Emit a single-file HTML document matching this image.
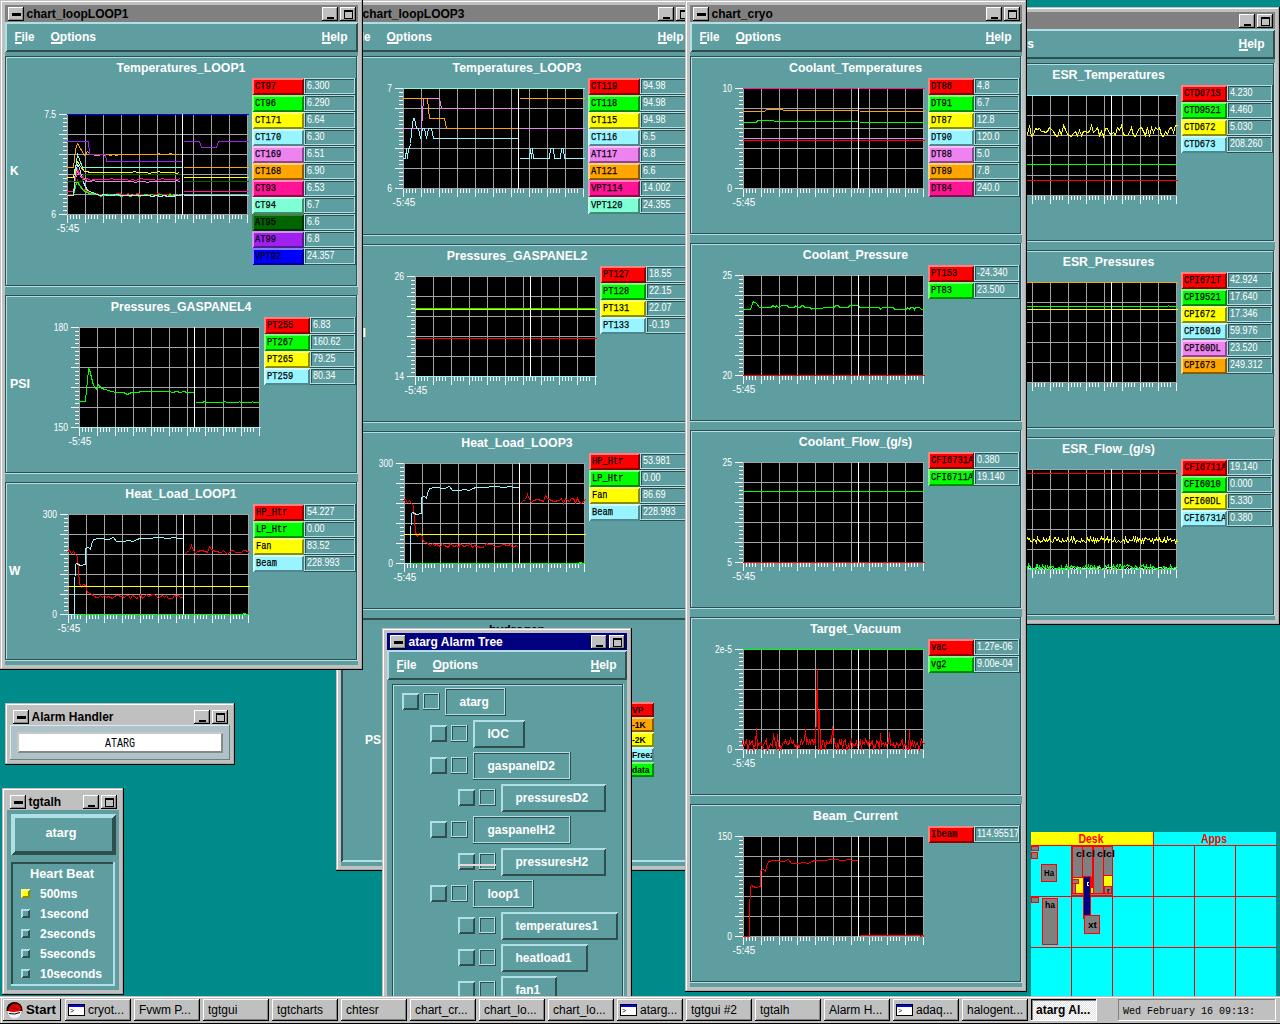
<!DOCTYPE html>
<html><head><meta charset="utf-8"><style>
html,body{margin:0;padding:0;background:#008b8b;overflow:hidden}
svg{display:block}
</style></head><body>
<svg width="1280" height="1024" viewBox="0 0 1280 1024" shape-rendering="crispEdges" font-family="Liberation Sans">
<defs><pattern id="dith" width="2" height="2" patternUnits="userSpaceOnUse"><rect width="1" height="1" fill="#fff"/><rect x="1" y="1" width="1" height="1" fill="#fff"/></pattern></defs>
<rect x="0" y="0" width="1280" height="1024" fill="#008b8b"/>
<rect x="336" y="0" width="363" height="871" fill="#c0c0c0"/>
<rect x="337" y="1" width="361" height="1" fill="#fff"/>
<rect x="337" y="1" width="1" height="869" fill="#fff"/>
<rect x="698" y="0" width="1" height="871" fill="#000"/>
<rect x="336" y="870" width="363" height="1" fill="#000"/>
<rect x="697" y="1" width="1" height="869" fill="#a8a8a8"/>
<rect x="337" y="869" width="361" height="1" fill="#a8a8a8"/>
<rect x="341" y="5" width="353" height="17" fill="#808080"/>
<rect x="344" y="7" width="16" height="14" fill="#c0c0c0"/>
<rect x="344" y="7" width="16" height="1" fill="#fff"/>
<rect x="344" y="7" width="1" height="14" fill="#fff"/>
<rect x="359" y="7" width="1" height="14" fill="#000"/>
<rect x="344" y="20" width="16" height="1" fill="#000"/>
<rect x="358" y="8" width="1" height="12" fill="#888"/>
<rect x="345" y="19" width="14" height="1" fill="#888"/>
<rect x="348" y="13" width="9" height="3" fill="#000"/>
<rect x="658" y="7" width="16" height="14" fill="#c0c0c0"/>
<rect x="658" y="7" width="16" height="1" fill="#fff"/>
<rect x="658" y="7" width="1" height="14" fill="#fff"/>
<rect x="673" y="7" width="1" height="14" fill="#000"/>
<rect x="658" y="20" width="16" height="1" fill="#000"/>
<rect x="672" y="8" width="1" height="12" fill="#888"/>
<rect x="659" y="19" width="14" height="1" fill="#888"/>
<rect x="663" y="17" width="7" height="2" fill="#000"/>
<rect x="676" y="7" width="16" height="14" fill="#c0c0c0"/>
<rect x="676" y="7" width="16" height="1" fill="#fff"/>
<rect x="676" y="7" width="1" height="14" fill="#fff"/>
<rect x="691" y="7" width="1" height="14" fill="#000"/>
<rect x="676" y="20" width="16" height="1" fill="#000"/>
<rect x="690" y="8" width="1" height="12" fill="#888"/>
<rect x="677" y="19" width="14" height="1" fill="#888"/>
<rect x="680" y="10" width="9" height="2" fill="#000"/>
<rect x="680" y="10" width="1" height="9" fill="#000"/>
<rect x="688" y="10" width="1" height="9" fill="#000"/>
<rect x="680" y="18" width="9" height="1" fill="#000"/>
<text x="362.5" y="18" font-size="12" font-weight="bold" fill="#000">chart_loopLOOP3</text>
<rect x="341" y="22" width="353" height="844" fill="#5f9ea0"/>
<rect x="341" y="22" width="353" height="30" fill="#5f9ea0"/>
<polygon points="341,22 694,22 692,24 343,24 343,50 341,52" fill="#b0e0e6"/>
<polygon points="694,22 694,52 341,52 343,50 692,50 692,24" fill="#2f4f4f"/>
<text x="350.5" y="41" font-size="12" font-weight="bold" fill="#fff" textLength="20" lengthAdjust="spacingAndGlyphs">File</text>
<rect x="351" y="42" width="7" height="2" fill="#fff"/>
<text x="386.5" y="41" font-size="12" font-weight="bold" fill="#fff" textLength="45.5" lengthAdjust="spacingAndGlyphs">Options</text>
<rect x="387" y="42" width="11" height="2" fill="#fff"/>
<text x="657.5" y="41" font-size="12" font-weight="bold" fill="#fff" textLength="26" lengthAdjust="spacingAndGlyphs">Help</text>
<rect x="658" y="42" width="9" height="2" fill="#fff"/>
<rect x="341" y="56" width="353" height="180" fill="#5f9ea0"/>
<rect x="341" y="56" width="353" height="1" fill="#2f4f4f"/>
<rect x="341" y="56" width="1" height="180" fill="#2f4f4f"/>
<rect x="342" y="57" width="351" height="1" fill="#b0e0e6"/>
<rect x="342" y="57" width="1" height="178" fill="#b0e0e6"/>
<rect x="342" y="234" width="351" height="1" fill="#2f4f4f"/>
<rect x="692" y="57" width="1" height="178" fill="#2f4f4f"/>
<rect x="341" y="235" width="353" height="1" fill="#b0e0e6"/>
<rect x="693" y="56" width="1" height="180" fill="#b0e0e6"/>
<text x="517.0" y="72" font-size="12" font-weight="bold" fill="#fff" text-anchor="middle" textLength="128.9" lengthAdjust="spacingAndGlyphs">Temperatures_LOOP3</text>
<rect x="403" y="88" width="181" height="101" fill="#000"/>
<rect x="403" y="88" width="1" height="101" fill="#a3a3a3"/>
<rect x="421" y="88" width="1" height="101" fill="#a3a3a3"/>
<rect x="439" y="88" width="1" height="101" fill="#a3a3a3"/>
<rect x="457" y="88" width="1" height="101" fill="#a3a3a3"/>
<rect x="475" y="88" width="1" height="101" fill="#a3a3a3"/>
<rect x="493" y="88" width="1" height="101" fill="#a3a3a3"/>
<rect x="511" y="88" width="1" height="101" fill="#a3a3a3"/>
<rect x="529" y="88" width="1" height="101" fill="#a3a3a3"/>
<rect x="547" y="88" width="1" height="101" fill="#a3a3a3"/>
<rect x="565" y="88" width="1" height="101" fill="#a3a3a3"/>
<rect x="583" y="88" width="1" height="101" fill="#a3a3a3"/>
<rect x="403" y="88" width="181" height="1" fill="#a3a3a3"/>
<rect x="403" y="108" width="181" height="1" fill="#a3a3a3"/>
<rect x="403" y="128" width="181" height="1" fill="#a3a3a3"/>
<rect x="403" y="148" width="181" height="1" fill="#a3a3a3"/>
<rect x="403" y="168" width="181" height="1" fill="#a3a3a3"/>
<rect x="403" y="188" width="181" height="1" fill="#a3a3a3"/>
<rect x="395" y="88" width="8" height="1" fill="#fff"/>
<rect x="399" y="92" width="4" height="1" fill="#fff"/>
<rect x="399" y="96" width="4" height="1" fill="#fff"/>
<rect x="399" y="100" width="4" height="1" fill="#fff"/>
<rect x="399" y="104" width="4" height="1" fill="#fff"/>
<rect x="395" y="108" width="8" height="1" fill="#fff"/>
<rect x="399" y="112" width="4" height="1" fill="#fff"/>
<rect x="399" y="116" width="4" height="1" fill="#fff"/>
<rect x="399" y="120" width="4" height="1" fill="#fff"/>
<rect x="399" y="124" width="4" height="1" fill="#fff"/>
<rect x="395" y="128" width="8" height="1" fill="#fff"/>
<rect x="399" y="132" width="4" height="1" fill="#fff"/>
<rect x="399" y="136" width="4" height="1" fill="#fff"/>
<rect x="399" y="140" width="4" height="1" fill="#fff"/>
<rect x="399" y="144" width="4" height="1" fill="#fff"/>
<rect x="395" y="148" width="8" height="1" fill="#fff"/>
<rect x="399" y="152" width="4" height="1" fill="#fff"/>
<rect x="399" y="156" width="4" height="1" fill="#fff"/>
<rect x="399" y="160" width="4" height="1" fill="#fff"/>
<rect x="399" y="164" width="4" height="1" fill="#fff"/>
<rect x="395" y="168" width="8" height="1" fill="#fff"/>
<rect x="399" y="172" width="4" height="1" fill="#fff"/>
<rect x="399" y="176" width="4" height="1" fill="#fff"/>
<rect x="399" y="180" width="4" height="1" fill="#fff"/>
<rect x="399" y="184" width="4" height="1" fill="#fff"/>
<rect x="395" y="188" width="8" height="1" fill="#fff"/>
<rect x="403" y="189" width="1" height="8" fill="#fff"/>
<rect x="406" y="189" width="1" height="4" fill="#fff"/>
<rect x="409" y="189" width="1" height="4" fill="#fff"/>
<rect x="412" y="189" width="1" height="4" fill="#fff"/>
<rect x="415" y="189" width="1" height="4" fill="#fff"/>
<rect x="421" y="189" width="1" height="8" fill="#fff"/>
<rect x="424" y="189" width="1" height="4" fill="#fff"/>
<rect x="427" y="189" width="1" height="4" fill="#fff"/>
<rect x="430" y="189" width="1" height="4" fill="#fff"/>
<rect x="433" y="189" width="1" height="4" fill="#fff"/>
<rect x="439" y="189" width="1" height="8" fill="#fff"/>
<rect x="442" y="189" width="1" height="4" fill="#fff"/>
<rect x="445" y="189" width="1" height="4" fill="#fff"/>
<rect x="448" y="189" width="1" height="4" fill="#fff"/>
<rect x="451" y="189" width="1" height="4" fill="#fff"/>
<rect x="457" y="189" width="1" height="8" fill="#fff"/>
<rect x="460" y="189" width="1" height="4" fill="#fff"/>
<rect x="463" y="189" width="1" height="4" fill="#fff"/>
<rect x="466" y="189" width="1" height="4" fill="#fff"/>
<rect x="469" y="189" width="1" height="4" fill="#fff"/>
<rect x="475" y="189" width="1" height="8" fill="#fff"/>
<rect x="478" y="189" width="1" height="4" fill="#fff"/>
<rect x="481" y="189" width="1" height="4" fill="#fff"/>
<rect x="484" y="189" width="1" height="4" fill="#fff"/>
<rect x="487" y="189" width="1" height="4" fill="#fff"/>
<rect x="493" y="189" width="1" height="8" fill="#fff"/>
<rect x="496" y="189" width="1" height="4" fill="#fff"/>
<rect x="499" y="189" width="1" height="4" fill="#fff"/>
<rect x="502" y="189" width="1" height="4" fill="#fff"/>
<rect x="505" y="189" width="1" height="4" fill="#fff"/>
<rect x="511" y="189" width="1" height="8" fill="#fff"/>
<rect x="514" y="189" width="1" height="4" fill="#fff"/>
<rect x="517" y="189" width="1" height="4" fill="#fff"/>
<rect x="520" y="189" width="1" height="4" fill="#fff"/>
<rect x="523" y="189" width="1" height="4" fill="#fff"/>
<rect x="529" y="189" width="1" height="8" fill="#fff"/>
<rect x="532" y="189" width="1" height="4" fill="#fff"/>
<rect x="535" y="189" width="1" height="4" fill="#fff"/>
<rect x="538" y="189" width="1" height="4" fill="#fff"/>
<rect x="541" y="189" width="1" height="4" fill="#fff"/>
<rect x="547" y="189" width="1" height="8" fill="#fff"/>
<rect x="550" y="189" width="1" height="4" fill="#fff"/>
<rect x="553" y="189" width="1" height="4" fill="#fff"/>
<rect x="556" y="189" width="1" height="4" fill="#fff"/>
<rect x="559" y="189" width="1" height="4" fill="#fff"/>
<rect x="565" y="189" width="1" height="8" fill="#fff"/>
<rect x="568" y="189" width="1" height="4" fill="#fff"/>
<rect x="571" y="189" width="1" height="4" fill="#fff"/>
<rect x="574" y="189" width="1" height="4" fill="#fff"/>
<rect x="577" y="189" width="1" height="4" fill="#fff"/>
<rect x="583" y="189" width="1" height="8" fill="#fff"/>
<polyline points="402.5,88.5 584.5,88.5" fill="none" stroke="#7fffd4" stroke-width="1"/>
<polyline points="402.5,128.5 421.5,128.5 422.5,114.5 423.5,98.5 439.5,98.5 440.5,103.5 441.5,108.5 517.5,108.5" fill="none" stroke="#ee82ee" stroke-width="1"/>
<polyline points="519.5,128.5 584.5,128.5" fill="none" stroke="#ee82ee" stroke-width="1"/>
<polyline points="402.5,98.5 427.5,98.5 428.5,108.5 429.5,118.5 444.5,118.5 445.5,123.5 446.5,128.5 517.5,128.5" fill="none" stroke="#ffa500" stroke-width="1"/>
<polyline points="519.5,98.5 584.5,98.5" fill="none" stroke="#ffa500" stroke-width="1"/>
<polyline points="402.5,158.5 405.5,158.5 406.5,148.5 407.5,158.5 408.5,148.5 409.5,148.5 410.5,143.5 411.5,133.5 412.5,123.5 413.5,118.5 414.5,118.5 415.5,123.5 416.5,128.5 418.5,128.5 419.5,133.5 420.5,138.5 421.5,133.5 422.5,128.5 424.5,128.5 425.5,133.5 426.5,138.5 427.5,133.5 428.5,128.5 431.5,128.5 432.5,133.5 433.5,138.5 517.5,138.5" fill="none" stroke="#98f5ff" stroke-width="1"/>
<polyline points="519.5,158.5 529.5,158.5 530.5,148.5 531.5,158.5 532.5,148.5 533.5,158.5 549.5,158.5 550.5,148.5 553.5,148.5 554.5,158.5 560.5,158.5 561.5,148.5 563.5,148.5 564.5,158.5 584.5,158.5" fill="none" stroke="#98f5ff" stroke-width="1"/>
<rect x="518" y="88" width="1" height="101" fill="#fff"/>
<text x="392" y="92" font-size="10" fill="#fff" text-anchor="end" textLength="4.7" lengthAdjust="spacingAndGlyphs">7</text>
<text x="392" y="192" font-size="10" fill="#fff" text-anchor="end" textLength="4.7" lengthAdjust="spacingAndGlyphs">6</text>
<text x="404" y="206" font-size="10" fill="#fff" text-anchor="middle">-5:45</text>
<rect x="588" y="78" width="52" height="17" fill="#ff0000"/>
<polygon points="588,78 640,78 638,80 590,80 590,93 588,95" fill="#ff8080"/>
<polygon points="640,78 640,95 588,95 590,93 638,93 638,80" fill="#8b0000"/>
<svg x="590" y="80" width="48" height="13" overflow="hidden">
<text x="1" y="9" font-size="11" fill="#000" textLength="26.2" lengthAdjust="spacingAndGlyphs" font-family="Liberation Mono" stroke="#000" stroke-width="0.25">CT119</text>
</svg>
<rect x="640" y="78" width="52" height="17" fill="#5f9ea0"/>
<rect x="640" y="78" width="52" height="1" fill="#b0e0e6"/>
<rect x="640" y="78" width="1" height="17" fill="#b0e0e6"/>
<rect x="641" y="79" width="50" height="1" fill="#2f4f4f"/>
<rect x="641" y="79" width="1" height="15" fill="#2f4f4f"/>
<rect x="641" y="93" width="50" height="1" fill="#b0e0e6"/>
<rect x="690" y="79" width="1" height="15" fill="#b0e0e6"/>
<rect x="640" y="94" width="52" height="1" fill="#2f4f4f"/>
<rect x="691" y="78" width="1" height="17" fill="#2f4f4f"/>
<svg x="642" y="80" width="48" height="13" overflow="hidden">
<text x="1" y="9" font-size="10" fill="#fff" textLength="22.5" lengthAdjust="spacingAndGlyphs">94.98</text>
</svg>
<rect x="588" y="95" width="52" height="17" fill="#00ff00"/>
<polygon points="588,95 640,95 638,97 590,97 590,110 588,112" fill="#80ff80"/>
<polygon points="640,95 640,112 588,112 590,110 638,110 638,97" fill="#008b00"/>
<svg x="590" y="97" width="48" height="13" overflow="hidden">
<text x="1" y="9" font-size="11" fill="#000" textLength="26.2" lengthAdjust="spacingAndGlyphs" font-family="Liberation Mono" stroke="#000" stroke-width="0.25">CT118</text>
</svg>
<rect x="640" y="95" width="52" height="17" fill="#5f9ea0"/>
<rect x="640" y="95" width="52" height="1" fill="#b0e0e6"/>
<rect x="640" y="95" width="1" height="17" fill="#b0e0e6"/>
<rect x="641" y="96" width="50" height="1" fill="#2f4f4f"/>
<rect x="641" y="96" width="1" height="15" fill="#2f4f4f"/>
<rect x="641" y="110" width="50" height="1" fill="#b0e0e6"/>
<rect x="690" y="96" width="1" height="15" fill="#b0e0e6"/>
<rect x="640" y="111" width="52" height="1" fill="#2f4f4f"/>
<rect x="691" y="95" width="1" height="17" fill="#2f4f4f"/>
<svg x="642" y="97" width="48" height="13" overflow="hidden">
<text x="1" y="9" font-size="10" fill="#fff" textLength="22.5" lengthAdjust="spacingAndGlyphs">94.98</text>
</svg>
<rect x="588" y="112" width="52" height="17" fill="#ffff00"/>
<polygon points="588,112 640,112 638,114 590,114 590,127 588,129" fill="#ffff80"/>
<polygon points="640,112 640,129 588,129 590,127 638,127 638,114" fill="#8b8b00"/>
<svg x="590" y="114" width="48" height="13" overflow="hidden">
<text x="1" y="9" font-size="11" fill="#000" textLength="26.2" lengthAdjust="spacingAndGlyphs" font-family="Liberation Mono" stroke="#000" stroke-width="0.25">CT115</text>
</svg>
<rect x="640" y="112" width="52" height="17" fill="#5f9ea0"/>
<rect x="640" y="112" width="52" height="1" fill="#b0e0e6"/>
<rect x="640" y="112" width="1" height="17" fill="#b0e0e6"/>
<rect x="641" y="113" width="50" height="1" fill="#2f4f4f"/>
<rect x="641" y="113" width="1" height="15" fill="#2f4f4f"/>
<rect x="641" y="127" width="50" height="1" fill="#b0e0e6"/>
<rect x="690" y="113" width="1" height="15" fill="#b0e0e6"/>
<rect x="640" y="128" width="52" height="1" fill="#2f4f4f"/>
<rect x="691" y="112" width="1" height="17" fill="#2f4f4f"/>
<svg x="642" y="114" width="48" height="13" overflow="hidden">
<text x="1" y="9" font-size="10" fill="#fff" textLength="22.5" lengthAdjust="spacingAndGlyphs">94.98</text>
</svg>
<rect x="588" y="129" width="52" height="17" fill="#98f5ff"/>
<polygon points="588,129 640,129 638,131 590,131 590,144 588,146" fill="#d0faff"/>
<polygon points="640,129 640,146 588,146 590,144 638,144 638,131" fill="#53868b"/>
<svg x="590" y="131" width="48" height="13" overflow="hidden">
<text x="1" y="9" font-size="11" fill="#000" textLength="26.2" lengthAdjust="spacingAndGlyphs" font-family="Liberation Mono" stroke="#000" stroke-width="0.25">CT116</text>
</svg>
<rect x="640" y="129" width="52" height="17" fill="#5f9ea0"/>
<rect x="640" y="129" width="52" height="1" fill="#b0e0e6"/>
<rect x="640" y="129" width="1" height="17" fill="#b0e0e6"/>
<rect x="641" y="130" width="50" height="1" fill="#2f4f4f"/>
<rect x="641" y="130" width="1" height="15" fill="#2f4f4f"/>
<rect x="641" y="144" width="50" height="1" fill="#b0e0e6"/>
<rect x="690" y="130" width="1" height="15" fill="#b0e0e6"/>
<rect x="640" y="145" width="52" height="1" fill="#2f4f4f"/>
<rect x="691" y="129" width="1" height="17" fill="#2f4f4f"/>
<svg x="642" y="131" width="48" height="13" overflow="hidden">
<text x="1" y="9" font-size="10" fill="#fff" textLength="12.5" lengthAdjust="spacingAndGlyphs">6.5</text>
</svg>
<rect x="588" y="146" width="52" height="17" fill="#ee82ee"/>
<polygon points="588,146 640,146 638,148 590,148 590,161 588,163" fill="#f8c0f8"/>
<polygon points="640,146 640,163 588,163 590,161 638,161 638,148" fill="#8b478b"/>
<svg x="590" y="148" width="48" height="13" overflow="hidden">
<text x="1" y="9" font-size="11" fill="#000" textLength="26.2" lengthAdjust="spacingAndGlyphs" font-family="Liberation Mono" stroke="#000" stroke-width="0.25">AT117</text>
</svg>
<rect x="640" y="146" width="52" height="17" fill="#5f9ea0"/>
<rect x="640" y="146" width="52" height="1" fill="#b0e0e6"/>
<rect x="640" y="146" width="1" height="17" fill="#b0e0e6"/>
<rect x="641" y="147" width="50" height="1" fill="#2f4f4f"/>
<rect x="641" y="147" width="1" height="15" fill="#2f4f4f"/>
<rect x="641" y="161" width="50" height="1" fill="#b0e0e6"/>
<rect x="690" y="147" width="1" height="15" fill="#b0e0e6"/>
<rect x="640" y="162" width="52" height="1" fill="#2f4f4f"/>
<rect x="691" y="146" width="1" height="17" fill="#2f4f4f"/>
<svg x="642" y="148" width="48" height="13" overflow="hidden">
<text x="1" y="9" font-size="10" fill="#fff" textLength="12.5" lengthAdjust="spacingAndGlyphs">6.8</text>
</svg>
<rect x="588" y="163" width="52" height="17" fill="#ffa500"/>
<polygon points="588,163 640,163 638,165 590,165 590,178 588,180" fill="#ffd280"/>
<polygon points="640,163 640,180 588,180 590,178 638,178 638,165" fill="#8b5a00"/>
<svg x="590" y="165" width="48" height="13" overflow="hidden">
<text x="1" y="9" font-size="11" fill="#000" textLength="26.2" lengthAdjust="spacingAndGlyphs" font-family="Liberation Mono" stroke="#000" stroke-width="0.25">AT121</text>
</svg>
<rect x="640" y="163" width="52" height="17" fill="#5f9ea0"/>
<rect x="640" y="163" width="52" height="1" fill="#b0e0e6"/>
<rect x="640" y="163" width="1" height="17" fill="#b0e0e6"/>
<rect x="641" y="164" width="50" height="1" fill="#2f4f4f"/>
<rect x="641" y="164" width="1" height="15" fill="#2f4f4f"/>
<rect x="641" y="178" width="50" height="1" fill="#b0e0e6"/>
<rect x="690" y="164" width="1" height="15" fill="#b0e0e6"/>
<rect x="640" y="179" width="52" height="1" fill="#2f4f4f"/>
<rect x="691" y="163" width="1" height="17" fill="#2f4f4f"/>
<svg x="642" y="165" width="48" height="13" overflow="hidden">
<text x="1" y="9" font-size="10" fill="#fff" textLength="12.5" lengthAdjust="spacingAndGlyphs">6.6</text>
</svg>
<rect x="588" y="180" width="52" height="17" fill="#ff1493"/>
<polygon points="588,180 640,180 638,182 590,182 590,195 588,197" fill="#ff8ac8"/>
<polygon points="640,180 640,197 588,197 590,195 638,195 638,182" fill="#8b0a50"/>
<svg x="590" y="182" width="48" height="13" overflow="hidden">
<text x="1" y="9" font-size="11" fill="#000" textLength="31.6" lengthAdjust="spacingAndGlyphs" font-family="Liberation Mono" stroke="#000" stroke-width="0.25">VPT114</text>
</svg>
<rect x="640" y="180" width="52" height="17" fill="#5f9ea0"/>
<rect x="640" y="180" width="52" height="1" fill="#b0e0e6"/>
<rect x="640" y="180" width="1" height="17" fill="#b0e0e6"/>
<rect x="641" y="181" width="50" height="1" fill="#2f4f4f"/>
<rect x="641" y="181" width="1" height="15" fill="#2f4f4f"/>
<rect x="641" y="195" width="50" height="1" fill="#b0e0e6"/>
<rect x="690" y="181" width="1" height="15" fill="#b0e0e6"/>
<rect x="640" y="196" width="52" height="1" fill="#2f4f4f"/>
<rect x="691" y="180" width="1" height="17" fill="#2f4f4f"/>
<svg x="642" y="182" width="48" height="13" overflow="hidden">
<text x="1" y="9" font-size="10" fill="#fff" textLength="27.5" lengthAdjust="spacingAndGlyphs">14.002</text>
</svg>
<rect x="588" y="197" width="52" height="17" fill="#7fffd4"/>
<polygon points="588,197 640,197 638,199 590,199 590,212 588,214" fill="#c0ffea"/>
<polygon points="640,197 640,214 588,214 590,212 638,212 638,199" fill="#458b74"/>
<svg x="590" y="199" width="48" height="13" overflow="hidden">
<text x="1" y="9" font-size="11" fill="#000" textLength="31.6" lengthAdjust="spacingAndGlyphs" font-family="Liberation Mono" stroke="#000" stroke-width="0.25">VPT120</text>
</svg>
<rect x="640" y="197" width="52" height="17" fill="#5f9ea0"/>
<rect x="640" y="197" width="52" height="1" fill="#b0e0e6"/>
<rect x="640" y="197" width="1" height="17" fill="#b0e0e6"/>
<rect x="641" y="198" width="50" height="1" fill="#2f4f4f"/>
<rect x="641" y="198" width="1" height="15" fill="#2f4f4f"/>
<rect x="641" y="212" width="50" height="1" fill="#b0e0e6"/>
<rect x="690" y="198" width="1" height="15" fill="#b0e0e6"/>
<rect x="640" y="213" width="52" height="1" fill="#2f4f4f"/>
<rect x="691" y="197" width="1" height="17" fill="#2f4f4f"/>
<svg x="642" y="199" width="48" height="13" overflow="hidden">
<text x="1" y="9" font-size="10" fill="#fff" textLength="27.5" lengthAdjust="spacingAndGlyphs">24.355</text>
</svg>
<rect x="341" y="244" width="353" height="179" fill="#5f9ea0"/>
<rect x="341" y="244" width="353" height="1" fill="#2f4f4f"/>
<rect x="341" y="244" width="1" height="179" fill="#2f4f4f"/>
<rect x="342" y="245" width="351" height="1" fill="#b0e0e6"/>
<rect x="342" y="245" width="1" height="177" fill="#b0e0e6"/>
<rect x="342" y="421" width="351" height="1" fill="#2f4f4f"/>
<rect x="692" y="245" width="1" height="177" fill="#2f4f4f"/>
<rect x="341" y="422" width="353" height="1" fill="#b0e0e6"/>
<rect x="693" y="244" width="1" height="179" fill="#b0e0e6"/>
<text x="517.0" y="260" font-size="12" font-weight="bold" fill="#fff" text-anchor="middle" textLength="140.6" lengthAdjust="spacingAndGlyphs">Pressures_GASPANEL2</text>
<text x="346" y="337" font-size="12" font-weight="bold" fill="#fff" textLength="20" lengthAdjust="spacingAndGlyphs">PSI</text>
<rect x="415" y="276" width="181" height="101" fill="#000"/>
<rect x="415" y="276" width="1" height="101" fill="#a3a3a3"/>
<rect x="433" y="276" width="1" height="101" fill="#a3a3a3"/>
<rect x="451" y="276" width="1" height="101" fill="#a3a3a3"/>
<rect x="469" y="276" width="1" height="101" fill="#a3a3a3"/>
<rect x="487" y="276" width="1" height="101" fill="#a3a3a3"/>
<rect x="505" y="276" width="1" height="101" fill="#a3a3a3"/>
<rect x="523" y="276" width="1" height="101" fill="#a3a3a3"/>
<rect x="541" y="276" width="1" height="101" fill="#a3a3a3"/>
<rect x="559" y="276" width="1" height="101" fill="#a3a3a3"/>
<rect x="577" y="276" width="1" height="101" fill="#a3a3a3"/>
<rect x="595" y="276" width="1" height="101" fill="#a3a3a3"/>
<rect x="415" y="276" width="181" height="1" fill="#a3a3a3"/>
<rect x="415" y="296" width="181" height="1" fill="#a3a3a3"/>
<rect x="415" y="316" width="181" height="1" fill="#a3a3a3"/>
<rect x="415" y="336" width="181" height="1" fill="#a3a3a3"/>
<rect x="415" y="356" width="181" height="1" fill="#a3a3a3"/>
<rect x="415" y="376" width="181" height="1" fill="#a3a3a3"/>
<rect x="407" y="276" width="8" height="1" fill="#fff"/>
<rect x="411" y="280" width="4" height="1" fill="#fff"/>
<rect x="411" y="284" width="4" height="1" fill="#fff"/>
<rect x="411" y="288" width="4" height="1" fill="#fff"/>
<rect x="411" y="292" width="4" height="1" fill="#fff"/>
<rect x="407" y="296" width="8" height="1" fill="#fff"/>
<rect x="411" y="300" width="4" height="1" fill="#fff"/>
<rect x="411" y="304" width="4" height="1" fill="#fff"/>
<rect x="411" y="308" width="4" height="1" fill="#fff"/>
<rect x="411" y="312" width="4" height="1" fill="#fff"/>
<rect x="407" y="316" width="8" height="1" fill="#fff"/>
<rect x="411" y="320" width="4" height="1" fill="#fff"/>
<rect x="411" y="324" width="4" height="1" fill="#fff"/>
<rect x="411" y="328" width="4" height="1" fill="#fff"/>
<rect x="411" y="332" width="4" height="1" fill="#fff"/>
<rect x="407" y="336" width="8" height="1" fill="#fff"/>
<rect x="411" y="340" width="4" height="1" fill="#fff"/>
<rect x="411" y="344" width="4" height="1" fill="#fff"/>
<rect x="411" y="348" width="4" height="1" fill="#fff"/>
<rect x="411" y="352" width="4" height="1" fill="#fff"/>
<rect x="407" y="356" width="8" height="1" fill="#fff"/>
<rect x="411" y="360" width="4" height="1" fill="#fff"/>
<rect x="411" y="364" width="4" height="1" fill="#fff"/>
<rect x="411" y="368" width="4" height="1" fill="#fff"/>
<rect x="411" y="372" width="4" height="1" fill="#fff"/>
<rect x="407" y="376" width="8" height="1" fill="#fff"/>
<rect x="415" y="377" width="1" height="8" fill="#fff"/>
<rect x="418" y="377" width="1" height="4" fill="#fff"/>
<rect x="421" y="377" width="1" height="4" fill="#fff"/>
<rect x="424" y="377" width="1" height="4" fill="#fff"/>
<rect x="427" y="377" width="1" height="4" fill="#fff"/>
<rect x="433" y="377" width="1" height="8" fill="#fff"/>
<rect x="436" y="377" width="1" height="4" fill="#fff"/>
<rect x="439" y="377" width="1" height="4" fill="#fff"/>
<rect x="442" y="377" width="1" height="4" fill="#fff"/>
<rect x="445" y="377" width="1" height="4" fill="#fff"/>
<rect x="451" y="377" width="1" height="8" fill="#fff"/>
<rect x="454" y="377" width="1" height="4" fill="#fff"/>
<rect x="457" y="377" width="1" height="4" fill="#fff"/>
<rect x="460" y="377" width="1" height="4" fill="#fff"/>
<rect x="463" y="377" width="1" height="4" fill="#fff"/>
<rect x="469" y="377" width="1" height="8" fill="#fff"/>
<rect x="472" y="377" width="1" height="4" fill="#fff"/>
<rect x="475" y="377" width="1" height="4" fill="#fff"/>
<rect x="478" y="377" width="1" height="4" fill="#fff"/>
<rect x="481" y="377" width="1" height="4" fill="#fff"/>
<rect x="487" y="377" width="1" height="8" fill="#fff"/>
<rect x="490" y="377" width="1" height="4" fill="#fff"/>
<rect x="493" y="377" width="1" height="4" fill="#fff"/>
<rect x="496" y="377" width="1" height="4" fill="#fff"/>
<rect x="499" y="377" width="1" height="4" fill="#fff"/>
<rect x="505" y="377" width="1" height="8" fill="#fff"/>
<rect x="508" y="377" width="1" height="4" fill="#fff"/>
<rect x="511" y="377" width="1" height="4" fill="#fff"/>
<rect x="514" y="377" width="1" height="4" fill="#fff"/>
<rect x="517" y="377" width="1" height="4" fill="#fff"/>
<rect x="523" y="377" width="1" height="8" fill="#fff"/>
<rect x="526" y="377" width="1" height="4" fill="#fff"/>
<rect x="529" y="377" width="1" height="4" fill="#fff"/>
<rect x="532" y="377" width="1" height="4" fill="#fff"/>
<rect x="535" y="377" width="1" height="4" fill="#fff"/>
<rect x="541" y="377" width="1" height="8" fill="#fff"/>
<rect x="544" y="377" width="1" height="4" fill="#fff"/>
<rect x="547" y="377" width="1" height="4" fill="#fff"/>
<rect x="550" y="377" width="1" height="4" fill="#fff"/>
<rect x="553" y="377" width="1" height="4" fill="#fff"/>
<rect x="559" y="377" width="1" height="8" fill="#fff"/>
<rect x="562" y="377" width="1" height="4" fill="#fff"/>
<rect x="565" y="377" width="1" height="4" fill="#fff"/>
<rect x="568" y="377" width="1" height="4" fill="#fff"/>
<rect x="571" y="377" width="1" height="4" fill="#fff"/>
<rect x="577" y="377" width="1" height="8" fill="#fff"/>
<rect x="580" y="377" width="1" height="4" fill="#fff"/>
<rect x="583" y="377" width="1" height="4" fill="#fff"/>
<rect x="586" y="377" width="1" height="4" fill="#fff"/>
<rect x="589" y="377" width="1" height="4" fill="#fff"/>
<rect x="595" y="377" width="1" height="8" fill="#fff"/>
<polyline points="414.5,376.5 596.5,376.5" fill="none" stroke="#98f5ff" stroke-width="1"/>
<polyline points="414.5,309.5 596.5,309.5" fill="none" stroke="#ffff00" stroke-width="1"/>
<polyline points="414.5,308.5 596.5,308.5" fill="none" stroke="#00ff00" stroke-width="1"/>
<polyline points="414.5,338.5 596.5,338.5" fill="none" stroke="#ff0000" stroke-width="1"/>
<rect x="530" y="276" width="1" height="101" fill="#fff"/>
<text x="404" y="280" font-size="10" fill="#fff" text-anchor="end" textLength="9.5" lengthAdjust="spacingAndGlyphs">26</text>
<text x="404" y="380" font-size="10" fill="#fff" text-anchor="end" textLength="9.5" lengthAdjust="spacingAndGlyphs">14</text>
<text x="416" y="394" font-size="10" fill="#fff" text-anchor="middle">-5:45</text>
<rect x="600" y="266" width="46" height="17" fill="#ff0000"/>
<polygon points="600,266 646,266 644,268 602,268 602,281 600,283" fill="#ff8080"/>
<polygon points="646,266 646,283 600,283 602,281 644,281 644,268" fill="#8b0000"/>
<svg x="602" y="268" width="42" height="13" overflow="hidden">
<text x="1" y="9" font-size="11" fill="#000" textLength="26.2" lengthAdjust="spacingAndGlyphs" font-family="Liberation Mono" stroke="#000" stroke-width="0.25">PT127</text>
</svg>
<rect x="646" y="266" width="46" height="17" fill="#5f9ea0"/>
<rect x="646" y="266" width="46" height="1" fill="#b0e0e6"/>
<rect x="646" y="266" width="1" height="17" fill="#b0e0e6"/>
<rect x="647" y="267" width="44" height="1" fill="#2f4f4f"/>
<rect x="647" y="267" width="1" height="15" fill="#2f4f4f"/>
<rect x="647" y="281" width="44" height="1" fill="#b0e0e6"/>
<rect x="690" y="267" width="1" height="15" fill="#b0e0e6"/>
<rect x="646" y="282" width="46" height="1" fill="#2f4f4f"/>
<rect x="691" y="266" width="1" height="17" fill="#2f4f4f"/>
<svg x="648" y="268" width="42" height="13" overflow="hidden">
<text x="1" y="9" font-size="10" fill="#fff" textLength="22.5" lengthAdjust="spacingAndGlyphs">18.55</text>
</svg>
<rect x="600" y="283" width="46" height="17" fill="#00ff00"/>
<polygon points="600,283 646,283 644,285 602,285 602,298 600,300" fill="#80ff80"/>
<polygon points="646,283 646,300 600,300 602,298 644,298 644,285" fill="#008b00"/>
<svg x="602" y="285" width="42" height="13" overflow="hidden">
<text x="1" y="9" font-size="11" fill="#000" textLength="26.2" lengthAdjust="spacingAndGlyphs" font-family="Liberation Mono" stroke="#000" stroke-width="0.25">PT128</text>
</svg>
<rect x="646" y="283" width="46" height="17" fill="#5f9ea0"/>
<rect x="646" y="283" width="46" height="1" fill="#b0e0e6"/>
<rect x="646" y="283" width="1" height="17" fill="#b0e0e6"/>
<rect x="647" y="284" width="44" height="1" fill="#2f4f4f"/>
<rect x="647" y="284" width="1" height="15" fill="#2f4f4f"/>
<rect x="647" y="298" width="44" height="1" fill="#b0e0e6"/>
<rect x="690" y="284" width="1" height="15" fill="#b0e0e6"/>
<rect x="646" y="299" width="46" height="1" fill="#2f4f4f"/>
<rect x="691" y="283" width="1" height="17" fill="#2f4f4f"/>
<svg x="648" y="285" width="42" height="13" overflow="hidden">
<text x="1" y="9" font-size="10" fill="#fff" textLength="22.5" lengthAdjust="spacingAndGlyphs">22.15</text>
</svg>
<rect x="600" y="300" width="46" height="17" fill="#ffff00"/>
<polygon points="600,300 646,300 644,302 602,302 602,315 600,317" fill="#ffff80"/>
<polygon points="646,300 646,317 600,317 602,315 644,315 644,302" fill="#8b8b00"/>
<svg x="602" y="302" width="42" height="13" overflow="hidden">
<text x="1" y="9" font-size="11" fill="#000" textLength="26.2" lengthAdjust="spacingAndGlyphs" font-family="Liberation Mono" stroke="#000" stroke-width="0.25">PT131</text>
</svg>
<rect x="646" y="300" width="46" height="17" fill="#5f9ea0"/>
<rect x="646" y="300" width="46" height="1" fill="#b0e0e6"/>
<rect x="646" y="300" width="1" height="17" fill="#b0e0e6"/>
<rect x="647" y="301" width="44" height="1" fill="#2f4f4f"/>
<rect x="647" y="301" width="1" height="15" fill="#2f4f4f"/>
<rect x="647" y="315" width="44" height="1" fill="#b0e0e6"/>
<rect x="690" y="301" width="1" height="15" fill="#b0e0e6"/>
<rect x="646" y="316" width="46" height="1" fill="#2f4f4f"/>
<rect x="691" y="300" width="1" height="17" fill="#2f4f4f"/>
<svg x="648" y="302" width="42" height="13" overflow="hidden">
<text x="1" y="9" font-size="10" fill="#fff" textLength="22.5" lengthAdjust="spacingAndGlyphs">22.07</text>
</svg>
<rect x="600" y="317" width="46" height="17" fill="#98f5ff"/>
<polygon points="600,317 646,317 644,319 602,319 602,332 600,334" fill="#d0faff"/>
<polygon points="646,317 646,334 600,334 602,332 644,332 644,319" fill="#53868b"/>
<svg x="602" y="319" width="42" height="13" overflow="hidden">
<text x="1" y="9" font-size="11" fill="#000" textLength="26.2" lengthAdjust="spacingAndGlyphs" font-family="Liberation Mono" stroke="#000" stroke-width="0.25">PT133</text>
</svg>
<rect x="646" y="317" width="46" height="17" fill="#5f9ea0"/>
<rect x="646" y="317" width="46" height="1" fill="#b0e0e6"/>
<rect x="646" y="317" width="1" height="17" fill="#b0e0e6"/>
<rect x="647" y="318" width="44" height="1" fill="#2f4f4f"/>
<rect x="647" y="318" width="1" height="15" fill="#2f4f4f"/>
<rect x="647" y="332" width="44" height="1" fill="#b0e0e6"/>
<rect x="690" y="318" width="1" height="15" fill="#b0e0e6"/>
<rect x="646" y="333" width="46" height="1" fill="#2f4f4f"/>
<rect x="691" y="317" width="1" height="17" fill="#2f4f4f"/>
<svg x="648" y="319" width="42" height="13" overflow="hidden">
<text x="1" y="9" font-size="10" fill="#fff" textLength="20.5" lengthAdjust="spacingAndGlyphs">-0.19</text>
</svg>
<rect x="341" y="431" width="353" height="179" fill="#5f9ea0"/>
<rect x="341" y="431" width="353" height="1" fill="#2f4f4f"/>
<rect x="341" y="431" width="1" height="179" fill="#2f4f4f"/>
<rect x="342" y="432" width="351" height="1" fill="#b0e0e6"/>
<rect x="342" y="432" width="1" height="177" fill="#b0e0e6"/>
<rect x="342" y="608" width="351" height="1" fill="#2f4f4f"/>
<rect x="692" y="432" width="1" height="177" fill="#2f4f4f"/>
<rect x="341" y="609" width="353" height="1" fill="#b0e0e6"/>
<rect x="693" y="431" width="1" height="179" fill="#b0e0e6"/>
<text x="517.0" y="447" font-size="12" font-weight="bold" fill="#fff" text-anchor="middle" textLength="111.4" lengthAdjust="spacingAndGlyphs">Heat_Load_LOOP3</text>
<rect x="404" y="463" width="181" height="101" fill="#000"/>
<rect x="404" y="463" width="1" height="101" fill="#a3a3a3"/>
<rect x="422" y="463" width="1" height="101" fill="#a3a3a3"/>
<rect x="440" y="463" width="1" height="101" fill="#a3a3a3"/>
<rect x="458" y="463" width="1" height="101" fill="#a3a3a3"/>
<rect x="476" y="463" width="1" height="101" fill="#a3a3a3"/>
<rect x="494" y="463" width="1" height="101" fill="#a3a3a3"/>
<rect x="512" y="463" width="1" height="101" fill="#a3a3a3"/>
<rect x="530" y="463" width="1" height="101" fill="#a3a3a3"/>
<rect x="548" y="463" width="1" height="101" fill="#a3a3a3"/>
<rect x="566" y="463" width="1" height="101" fill="#a3a3a3"/>
<rect x="584" y="463" width="1" height="101" fill="#a3a3a3"/>
<rect x="404" y="463" width="181" height="1" fill="#a3a3a3"/>
<rect x="404" y="483" width="181" height="1" fill="#a3a3a3"/>
<rect x="404" y="503" width="181" height="1" fill="#a3a3a3"/>
<rect x="404" y="523" width="181" height="1" fill="#a3a3a3"/>
<rect x="404" y="543" width="181" height="1" fill="#a3a3a3"/>
<rect x="404" y="563" width="181" height="1" fill="#a3a3a3"/>
<rect x="396" y="463" width="8" height="1" fill="#fff"/>
<rect x="400" y="467" width="4" height="1" fill="#fff"/>
<rect x="400" y="471" width="4" height="1" fill="#fff"/>
<rect x="400" y="475" width="4" height="1" fill="#fff"/>
<rect x="400" y="479" width="4" height="1" fill="#fff"/>
<rect x="396" y="483" width="8" height="1" fill="#fff"/>
<rect x="400" y="487" width="4" height="1" fill="#fff"/>
<rect x="400" y="491" width="4" height="1" fill="#fff"/>
<rect x="400" y="495" width="4" height="1" fill="#fff"/>
<rect x="400" y="499" width="4" height="1" fill="#fff"/>
<rect x="396" y="503" width="8" height="1" fill="#fff"/>
<rect x="400" y="507" width="4" height="1" fill="#fff"/>
<rect x="400" y="511" width="4" height="1" fill="#fff"/>
<rect x="400" y="515" width="4" height="1" fill="#fff"/>
<rect x="400" y="519" width="4" height="1" fill="#fff"/>
<rect x="396" y="523" width="8" height="1" fill="#fff"/>
<rect x="400" y="527" width="4" height="1" fill="#fff"/>
<rect x="400" y="531" width="4" height="1" fill="#fff"/>
<rect x="400" y="535" width="4" height="1" fill="#fff"/>
<rect x="400" y="539" width="4" height="1" fill="#fff"/>
<rect x="396" y="543" width="8" height="1" fill="#fff"/>
<rect x="400" y="547" width="4" height="1" fill="#fff"/>
<rect x="400" y="551" width="4" height="1" fill="#fff"/>
<rect x="400" y="555" width="4" height="1" fill="#fff"/>
<rect x="400" y="559" width="4" height="1" fill="#fff"/>
<rect x="396" y="563" width="8" height="1" fill="#fff"/>
<rect x="404" y="564" width="1" height="8" fill="#fff"/>
<rect x="407" y="564" width="1" height="4" fill="#fff"/>
<rect x="410" y="564" width="1" height="4" fill="#fff"/>
<rect x="413" y="564" width="1" height="4" fill="#fff"/>
<rect x="416" y="564" width="1" height="4" fill="#fff"/>
<rect x="422" y="564" width="1" height="8" fill="#fff"/>
<rect x="425" y="564" width="1" height="4" fill="#fff"/>
<rect x="428" y="564" width="1" height="4" fill="#fff"/>
<rect x="431" y="564" width="1" height="4" fill="#fff"/>
<rect x="434" y="564" width="1" height="4" fill="#fff"/>
<rect x="440" y="564" width="1" height="8" fill="#fff"/>
<rect x="443" y="564" width="1" height="4" fill="#fff"/>
<rect x="446" y="564" width="1" height="4" fill="#fff"/>
<rect x="449" y="564" width="1" height="4" fill="#fff"/>
<rect x="452" y="564" width="1" height="4" fill="#fff"/>
<rect x="458" y="564" width="1" height="8" fill="#fff"/>
<rect x="461" y="564" width="1" height="4" fill="#fff"/>
<rect x="464" y="564" width="1" height="4" fill="#fff"/>
<rect x="467" y="564" width="1" height="4" fill="#fff"/>
<rect x="470" y="564" width="1" height="4" fill="#fff"/>
<rect x="476" y="564" width="1" height="8" fill="#fff"/>
<rect x="479" y="564" width="1" height="4" fill="#fff"/>
<rect x="482" y="564" width="1" height="4" fill="#fff"/>
<rect x="485" y="564" width="1" height="4" fill="#fff"/>
<rect x="488" y="564" width="1" height="4" fill="#fff"/>
<rect x="494" y="564" width="1" height="8" fill="#fff"/>
<rect x="497" y="564" width="1" height="4" fill="#fff"/>
<rect x="500" y="564" width="1" height="4" fill="#fff"/>
<rect x="503" y="564" width="1" height="4" fill="#fff"/>
<rect x="506" y="564" width="1" height="4" fill="#fff"/>
<rect x="512" y="564" width="1" height="8" fill="#fff"/>
<rect x="515" y="564" width="1" height="4" fill="#fff"/>
<rect x="518" y="564" width="1" height="4" fill="#fff"/>
<rect x="521" y="564" width="1" height="4" fill="#fff"/>
<rect x="524" y="564" width="1" height="4" fill="#fff"/>
<rect x="530" y="564" width="1" height="8" fill="#fff"/>
<rect x="533" y="564" width="1" height="4" fill="#fff"/>
<rect x="536" y="564" width="1" height="4" fill="#fff"/>
<rect x="539" y="564" width="1" height="4" fill="#fff"/>
<rect x="542" y="564" width="1" height="4" fill="#fff"/>
<rect x="548" y="564" width="1" height="8" fill="#fff"/>
<rect x="551" y="564" width="1" height="4" fill="#fff"/>
<rect x="554" y="564" width="1" height="4" fill="#fff"/>
<rect x="557" y="564" width="1" height="4" fill="#fff"/>
<rect x="560" y="564" width="1" height="4" fill="#fff"/>
<rect x="566" y="564" width="1" height="8" fill="#fff"/>
<rect x="569" y="564" width="1" height="4" fill="#fff"/>
<rect x="572" y="564" width="1" height="4" fill="#fff"/>
<rect x="575" y="564" width="1" height="4" fill="#fff"/>
<rect x="578" y="564" width="1" height="4" fill="#fff"/>
<rect x="584" y="564" width="1" height="8" fill="#fff"/>
<polyline points="403.5,500.5 405.5,499.5 407.5,502.5 409.5,500.5 411.5,503.5 413.5,505.5 414.5,518.5 415.5,532.5 417.5,536.5 419.5,533.5 421.5,534.5 423.5,541.5 426.5,542.5 430.5,545.5 432.5,543.5 434.5,545.5 436.5,544.5 438.5,545.5 440.5,546.5 442.5,543.5 444.5,545.5 446.5,546.5 448.5,547.5 450.5,543.5 452.5,545.5 454.5,546.5 456.5,545.5 458.5,547.5 460.5,543.5 462.5,545.5 464.5,546.5 466.5,545.5 468.5,545.5 470.5,543.5 472.5,547.5 474.5,545.5 476.5,546.5 478.5,546.5 480.5,547.5 482.5,547.5 484.5,546.5 486.5,543.5 488.5,544.5 490.5,544.5 492.5,544.5 494.5,546.5 496.5,546.5 498.5,546.5 500.5,546.5 502.5,544.5 504.5,544.5 506.5,545.5 508.5,545.5 510.5,544.5 512.5,547.5 514.5,546.5 516.5,545.5 518.5,547.5" fill="none" stroke="#ff0000" stroke-width="1"/>
<polyline points="520.5,503.5 522.5,501.5 525.5,499.5 527.5,494.5 529.5,499.5 531.5,502.5 533.5,500.5 537.5,499.5 541.5,500.5 543.5,501.5 545.5,495.5 547.5,498.5 551.5,500.5 553.5,501.5 555.5,501.5 557.5,500.5 559.5,500.5 561.5,498.5 563.5,503.5 565.5,498.5 567.5,500.5 569.5,501.5 571.5,498.5 573.5,498.5 575.5,502.5 577.5,498.5 579.5,502.5 581.5,503.5 583.5,501.5 585.5,499.5" fill="none" stroke="#ff0000" stroke-width="1"/>
<polyline points="403.5,563.5 410.5,563.5 410.5,538.5 411.5,513.5 412.5,512.5 416.5,514.5 421.5,513.5 421.5,497.5 424.5,496.5 426.5,498.5 427.5,493.5 429.5,488.5 434.5,487.5 444.5,488.5 449.5,486.5 452.5,490.5 459.5,490.5 464.5,489.5 469.5,490.5 472.5,488.5 476.5,487.5 484.5,487.5 494.5,486.5 504.5,487.5 509.5,486.5 514.5,487.5 518.5,487.5" fill="none" stroke="#98f5ff" stroke-width="1"/>
<polyline points="520.5,563.5 585.5,563.5" fill="none" stroke="#98f5ff" stroke-width="1"/>
<polyline points="410.5,563.5 518.5,563.5" fill="none" stroke="#00ff00" stroke-width="1"/>
<polyline points="520.5,563.5 578.5,563.5 580.5,562.5 582.5,563.5 585.5,563.5" fill="none" stroke="#00ff00" stroke-width="1"/>
<polyline points="403.5,534.5 585.5,534.5" fill="none" stroke="#ffff00" stroke-width="1"/>
<rect x="519" y="463" width="1" height="101" fill="#fff"/>
<text x="393" y="467" font-size="10" fill="#fff" text-anchor="end" textLength="14.2" lengthAdjust="spacingAndGlyphs">300</text>
<text x="393" y="567" font-size="10" fill="#fff" text-anchor="end" textLength="4.7" lengthAdjust="spacingAndGlyphs">0</text>
<text x="405" y="581" font-size="10" fill="#fff" text-anchor="middle">-5:45</text>
<rect x="589" y="453" width="51" height="17" fill="#ff0000"/>
<polygon points="589,453 640,453 638,455 591,455 591,468 589,470" fill="#ff8080"/>
<polygon points="640,453 640,470 589,470 591,468 638,468 638,455" fill="#8b0000"/>
<svg x="591" y="455" width="47" height="13" overflow="hidden">
<text x="1" y="9" font-size="11" fill="#000" textLength="31.6" lengthAdjust="spacingAndGlyphs" font-family="Liberation Mono" stroke="#000" stroke-width="0.25">HP_Htr</text>
</svg>
<rect x="640" y="453" width="52" height="17" fill="#5f9ea0"/>
<rect x="640" y="453" width="52" height="1" fill="#b0e0e6"/>
<rect x="640" y="453" width="1" height="17" fill="#b0e0e6"/>
<rect x="641" y="454" width="50" height="1" fill="#2f4f4f"/>
<rect x="641" y="454" width="1" height="15" fill="#2f4f4f"/>
<rect x="641" y="468" width="50" height="1" fill="#b0e0e6"/>
<rect x="690" y="454" width="1" height="15" fill="#b0e0e6"/>
<rect x="640" y="469" width="52" height="1" fill="#2f4f4f"/>
<rect x="691" y="453" width="1" height="17" fill="#2f4f4f"/>
<svg x="642" y="455" width="48" height="13" overflow="hidden">
<text x="1" y="9" font-size="10" fill="#fff" textLength="27.5" lengthAdjust="spacingAndGlyphs">53.981</text>
</svg>
<rect x="589" y="470" width="51" height="17" fill="#00ff00"/>
<polygon points="589,470 640,470 638,472 591,472 591,485 589,487" fill="#80ff80"/>
<polygon points="640,470 640,487 589,487 591,485 638,485 638,472" fill="#008b00"/>
<svg x="591" y="472" width="47" height="13" overflow="hidden">
<text x="1" y="9" font-size="11" fill="#000" textLength="31.6" lengthAdjust="spacingAndGlyphs" font-family="Liberation Mono" stroke="#000" stroke-width="0.25">LP_Htr</text>
</svg>
<rect x="640" y="470" width="52" height="17" fill="#5f9ea0"/>
<rect x="640" y="470" width="52" height="1" fill="#b0e0e6"/>
<rect x="640" y="470" width="1" height="17" fill="#b0e0e6"/>
<rect x="641" y="471" width="50" height="1" fill="#2f4f4f"/>
<rect x="641" y="471" width="1" height="15" fill="#2f4f4f"/>
<rect x="641" y="485" width="50" height="1" fill="#b0e0e6"/>
<rect x="690" y="471" width="1" height="15" fill="#b0e0e6"/>
<rect x="640" y="486" width="52" height="1" fill="#2f4f4f"/>
<rect x="691" y="470" width="1" height="17" fill="#2f4f4f"/>
<svg x="642" y="472" width="48" height="13" overflow="hidden">
<text x="1" y="9" font-size="10" fill="#fff" textLength="17.5" lengthAdjust="spacingAndGlyphs">0.00</text>
</svg>
<rect x="589" y="487" width="51" height="17" fill="#ffff00"/>
<polygon points="589,487 640,487 638,489 591,489 591,502 589,504" fill="#ffff80"/>
<polygon points="640,487 640,504 589,504 591,502 638,502 638,489" fill="#8b8b00"/>
<svg x="591" y="489" width="47" height="13" overflow="hidden">
<text x="1" y="9" font-size="11" fill="#000" textLength="15.5" lengthAdjust="spacingAndGlyphs" font-family="Liberation Mono" stroke="#000" stroke-width="0.25">Fan</text>
</svg>
<rect x="640" y="487" width="52" height="17" fill="#5f9ea0"/>
<rect x="640" y="487" width="52" height="1" fill="#b0e0e6"/>
<rect x="640" y="487" width="1" height="17" fill="#b0e0e6"/>
<rect x="641" y="488" width="50" height="1" fill="#2f4f4f"/>
<rect x="641" y="488" width="1" height="15" fill="#2f4f4f"/>
<rect x="641" y="502" width="50" height="1" fill="#b0e0e6"/>
<rect x="690" y="488" width="1" height="15" fill="#b0e0e6"/>
<rect x="640" y="503" width="52" height="1" fill="#2f4f4f"/>
<rect x="691" y="487" width="1" height="17" fill="#2f4f4f"/>
<svg x="642" y="489" width="48" height="13" overflow="hidden">
<text x="1" y="9" font-size="10" fill="#fff" textLength="22.5" lengthAdjust="spacingAndGlyphs">86.69</text>
</svg>
<rect x="589" y="504" width="51" height="17" fill="#98f5ff"/>
<polygon points="589,504 640,504 638,506 591,506 591,519 589,521" fill="#d0faff"/>
<polygon points="640,504 640,521 589,521 591,519 638,519 638,506" fill="#53868b"/>
<svg x="591" y="506" width="47" height="13" overflow="hidden">
<text x="1" y="9" font-size="11" fill="#000" textLength="20.9" lengthAdjust="spacingAndGlyphs" font-family="Liberation Mono" stroke="#000" stroke-width="0.25">Beam</text>
</svg>
<rect x="640" y="504" width="52" height="17" fill="#5f9ea0"/>
<rect x="640" y="504" width="52" height="1" fill="#b0e0e6"/>
<rect x="640" y="504" width="1" height="17" fill="#b0e0e6"/>
<rect x="641" y="505" width="50" height="1" fill="#2f4f4f"/>
<rect x="641" y="505" width="1" height="15" fill="#2f4f4f"/>
<rect x="641" y="519" width="50" height="1" fill="#b0e0e6"/>
<rect x="690" y="505" width="1" height="15" fill="#b0e0e6"/>
<rect x="640" y="520" width="52" height="1" fill="#2f4f4f"/>
<rect x="691" y="504" width="1" height="17" fill="#2f4f4f"/>
<svg x="642" y="506" width="48" height="13" overflow="hidden">
<text x="1" y="9" font-size="10" fill="#fff" textLength="32.5" lengthAdjust="spacingAndGlyphs">228.993</text>
</svg>
<rect x="341" y="618" width="353" height="244" fill="#5f9ea0"/>
<polygon points="341,618 694,618 692,620 343,620 343,860 341,862" fill="#2f4f4f"/>
<polygon points="694,618 694,862 341,862 343,860 692,860 692,620" fill="#b0e0e6"/>
<text x="517.0" y="634" font-size="12" font-weight="bold" fill="#000" text-anchor="middle" textLength="56.0" lengthAdjust="spacingAndGlyphs">hydrogen</text>
<text x="365" y="744" font-size="12" font-weight="bold" fill="#fff">PS</text>
<rect x="612" y="702" width="42" height="15" fill="#ff0000"/>
<polygon points="612,702 654,702 652,704 614,704 614,715 612,717" fill="#ff8080"/>
<polygon points="654,702 654,717 612,717 614,715 652,715 652,704" fill="#8b0000"/>
<svg x="614" y="704" width="38" height="11" overflow="hidden">
<text x="18" y="9" font-size="9" font-weight="bold" fill="#000" textLength="11.4" lengthAdjust="spacingAndGlyphs">VP</text>
</svg>
<rect x="612" y="717" width="42" height="15" fill="#ffa500"/>
<polygon points="612,717 654,717 652,719 614,719 614,730 612,732" fill="#ffd280"/>
<polygon points="654,717 654,732 612,732 614,730 652,730 652,719" fill="#8b5a00"/>
<svg x="614" y="719" width="38" height="11" overflow="hidden">
<text x="18" y="9" font-size="9" font-weight="bold" fill="#000" textLength="13.8" lengthAdjust="spacingAndGlyphs">-1K</text>
</svg>
<rect x="612" y="732" width="42" height="15" fill="#ffff00"/>
<polygon points="612,732 654,732 652,734 614,734 614,745 612,747" fill="#ffff80"/>
<polygon points="654,732 654,747 612,747 614,745 652,745 652,734" fill="#8b8b00"/>
<svg x="614" y="734" width="38" height="11" overflow="hidden">
<text x="18" y="9" font-size="9" font-weight="bold" fill="#000" textLength="13.8" lengthAdjust="spacingAndGlyphs">-2K</text>
</svg>
<rect x="612" y="747" width="42" height="15" fill="#98f5ff"/>
<polygon points="612,747 654,747 652,749 614,749 614,760 612,762" fill="#d0faff"/>
<polygon points="654,747 654,762 612,762 614,760 652,760 652,749" fill="#53868b"/>
<svg x="614" y="749" width="38" height="11" overflow="hidden">
<text x="18" y="9" font-size="9" font-weight="bold" fill="#000" textLength="27.1" lengthAdjust="spacingAndGlyphs">Freeze</text>
</svg>
<rect x="612" y="762" width="42" height="15" fill="#00ff00"/>
<polygon points="612,762 654,762 652,764 614,764 614,775 612,777" fill="#80ff80"/>
<polygon points="654,762 654,777 612,777 614,775 652,775 652,764" fill="#008b00"/>
<svg x="614" y="764" width="38" height="11" overflow="hidden">
<text x="18" y="9" font-size="9" font-weight="bold" fill="#000" textLength="17.6" lengthAdjust="spacingAndGlyphs">data</text>
</svg>
<rect x="0" y="0" width="363" height="670" fill="#c0c0c0"/>
<rect x="1" y="1" width="361" height="1" fill="#fff"/>
<rect x="1" y="1" width="1" height="668" fill="#fff"/>
<rect x="362" y="0" width="1" height="670" fill="#000"/>
<rect x="0" y="669" width="363" height="1" fill="#000"/>
<rect x="361" y="1" width="1" height="668" fill="#a8a8a8"/>
<rect x="1" y="668" width="361" height="1" fill="#a8a8a8"/>
<rect x="5" y="5" width="353" height="17" fill="#808080"/>
<rect x="8" y="7" width="16" height="14" fill="#c0c0c0"/>
<rect x="8" y="7" width="16" height="1" fill="#fff"/>
<rect x="8" y="7" width="1" height="14" fill="#fff"/>
<rect x="23" y="7" width="1" height="14" fill="#000"/>
<rect x="8" y="20" width="16" height="1" fill="#000"/>
<rect x="22" y="8" width="1" height="12" fill="#888"/>
<rect x="9" y="19" width="14" height="1" fill="#888"/>
<rect x="12" y="13" width="9" height="3" fill="#000"/>
<rect x="322" y="7" width="16" height="14" fill="#c0c0c0"/>
<rect x="322" y="7" width="16" height="1" fill="#fff"/>
<rect x="322" y="7" width="1" height="14" fill="#fff"/>
<rect x="337" y="7" width="1" height="14" fill="#000"/>
<rect x="322" y="20" width="16" height="1" fill="#000"/>
<rect x="336" y="8" width="1" height="12" fill="#888"/>
<rect x="323" y="19" width="14" height="1" fill="#888"/>
<rect x="327" y="17" width="7" height="2" fill="#000"/>
<rect x="340" y="7" width="16" height="14" fill="#c0c0c0"/>
<rect x="340" y="7" width="16" height="1" fill="#fff"/>
<rect x="340" y="7" width="1" height="14" fill="#fff"/>
<rect x="355" y="7" width="1" height="14" fill="#000"/>
<rect x="340" y="20" width="16" height="1" fill="#000"/>
<rect x="354" y="8" width="1" height="12" fill="#888"/>
<rect x="341" y="19" width="14" height="1" fill="#888"/>
<rect x="344" y="10" width="9" height="2" fill="#000"/>
<rect x="344" y="10" width="1" height="9" fill="#000"/>
<rect x="352" y="10" width="1" height="9" fill="#000"/>
<rect x="344" y="18" width="9" height="1" fill="#000"/>
<text x="26.5" y="18" font-size="12" font-weight="bold" fill="#000">chart_loopLOOP1</text>
<rect x="5" y="22" width="353" height="643" fill="#5f9ea0"/>
<rect x="5" y="22" width="353" height="30" fill="#5f9ea0"/>
<polygon points="5,22 358,22 356,24 7,24 7,50 5,52" fill="#b0e0e6"/>
<polygon points="358,22 358,52 5,52 7,50 356,50 356,24" fill="#2f4f4f"/>
<text x="14.5" y="41" font-size="12" font-weight="bold" fill="#fff" textLength="20" lengthAdjust="spacingAndGlyphs">File</text>
<rect x="15" y="42" width="7" height="2" fill="#fff"/>
<text x="50.5" y="41" font-size="12" font-weight="bold" fill="#fff" textLength="45.5" lengthAdjust="spacingAndGlyphs">Options</text>
<rect x="51" y="42" width="11" height="2" fill="#fff"/>
<text x="321.5" y="41" font-size="12" font-weight="bold" fill="#fff" textLength="26" lengthAdjust="spacingAndGlyphs">Help</text>
<rect x="322" y="42" width="9" height="2" fill="#fff"/>
<rect x="5" y="56" width="353" height="231" fill="#5f9ea0"/>
<rect x="5" y="56" width="353" height="1" fill="#2f4f4f"/>
<rect x="5" y="56" width="1" height="231" fill="#2f4f4f"/>
<rect x="6" y="57" width="351" height="1" fill="#b0e0e6"/>
<rect x="6" y="57" width="1" height="229" fill="#b0e0e6"/>
<rect x="6" y="285" width="351" height="1" fill="#2f4f4f"/>
<rect x="356" y="57" width="1" height="229" fill="#2f4f4f"/>
<rect x="5" y="286" width="353" height="1" fill="#b0e0e6"/>
<rect x="357" y="56" width="1" height="231" fill="#b0e0e6"/>
<text x="181.0" y="72" font-size="12" font-weight="bold" fill="#fff" text-anchor="middle" textLength="128.9" lengthAdjust="spacingAndGlyphs">Temperatures_LOOP1</text>
<text x="10" y="175" font-size="12" font-weight="bold" fill="#fff">K</text>
<rect x="67" y="114" width="181" height="101" fill="#000"/>
<rect x="67" y="114" width="1" height="101" fill="#a3a3a3"/>
<rect x="85" y="114" width="1" height="101" fill="#a3a3a3"/>
<rect x="103" y="114" width="1" height="101" fill="#a3a3a3"/>
<rect x="121" y="114" width="1" height="101" fill="#a3a3a3"/>
<rect x="139" y="114" width="1" height="101" fill="#a3a3a3"/>
<rect x="157" y="114" width="1" height="101" fill="#a3a3a3"/>
<rect x="175" y="114" width="1" height="101" fill="#a3a3a3"/>
<rect x="193" y="114" width="1" height="101" fill="#a3a3a3"/>
<rect x="211" y="114" width="1" height="101" fill="#a3a3a3"/>
<rect x="229" y="114" width="1" height="101" fill="#a3a3a3"/>
<rect x="247" y="114" width="1" height="101" fill="#a3a3a3"/>
<rect x="67" y="114" width="181" height="1" fill="#a3a3a3"/>
<rect x="67" y="134" width="181" height="1" fill="#a3a3a3"/>
<rect x="67" y="154" width="181" height="1" fill="#a3a3a3"/>
<rect x="67" y="174" width="181" height="1" fill="#a3a3a3"/>
<rect x="67" y="194" width="181" height="1" fill="#a3a3a3"/>
<rect x="67" y="214" width="181" height="1" fill="#a3a3a3"/>
<rect x="59" y="114" width="8" height="1" fill="#fff"/>
<rect x="63" y="118" width="4" height="1" fill="#fff"/>
<rect x="63" y="122" width="4" height="1" fill="#fff"/>
<rect x="63" y="126" width="4" height="1" fill="#fff"/>
<rect x="63" y="130" width="4" height="1" fill="#fff"/>
<rect x="59" y="134" width="8" height="1" fill="#fff"/>
<rect x="63" y="138" width="4" height="1" fill="#fff"/>
<rect x="63" y="142" width="4" height="1" fill="#fff"/>
<rect x="63" y="146" width="4" height="1" fill="#fff"/>
<rect x="63" y="150" width="4" height="1" fill="#fff"/>
<rect x="59" y="154" width="8" height="1" fill="#fff"/>
<rect x="63" y="158" width="4" height="1" fill="#fff"/>
<rect x="63" y="162" width="4" height="1" fill="#fff"/>
<rect x="63" y="166" width="4" height="1" fill="#fff"/>
<rect x="63" y="170" width="4" height="1" fill="#fff"/>
<rect x="59" y="174" width="8" height="1" fill="#fff"/>
<rect x="63" y="178" width="4" height="1" fill="#fff"/>
<rect x="63" y="182" width="4" height="1" fill="#fff"/>
<rect x="63" y="186" width="4" height="1" fill="#fff"/>
<rect x="63" y="190" width="4" height="1" fill="#fff"/>
<rect x="59" y="194" width="8" height="1" fill="#fff"/>
<rect x="63" y="198" width="4" height="1" fill="#fff"/>
<rect x="63" y="202" width="4" height="1" fill="#fff"/>
<rect x="63" y="206" width="4" height="1" fill="#fff"/>
<rect x="63" y="210" width="4" height="1" fill="#fff"/>
<rect x="59" y="214" width="8" height="1" fill="#fff"/>
<rect x="67" y="215" width="1" height="8" fill="#fff"/>
<rect x="70" y="215" width="1" height="4" fill="#fff"/>
<rect x="73" y="215" width="1" height="4" fill="#fff"/>
<rect x="76" y="215" width="1" height="4" fill="#fff"/>
<rect x="79" y="215" width="1" height="4" fill="#fff"/>
<rect x="85" y="215" width="1" height="8" fill="#fff"/>
<rect x="88" y="215" width="1" height="4" fill="#fff"/>
<rect x="91" y="215" width="1" height="4" fill="#fff"/>
<rect x="94" y="215" width="1" height="4" fill="#fff"/>
<rect x="97" y="215" width="1" height="4" fill="#fff"/>
<rect x="103" y="215" width="1" height="8" fill="#fff"/>
<rect x="106" y="215" width="1" height="4" fill="#fff"/>
<rect x="109" y="215" width="1" height="4" fill="#fff"/>
<rect x="112" y="215" width="1" height="4" fill="#fff"/>
<rect x="115" y="215" width="1" height="4" fill="#fff"/>
<rect x="121" y="215" width="1" height="8" fill="#fff"/>
<rect x="124" y="215" width="1" height="4" fill="#fff"/>
<rect x="127" y="215" width="1" height="4" fill="#fff"/>
<rect x="130" y="215" width="1" height="4" fill="#fff"/>
<rect x="133" y="215" width="1" height="4" fill="#fff"/>
<rect x="139" y="215" width="1" height="8" fill="#fff"/>
<rect x="142" y="215" width="1" height="4" fill="#fff"/>
<rect x="145" y="215" width="1" height="4" fill="#fff"/>
<rect x="148" y="215" width="1" height="4" fill="#fff"/>
<rect x="151" y="215" width="1" height="4" fill="#fff"/>
<rect x="157" y="215" width="1" height="8" fill="#fff"/>
<rect x="160" y="215" width="1" height="4" fill="#fff"/>
<rect x="163" y="215" width="1" height="4" fill="#fff"/>
<rect x="166" y="215" width="1" height="4" fill="#fff"/>
<rect x="169" y="215" width="1" height="4" fill="#fff"/>
<rect x="175" y="215" width="1" height="8" fill="#fff"/>
<rect x="178" y="215" width="1" height="4" fill="#fff"/>
<rect x="181" y="215" width="1" height="4" fill="#fff"/>
<rect x="184" y="215" width="1" height="4" fill="#fff"/>
<rect x="187" y="215" width="1" height="4" fill="#fff"/>
<rect x="193" y="215" width="1" height="8" fill="#fff"/>
<rect x="196" y="215" width="1" height="4" fill="#fff"/>
<rect x="199" y="215" width="1" height="4" fill="#fff"/>
<rect x="202" y="215" width="1" height="4" fill="#fff"/>
<rect x="205" y="215" width="1" height="4" fill="#fff"/>
<rect x="211" y="215" width="1" height="8" fill="#fff"/>
<rect x="214" y="215" width="1" height="4" fill="#fff"/>
<rect x="217" y="215" width="1" height="4" fill="#fff"/>
<rect x="220" y="215" width="1" height="4" fill="#fff"/>
<rect x="223" y="215" width="1" height="4" fill="#fff"/>
<rect x="229" y="215" width="1" height="8" fill="#fff"/>
<rect x="232" y="215" width="1" height="4" fill="#fff"/>
<rect x="235" y="215" width="1" height="4" fill="#fff"/>
<rect x="238" y="215" width="1" height="4" fill="#fff"/>
<rect x="241" y="215" width="1" height="4" fill="#fff"/>
<rect x="247" y="215" width="1" height="8" fill="#fff"/>
<polyline points="66.5,194.5 73.5,194.5 76.5,182.5 77.5,180.5 79.5,184.5 82.5,188.5 87.5,191.5 92.5,193.5 102.5,194.5 104.5,195.5 107.5,193.5 110.5,195.5 113.5,195.5 116.5,193.5 119.5,193.5 122.5,194.5 125.5,194.5 128.5,193.5 131.5,195.5 134.5,194.5 137.5,193.5 140.5,194.5 143.5,194.5 146.5,195.5 149.5,194.5 152.5,194.5 155.5,194.5 158.5,193.5 161.5,194.5 164.5,194.5 167.5,194.5 170.5,193.5 173.5,195.5 176.5,195.5 179.5,194.5" fill="none" stroke="#ff0000" stroke-width="1"/>
<polyline points="183.5,195.5 248.5,195.5" fill="none" stroke="#ff0000" stroke-width="1"/>
<polyline points="66.5,195.5 73.5,195.5 76.5,182.5 77.5,181.5 79.5,185.5 83.5,190.5 89.5,193.5 97.5,194.5 100.5,196.5 103.5,195.5 106.5,195.5 109.5,194.5 112.5,195.5 115.5,195.5 118.5,195.5 121.5,196.5 124.5,195.5 127.5,195.5 130.5,196.5 133.5,195.5 136.5,195.5 139.5,196.5 142.5,195.5 145.5,194.5 148.5,195.5 151.5,194.5 154.5,195.5 157.5,195.5 160.5,194.5 163.5,195.5 166.5,196.5 169.5,195.5 172.5,195.5 175.5,195.5 178.5,195.5 181.5,195.5" fill="none" stroke="#00ff00" stroke-width="1"/>
<polyline points="183.5,195.5 248.5,195.5" fill="none" stroke="#00ff00" stroke-width="1"/>
<polyline points="66.5,177.5 73.5,177.5 75.5,166.5 77.5,161.5 80.5,166.5 84.5,171.5 87.5,171.5 89.5,172.5 92.5,172.5 95.5,172.5 98.5,172.5 101.5,172.5 104.5,172.5 107.5,172.5 110.5,172.5 113.5,172.5 116.5,172.5 119.5,172.5 122.5,172.5 125.5,172.5 128.5,172.5 131.5,172.5 134.5,171.5 137.5,172.5 140.5,172.5 143.5,172.5 146.5,172.5 149.5,173.5 152.5,172.5 155.5,172.5 158.5,171.5 161.5,172.5 164.5,172.5 167.5,172.5 170.5,172.5 173.5,172.5 176.5,173.5 179.5,172.5" fill="none" stroke="#ffff00" stroke-width="1"/>
<polyline points="183.5,177.5 248.5,177.5" fill="none" stroke="#ffff00" stroke-width="1"/>
<polyline points="66.5,195.5 73.5,195.5 75.5,176.5 77.5,164.5 79.5,167.5 82.5,180.5 87.5,190.5 97.5,194.5 100.5,195.5 104.5,194.5 108.5,195.5 112.5,195.5 116.5,194.5 120.5,195.5 124.5,195.5 128.5,195.5 132.5,195.5 136.5,195.5 140.5,195.5 144.5,195.5 148.5,195.5 152.5,196.5 156.5,195.5 160.5,196.5 164.5,195.5 168.5,196.5 172.5,196.5 176.5,195.5 180.5,195.5" fill="none" stroke="#98f5ff" stroke-width="1"/>
<polyline points="183.5,195.5 248.5,195.5" fill="none" stroke="#98f5ff" stroke-width="1"/>
<polyline points="66.5,191.5 73.5,191.5 76.5,174.5 77.5,171.5 81.5,177.5 85.5,180.5 87.5,181.5 90.5,181.5 93.5,180.5 96.5,181.5 99.5,181.5 102.5,181.5 105.5,181.5 108.5,181.5 111.5,181.5 114.5,181.5 117.5,181.5 120.5,181.5 123.5,181.5 126.5,181.5 129.5,181.5 132.5,181.5 135.5,182.5 138.5,181.5 141.5,181.5 144.5,181.5 147.5,182.5 150.5,181.5 153.5,181.5 156.5,181.5 159.5,181.5 162.5,181.5 165.5,181.5 168.5,181.5 171.5,181.5 174.5,181.5 177.5,180.5 180.5,182.5" fill="none" stroke="#ee82ee" stroke-width="1"/>
<polyline points="66.5,167.5 73.5,167.5 75.5,149.5 77.5,143.5 80.5,148.5 84.5,155.5 87.5,151.5 90.5,154.5 92.5,154.5 95.5,155.5 98.5,155.5 101.5,154.5 104.5,155.5 107.5,154.5 110.5,155.5 113.5,154.5 116.5,155.5 119.5,154.5 122.5,154.5 125.5,154.5 128.5,154.5 131.5,154.5 134.5,154.5 137.5,154.5 140.5,154.5 143.5,154.5 146.5,154.5 149.5,154.5 152.5,154.5 155.5,154.5 158.5,153.5 161.5,154.5 164.5,154.5 167.5,154.5 170.5,153.5 173.5,154.5 176.5,154.5 179.5,154.5" fill="none" stroke="#ffa500" stroke-width="1"/>
<polyline points="183.5,167.5 248.5,167.5" fill="none" stroke="#ffa500" stroke-width="1"/>
<polyline points="66.5,191.5 73.5,191.5 76.5,172.5 77.5,169.5 80.5,175.5 85.5,179.5 87.5,178.5 90.5,180.5 93.5,179.5 96.5,179.5 99.5,179.5 102.5,179.5 105.5,179.5 108.5,179.5 111.5,178.5 114.5,179.5 117.5,179.5 120.5,179.5 123.5,179.5 126.5,179.5 129.5,180.5 132.5,179.5 135.5,180.5 138.5,179.5 141.5,178.5 144.5,179.5 147.5,179.5 150.5,179.5 153.5,179.5 156.5,180.5 159.5,179.5 162.5,178.5 165.5,179.5 168.5,179.5 171.5,179.5 174.5,179.5 177.5,179.5 180.5,178.5" fill="none" stroke="#ff1493" stroke-width="1"/>
<polyline points="183.5,191.5 248.5,191.5" fill="none" stroke="#ff1493" stroke-width="1"/>
<polyline points="66.5,195.5 73.5,195.5 75.5,169.5 77.5,154.5 79.5,159.5 82.5,167.5 181.5,167.5" fill="none" stroke="#7fffd4" stroke-width="1"/>
<polyline points="66.5,181.5 82.5,181.5 83.5,174.5 181.5,174.5" fill="none" stroke="#006400" stroke-width="1"/>
<polyline points="183.5,181.5 248.5,181.5" fill="none" stroke="#006400" stroke-width="1"/>
<polyline points="66.5,141.5 88.5,141.5 89.5,154.5 105.5,154.5 106.5,161.5 181.5,161.5" fill="none" stroke="#a020f0" stroke-width="1"/>
<polyline points="183.5,141.5 199.5,141.5 201.5,147.5 216.5,147.5 218.5,141.5 248.5,141.5" fill="none" stroke="#a020f0" stroke-width="1"/>
<polyline points="66.5,114.5 248.5,114.5" fill="none" stroke="#0000ff" stroke-width="1"/>
<rect x="182" y="114" width="1" height="101" fill="#fff"/>
<text x="56" y="118" font-size="10" fill="#fff" text-anchor="end" textLength="11.8" lengthAdjust="spacingAndGlyphs">7.5</text>
<text x="56" y="218" font-size="10" fill="#fff" text-anchor="end" textLength="4.7" lengthAdjust="spacingAndGlyphs">6</text>
<text x="68" y="232" font-size="10" fill="#fff" text-anchor="middle">-5:45</text>
<rect x="252" y="78" width="52" height="17" fill="#ff0000"/>
<polygon points="252,78 304,78 302,80 254,80 254,93 252,95" fill="#ff8080"/>
<polygon points="304,78 304,95 252,95 254,93 302,93 302,80" fill="#8b0000"/>
<svg x="254" y="80" width="48" height="13" overflow="hidden">
<text x="1" y="9" font-size="11" fill="#000" textLength="20.9" lengthAdjust="spacingAndGlyphs" font-family="Liberation Mono" stroke="#000" stroke-width="0.25">CT97</text>
</svg>
<rect x="304" y="78" width="52" height="17" fill="#5f9ea0"/>
<rect x="304" y="78" width="52" height="1" fill="#b0e0e6"/>
<rect x="304" y="78" width="1" height="17" fill="#b0e0e6"/>
<rect x="305" y="79" width="50" height="1" fill="#2f4f4f"/>
<rect x="305" y="79" width="1" height="15" fill="#2f4f4f"/>
<rect x="305" y="93" width="50" height="1" fill="#b0e0e6"/>
<rect x="354" y="79" width="1" height="15" fill="#b0e0e6"/>
<rect x="304" y="94" width="52" height="1" fill="#2f4f4f"/>
<rect x="355" y="78" width="1" height="17" fill="#2f4f4f"/>
<svg x="306" y="80" width="48" height="13" overflow="hidden">
<text x="1" y="9" font-size="10" fill="#fff" textLength="22.5" lengthAdjust="spacingAndGlyphs">6.300</text>
</svg>
<rect x="252" y="95" width="52" height="17" fill="#00ff00"/>
<polygon points="252,95 304,95 302,97 254,97 254,110 252,112" fill="#80ff80"/>
<polygon points="304,95 304,112 252,112 254,110 302,110 302,97" fill="#008b00"/>
<svg x="254" y="97" width="48" height="13" overflow="hidden">
<text x="1" y="9" font-size="11" fill="#000" textLength="20.9" lengthAdjust="spacingAndGlyphs" font-family="Liberation Mono" stroke="#000" stroke-width="0.25">CT96</text>
</svg>
<rect x="304" y="95" width="52" height="17" fill="#5f9ea0"/>
<rect x="304" y="95" width="52" height="1" fill="#b0e0e6"/>
<rect x="304" y="95" width="1" height="17" fill="#b0e0e6"/>
<rect x="305" y="96" width="50" height="1" fill="#2f4f4f"/>
<rect x="305" y="96" width="1" height="15" fill="#2f4f4f"/>
<rect x="305" y="110" width="50" height="1" fill="#b0e0e6"/>
<rect x="354" y="96" width="1" height="15" fill="#b0e0e6"/>
<rect x="304" y="111" width="52" height="1" fill="#2f4f4f"/>
<rect x="355" y="95" width="1" height="17" fill="#2f4f4f"/>
<svg x="306" y="97" width="48" height="13" overflow="hidden">
<text x="1" y="9" font-size="10" fill="#fff" textLength="22.5" lengthAdjust="spacingAndGlyphs">6.290</text>
</svg>
<rect x="252" y="112" width="52" height="17" fill="#ffff00"/>
<polygon points="252,112 304,112 302,114 254,114 254,127 252,129" fill="#ffff80"/>
<polygon points="304,112 304,129 252,129 254,127 302,127 302,114" fill="#8b8b00"/>
<svg x="254" y="114" width="48" height="13" overflow="hidden">
<text x="1" y="9" font-size="11" fill="#000" textLength="26.2" lengthAdjust="spacingAndGlyphs" font-family="Liberation Mono" stroke="#000" stroke-width="0.25">CT171</text>
</svg>
<rect x="304" y="112" width="52" height="17" fill="#5f9ea0"/>
<rect x="304" y="112" width="52" height="1" fill="#b0e0e6"/>
<rect x="304" y="112" width="1" height="17" fill="#b0e0e6"/>
<rect x="305" y="113" width="50" height="1" fill="#2f4f4f"/>
<rect x="305" y="113" width="1" height="15" fill="#2f4f4f"/>
<rect x="305" y="127" width="50" height="1" fill="#b0e0e6"/>
<rect x="354" y="113" width="1" height="15" fill="#b0e0e6"/>
<rect x="304" y="128" width="52" height="1" fill="#2f4f4f"/>
<rect x="355" y="112" width="1" height="17" fill="#2f4f4f"/>
<svg x="306" y="114" width="48" height="13" overflow="hidden">
<text x="1" y="9" font-size="10" fill="#fff" textLength="17.5" lengthAdjust="spacingAndGlyphs">6.64</text>
</svg>
<rect x="252" y="129" width="52" height="17" fill="#98f5ff"/>
<polygon points="252,129 304,129 302,131 254,131 254,144 252,146" fill="#d0faff"/>
<polygon points="304,129 304,146 252,146 254,144 302,144 302,131" fill="#53868b"/>
<svg x="254" y="131" width="48" height="13" overflow="hidden">
<text x="1" y="9" font-size="11" fill="#000" textLength="26.2" lengthAdjust="spacingAndGlyphs" font-family="Liberation Mono" stroke="#000" stroke-width="0.25">CT170</text>
</svg>
<rect x="304" y="129" width="52" height="17" fill="#5f9ea0"/>
<rect x="304" y="129" width="52" height="1" fill="#b0e0e6"/>
<rect x="304" y="129" width="1" height="17" fill="#b0e0e6"/>
<rect x="305" y="130" width="50" height="1" fill="#2f4f4f"/>
<rect x="305" y="130" width="1" height="15" fill="#2f4f4f"/>
<rect x="305" y="144" width="50" height="1" fill="#b0e0e6"/>
<rect x="354" y="130" width="1" height="15" fill="#b0e0e6"/>
<rect x="304" y="145" width="52" height="1" fill="#2f4f4f"/>
<rect x="355" y="129" width="1" height="17" fill="#2f4f4f"/>
<svg x="306" y="131" width="48" height="13" overflow="hidden">
<text x="1" y="9" font-size="10" fill="#fff" textLength="17.5" lengthAdjust="spacingAndGlyphs">6.30</text>
</svg>
<rect x="252" y="146" width="52" height="17" fill="#ee82ee"/>
<polygon points="252,146 304,146 302,148 254,148 254,161 252,163" fill="#f8c0f8"/>
<polygon points="304,146 304,163 252,163 254,161 302,161 302,148" fill="#8b478b"/>
<svg x="254" y="148" width="48" height="13" overflow="hidden">
<text x="1" y="9" font-size="11" fill="#000" textLength="26.2" lengthAdjust="spacingAndGlyphs" font-family="Liberation Mono" stroke="#000" stroke-width="0.25">CT169</text>
</svg>
<rect x="304" y="146" width="52" height="17" fill="#5f9ea0"/>
<rect x="304" y="146" width="52" height="1" fill="#b0e0e6"/>
<rect x="304" y="146" width="1" height="17" fill="#b0e0e6"/>
<rect x="305" y="147" width="50" height="1" fill="#2f4f4f"/>
<rect x="305" y="147" width="1" height="15" fill="#2f4f4f"/>
<rect x="305" y="161" width="50" height="1" fill="#b0e0e6"/>
<rect x="354" y="147" width="1" height="15" fill="#b0e0e6"/>
<rect x="304" y="162" width="52" height="1" fill="#2f4f4f"/>
<rect x="355" y="146" width="1" height="17" fill="#2f4f4f"/>
<svg x="306" y="148" width="48" height="13" overflow="hidden">
<text x="1" y="9" font-size="10" fill="#fff" textLength="17.5" lengthAdjust="spacingAndGlyphs">6.51</text>
</svg>
<rect x="252" y="163" width="52" height="17" fill="#ffa500"/>
<polygon points="252,163 304,163 302,165 254,165 254,178 252,180" fill="#ffd280"/>
<polygon points="304,163 304,180 252,180 254,178 302,178 302,165" fill="#8b5a00"/>
<svg x="254" y="165" width="48" height="13" overflow="hidden">
<text x="1" y="9" font-size="11" fill="#000" textLength="26.2" lengthAdjust="spacingAndGlyphs" font-family="Liberation Mono" stroke="#000" stroke-width="0.25">CT168</text>
</svg>
<rect x="304" y="163" width="52" height="17" fill="#5f9ea0"/>
<rect x="304" y="163" width="52" height="1" fill="#b0e0e6"/>
<rect x="304" y="163" width="1" height="17" fill="#b0e0e6"/>
<rect x="305" y="164" width="50" height="1" fill="#2f4f4f"/>
<rect x="305" y="164" width="1" height="15" fill="#2f4f4f"/>
<rect x="305" y="178" width="50" height="1" fill="#b0e0e6"/>
<rect x="354" y="164" width="1" height="15" fill="#b0e0e6"/>
<rect x="304" y="179" width="52" height="1" fill="#2f4f4f"/>
<rect x="355" y="163" width="1" height="17" fill="#2f4f4f"/>
<svg x="306" y="165" width="48" height="13" overflow="hidden">
<text x="1" y="9" font-size="10" fill="#fff" textLength="17.5" lengthAdjust="spacingAndGlyphs">6.90</text>
</svg>
<rect x="252" y="180" width="52" height="17" fill="#ff1493"/>
<polygon points="252,180 304,180 302,182 254,182 254,195 252,197" fill="#ff8ac8"/>
<polygon points="304,180 304,197 252,197 254,195 302,195 302,182" fill="#8b0a50"/>
<svg x="254" y="182" width="48" height="13" overflow="hidden">
<text x="1" y="9" font-size="11" fill="#000" textLength="20.9" lengthAdjust="spacingAndGlyphs" font-family="Liberation Mono" stroke="#000" stroke-width="0.25">CT93</text>
</svg>
<rect x="304" y="180" width="52" height="17" fill="#5f9ea0"/>
<rect x="304" y="180" width="52" height="1" fill="#b0e0e6"/>
<rect x="304" y="180" width="1" height="17" fill="#b0e0e6"/>
<rect x="305" y="181" width="50" height="1" fill="#2f4f4f"/>
<rect x="305" y="181" width="1" height="15" fill="#2f4f4f"/>
<rect x="305" y="195" width="50" height="1" fill="#b0e0e6"/>
<rect x="354" y="181" width="1" height="15" fill="#b0e0e6"/>
<rect x="304" y="196" width="52" height="1" fill="#2f4f4f"/>
<rect x="355" y="180" width="1" height="17" fill="#2f4f4f"/>
<svg x="306" y="182" width="48" height="13" overflow="hidden">
<text x="1" y="9" font-size="10" fill="#fff" textLength="17.5" lengthAdjust="spacingAndGlyphs">6.53</text>
</svg>
<rect x="252" y="197" width="52" height="17" fill="#7fffd4"/>
<polygon points="252,197 304,197 302,199 254,199 254,212 252,214" fill="#c0ffea"/>
<polygon points="304,197 304,214 252,214 254,212 302,212 302,199" fill="#458b74"/>
<svg x="254" y="199" width="48" height="13" overflow="hidden">
<text x="1" y="9" font-size="11" fill="#000" textLength="20.9" lengthAdjust="spacingAndGlyphs" font-family="Liberation Mono" stroke="#000" stroke-width="0.25">CT94</text>
</svg>
<rect x="304" y="197" width="52" height="17" fill="#5f9ea0"/>
<rect x="304" y="197" width="52" height="1" fill="#b0e0e6"/>
<rect x="304" y="197" width="1" height="17" fill="#b0e0e6"/>
<rect x="305" y="198" width="50" height="1" fill="#2f4f4f"/>
<rect x="305" y="198" width="1" height="15" fill="#2f4f4f"/>
<rect x="305" y="212" width="50" height="1" fill="#b0e0e6"/>
<rect x="354" y="198" width="1" height="15" fill="#b0e0e6"/>
<rect x="304" y="213" width="52" height="1" fill="#2f4f4f"/>
<rect x="355" y="197" width="1" height="17" fill="#2f4f4f"/>
<svg x="306" y="199" width="48" height="13" overflow="hidden">
<text x="1" y="9" font-size="10" fill="#fff" textLength="12.5" lengthAdjust="spacingAndGlyphs">6.7</text>
</svg>
<rect x="252" y="214" width="52" height="17" fill="#006400"/>
<polygon points="252,214 304,214 302,216 254,216 254,229 252,231" fill="#408040"/>
<polygon points="304,214 304,231 252,231 254,229 302,229 302,216" fill="#003200"/>
<svg x="254" y="216" width="48" height="13" overflow="hidden">
<text x="1" y="9" font-size="11" fill="#000" textLength="20.9" lengthAdjust="spacingAndGlyphs" font-family="Liberation Mono" stroke="#000" stroke-width="0.25">AT95</text>
</svg>
<rect x="304" y="214" width="52" height="17" fill="#5f9ea0"/>
<rect x="304" y="214" width="52" height="1" fill="#b0e0e6"/>
<rect x="304" y="214" width="1" height="17" fill="#b0e0e6"/>
<rect x="305" y="215" width="50" height="1" fill="#2f4f4f"/>
<rect x="305" y="215" width="1" height="15" fill="#2f4f4f"/>
<rect x="305" y="229" width="50" height="1" fill="#b0e0e6"/>
<rect x="354" y="215" width="1" height="15" fill="#b0e0e6"/>
<rect x="304" y="230" width="52" height="1" fill="#2f4f4f"/>
<rect x="355" y="214" width="1" height="17" fill="#2f4f4f"/>
<svg x="306" y="216" width="48" height="13" overflow="hidden">
<text x="1" y="9" font-size="10" fill="#fff" textLength="12.5" lengthAdjust="spacingAndGlyphs">6.6</text>
</svg>
<rect x="252" y="231" width="52" height="17" fill="#a020f0"/>
<polygon points="252,231 304,231 302,233 254,233 254,246 252,248" fill="#d090f8"/>
<polygon points="304,231 304,248 252,248 254,246 302,246 302,233" fill="#551a8b"/>
<svg x="254" y="233" width="48" height="13" overflow="hidden">
<text x="1" y="9" font-size="11" fill="#000" textLength="20.9" lengthAdjust="spacingAndGlyphs" font-family="Liberation Mono" stroke="#000" stroke-width="0.25">AT99</text>
</svg>
<rect x="304" y="231" width="52" height="17" fill="#5f9ea0"/>
<rect x="304" y="231" width="52" height="1" fill="#b0e0e6"/>
<rect x="304" y="231" width="1" height="17" fill="#b0e0e6"/>
<rect x="305" y="232" width="50" height="1" fill="#2f4f4f"/>
<rect x="305" y="232" width="1" height="15" fill="#2f4f4f"/>
<rect x="305" y="246" width="50" height="1" fill="#b0e0e6"/>
<rect x="354" y="232" width="1" height="15" fill="#b0e0e6"/>
<rect x="304" y="247" width="52" height="1" fill="#2f4f4f"/>
<rect x="355" y="231" width="1" height="17" fill="#2f4f4f"/>
<svg x="306" y="233" width="48" height="13" overflow="hidden">
<text x="1" y="9" font-size="10" fill="#fff" textLength="12.5" lengthAdjust="spacingAndGlyphs">6.8</text>
</svg>
<rect x="252" y="248" width="52" height="17" fill="#0000ff"/>
<polygon points="252,248 304,248 302,250 254,250 254,263 252,265" fill="#8080ff"/>
<polygon points="304,248 304,265 252,265 254,263 302,263 302,250" fill="#00008b"/>
<svg x="254" y="250" width="48" height="13" overflow="hidden">
<text x="1" y="9" font-size="11" fill="#000" textLength="26.2" lengthAdjust="spacingAndGlyphs" font-family="Liberation Mono" stroke="#000" stroke-width="0.25">VPT92</text>
</svg>
<rect x="304" y="248" width="52" height="17" fill="#5f9ea0"/>
<rect x="304" y="248" width="52" height="1" fill="#b0e0e6"/>
<rect x="304" y="248" width="1" height="17" fill="#b0e0e6"/>
<rect x="305" y="249" width="50" height="1" fill="#2f4f4f"/>
<rect x="305" y="249" width="1" height="15" fill="#2f4f4f"/>
<rect x="305" y="263" width="50" height="1" fill="#b0e0e6"/>
<rect x="354" y="249" width="1" height="15" fill="#b0e0e6"/>
<rect x="304" y="264" width="52" height="1" fill="#2f4f4f"/>
<rect x="355" y="248" width="1" height="17" fill="#2f4f4f"/>
<svg x="306" y="250" width="48" height="13" overflow="hidden">
<text x="1" y="9" font-size="10" fill="#fff" textLength="27.5" lengthAdjust="spacingAndGlyphs">24.357</text>
</svg>
<rect x="5" y="295" width="353" height="179" fill="#5f9ea0"/>
<rect x="5" y="295" width="353" height="1" fill="#2f4f4f"/>
<rect x="5" y="295" width="1" height="179" fill="#2f4f4f"/>
<rect x="6" y="296" width="351" height="1" fill="#b0e0e6"/>
<rect x="6" y="296" width="1" height="177" fill="#b0e0e6"/>
<rect x="6" y="472" width="351" height="1" fill="#2f4f4f"/>
<rect x="356" y="296" width="1" height="177" fill="#2f4f4f"/>
<rect x="5" y="473" width="353" height="1" fill="#b0e0e6"/>
<rect x="357" y="295" width="1" height="179" fill="#b0e0e6"/>
<text x="181.0" y="311" font-size="12" font-weight="bold" fill="#fff" text-anchor="middle" textLength="140.6" lengthAdjust="spacingAndGlyphs">Pressures_GASPANEL4</text>
<text x="10" y="388" font-size="12" font-weight="bold" fill="#fff" textLength="20" lengthAdjust="spacingAndGlyphs">PSI</text>
<rect x="79" y="327" width="181" height="101" fill="#000"/>
<rect x="79" y="327" width="1" height="101" fill="#a3a3a3"/>
<rect x="97" y="327" width="1" height="101" fill="#a3a3a3"/>
<rect x="115" y="327" width="1" height="101" fill="#a3a3a3"/>
<rect x="133" y="327" width="1" height="101" fill="#a3a3a3"/>
<rect x="151" y="327" width="1" height="101" fill="#a3a3a3"/>
<rect x="169" y="327" width="1" height="101" fill="#a3a3a3"/>
<rect x="187" y="327" width="1" height="101" fill="#a3a3a3"/>
<rect x="205" y="327" width="1" height="101" fill="#a3a3a3"/>
<rect x="223" y="327" width="1" height="101" fill="#a3a3a3"/>
<rect x="241" y="327" width="1" height="101" fill="#a3a3a3"/>
<rect x="259" y="327" width="1" height="101" fill="#a3a3a3"/>
<rect x="79" y="327" width="181" height="1" fill="#a3a3a3"/>
<rect x="79" y="347" width="181" height="1" fill="#a3a3a3"/>
<rect x="79" y="367" width="181" height="1" fill="#a3a3a3"/>
<rect x="79" y="387" width="181" height="1" fill="#a3a3a3"/>
<rect x="79" y="407" width="181" height="1" fill="#a3a3a3"/>
<rect x="79" y="427" width="181" height="1" fill="#a3a3a3"/>
<rect x="71" y="327" width="8" height="1" fill="#fff"/>
<rect x="75" y="331" width="4" height="1" fill="#fff"/>
<rect x="75" y="335" width="4" height="1" fill="#fff"/>
<rect x="75" y="339" width="4" height="1" fill="#fff"/>
<rect x="75" y="343" width="4" height="1" fill="#fff"/>
<rect x="71" y="347" width="8" height="1" fill="#fff"/>
<rect x="75" y="351" width="4" height="1" fill="#fff"/>
<rect x="75" y="355" width="4" height="1" fill="#fff"/>
<rect x="75" y="359" width="4" height="1" fill="#fff"/>
<rect x="75" y="363" width="4" height="1" fill="#fff"/>
<rect x="71" y="367" width="8" height="1" fill="#fff"/>
<rect x="75" y="371" width="4" height="1" fill="#fff"/>
<rect x="75" y="375" width="4" height="1" fill="#fff"/>
<rect x="75" y="379" width="4" height="1" fill="#fff"/>
<rect x="75" y="383" width="4" height="1" fill="#fff"/>
<rect x="71" y="387" width="8" height="1" fill="#fff"/>
<rect x="75" y="391" width="4" height="1" fill="#fff"/>
<rect x="75" y="395" width="4" height="1" fill="#fff"/>
<rect x="75" y="399" width="4" height="1" fill="#fff"/>
<rect x="75" y="403" width="4" height="1" fill="#fff"/>
<rect x="71" y="407" width="8" height="1" fill="#fff"/>
<rect x="75" y="411" width="4" height="1" fill="#fff"/>
<rect x="75" y="415" width="4" height="1" fill="#fff"/>
<rect x="75" y="419" width="4" height="1" fill="#fff"/>
<rect x="75" y="423" width="4" height="1" fill="#fff"/>
<rect x="71" y="427" width="8" height="1" fill="#fff"/>
<rect x="79" y="428" width="1" height="8" fill="#fff"/>
<rect x="82" y="428" width="1" height="4" fill="#fff"/>
<rect x="85" y="428" width="1" height="4" fill="#fff"/>
<rect x="88" y="428" width="1" height="4" fill="#fff"/>
<rect x="91" y="428" width="1" height="4" fill="#fff"/>
<rect x="97" y="428" width="1" height="8" fill="#fff"/>
<rect x="100" y="428" width="1" height="4" fill="#fff"/>
<rect x="103" y="428" width="1" height="4" fill="#fff"/>
<rect x="106" y="428" width="1" height="4" fill="#fff"/>
<rect x="109" y="428" width="1" height="4" fill="#fff"/>
<rect x="115" y="428" width="1" height="8" fill="#fff"/>
<rect x="118" y="428" width="1" height="4" fill="#fff"/>
<rect x="121" y="428" width="1" height="4" fill="#fff"/>
<rect x="124" y="428" width="1" height="4" fill="#fff"/>
<rect x="127" y="428" width="1" height="4" fill="#fff"/>
<rect x="133" y="428" width="1" height="8" fill="#fff"/>
<rect x="136" y="428" width="1" height="4" fill="#fff"/>
<rect x="139" y="428" width="1" height="4" fill="#fff"/>
<rect x="142" y="428" width="1" height="4" fill="#fff"/>
<rect x="145" y="428" width="1" height="4" fill="#fff"/>
<rect x="151" y="428" width="1" height="8" fill="#fff"/>
<rect x="154" y="428" width="1" height="4" fill="#fff"/>
<rect x="157" y="428" width="1" height="4" fill="#fff"/>
<rect x="160" y="428" width="1" height="4" fill="#fff"/>
<rect x="163" y="428" width="1" height="4" fill="#fff"/>
<rect x="169" y="428" width="1" height="8" fill="#fff"/>
<rect x="172" y="428" width="1" height="4" fill="#fff"/>
<rect x="175" y="428" width="1" height="4" fill="#fff"/>
<rect x="178" y="428" width="1" height="4" fill="#fff"/>
<rect x="181" y="428" width="1" height="4" fill="#fff"/>
<rect x="187" y="428" width="1" height="8" fill="#fff"/>
<rect x="190" y="428" width="1" height="4" fill="#fff"/>
<rect x="193" y="428" width="1" height="4" fill="#fff"/>
<rect x="196" y="428" width="1" height="4" fill="#fff"/>
<rect x="199" y="428" width="1" height="4" fill="#fff"/>
<rect x="205" y="428" width="1" height="8" fill="#fff"/>
<rect x="208" y="428" width="1" height="4" fill="#fff"/>
<rect x="211" y="428" width="1" height="4" fill="#fff"/>
<rect x="214" y="428" width="1" height="4" fill="#fff"/>
<rect x="217" y="428" width="1" height="4" fill="#fff"/>
<rect x="223" y="428" width="1" height="8" fill="#fff"/>
<rect x="226" y="428" width="1" height="4" fill="#fff"/>
<rect x="229" y="428" width="1" height="4" fill="#fff"/>
<rect x="232" y="428" width="1" height="4" fill="#fff"/>
<rect x="235" y="428" width="1" height="4" fill="#fff"/>
<rect x="241" y="428" width="1" height="8" fill="#fff"/>
<rect x="244" y="428" width="1" height="4" fill="#fff"/>
<rect x="247" y="428" width="1" height="4" fill="#fff"/>
<rect x="250" y="428" width="1" height="4" fill="#fff"/>
<rect x="253" y="428" width="1" height="4" fill="#fff"/>
<rect x="259" y="428" width="1" height="8" fill="#fff"/>
<polyline points="78.5,401.5 85.5,401.5 86.5,389.5 87.5,381.5 88.5,368.5 89.5,369.5 91.5,377.5 93.5,385.5 96.5,389.5 98.5,384.5 101.5,388.5 105.5,389.5 108.5,390.5 115.5,392.5 123.5,392.5 127.5,394.5 131.5,392.5 137.5,392.5 141.5,391.5 169.5,391.5 172.5,392.5 176.5,391.5 180.5,392.5 183.5,391.5 187.5,392.5 193.5,392.5" fill="none" stroke="#00ff00" stroke-width="1"/>
<polyline points="195.5,402.5 202.5,402.5 204.5,401.5 206.5,402.5 222.5,402.5 224.5,401.5 227.5,402.5 238.5,402.5 239.5,401.5 240.5,402.5 251.5,402.5 252.5,401.5 253.5,402.5 260.5,402.5" fill="none" stroke="#00ff00" stroke-width="1"/>
<polyline points="78.5,427.5 260.5,427.5" fill="none" stroke="#98f5ff" stroke-width="1"/>
<rect x="194" y="327" width="1" height="101" fill="#fff"/>
<text x="68" y="331" font-size="10" fill="#fff" text-anchor="end" textLength="14.2" lengthAdjust="spacingAndGlyphs">180</text>
<text x="68" y="431" font-size="10" fill="#fff" text-anchor="end" textLength="14.2" lengthAdjust="spacingAndGlyphs">150</text>
<text x="80" y="445" font-size="10" fill="#fff" text-anchor="middle">-5:45</text>
<rect x="264" y="317" width="46" height="17" fill="#ff0000"/>
<polygon points="264,317 310,317 308,319 266,319 266,332 264,334" fill="#ff8080"/>
<polygon points="310,317 310,334 264,334 266,332 308,332 308,319" fill="#8b0000"/>
<svg x="266" y="319" width="42" height="13" overflow="hidden">
<text x="1" y="9" font-size="11" fill="#000" textLength="26.2" lengthAdjust="spacingAndGlyphs" font-family="Liberation Mono" stroke="#000" stroke-width="0.25">PT255</text>
</svg>
<rect x="310" y="317" width="46" height="17" fill="#5f9ea0"/>
<rect x="310" y="317" width="46" height="1" fill="#b0e0e6"/>
<rect x="310" y="317" width="1" height="17" fill="#b0e0e6"/>
<rect x="311" y="318" width="44" height="1" fill="#2f4f4f"/>
<rect x="311" y="318" width="1" height="15" fill="#2f4f4f"/>
<rect x="311" y="332" width="44" height="1" fill="#b0e0e6"/>
<rect x="354" y="318" width="1" height="15" fill="#b0e0e6"/>
<rect x="310" y="333" width="46" height="1" fill="#2f4f4f"/>
<rect x="355" y="317" width="1" height="17" fill="#2f4f4f"/>
<svg x="312" y="319" width="42" height="13" overflow="hidden">
<text x="1" y="9" font-size="10" fill="#fff" textLength="17.5" lengthAdjust="spacingAndGlyphs">6.83</text>
</svg>
<rect x="264" y="334" width="46" height="17" fill="#00ff00"/>
<polygon points="264,334 310,334 308,336 266,336 266,349 264,351" fill="#80ff80"/>
<polygon points="310,334 310,351 264,351 266,349 308,349 308,336" fill="#008b00"/>
<svg x="266" y="336" width="42" height="13" overflow="hidden">
<text x="1" y="9" font-size="11" fill="#000" textLength="26.2" lengthAdjust="spacingAndGlyphs" font-family="Liberation Mono" stroke="#000" stroke-width="0.25">PT267</text>
</svg>
<rect x="310" y="334" width="46" height="17" fill="#5f9ea0"/>
<rect x="310" y="334" width="46" height="1" fill="#b0e0e6"/>
<rect x="310" y="334" width="1" height="17" fill="#b0e0e6"/>
<rect x="311" y="335" width="44" height="1" fill="#2f4f4f"/>
<rect x="311" y="335" width="1" height="15" fill="#2f4f4f"/>
<rect x="311" y="349" width="44" height="1" fill="#b0e0e6"/>
<rect x="354" y="335" width="1" height="15" fill="#b0e0e6"/>
<rect x="310" y="350" width="46" height="1" fill="#2f4f4f"/>
<rect x="355" y="334" width="1" height="17" fill="#2f4f4f"/>
<svg x="312" y="336" width="42" height="13" overflow="hidden">
<text x="1" y="9" font-size="10" fill="#fff" textLength="27.5" lengthAdjust="spacingAndGlyphs">160.62</text>
</svg>
<rect x="264" y="351" width="46" height="17" fill="#ffff00"/>
<polygon points="264,351 310,351 308,353 266,353 266,366 264,368" fill="#ffff80"/>
<polygon points="310,351 310,368 264,368 266,366 308,366 308,353" fill="#8b8b00"/>
<svg x="266" y="353" width="42" height="13" overflow="hidden">
<text x="1" y="9" font-size="11" fill="#000" textLength="26.2" lengthAdjust="spacingAndGlyphs" font-family="Liberation Mono" stroke="#000" stroke-width="0.25">PT265</text>
</svg>
<rect x="310" y="351" width="46" height="17" fill="#5f9ea0"/>
<rect x="310" y="351" width="46" height="1" fill="#b0e0e6"/>
<rect x="310" y="351" width="1" height="17" fill="#b0e0e6"/>
<rect x="311" y="352" width="44" height="1" fill="#2f4f4f"/>
<rect x="311" y="352" width="1" height="15" fill="#2f4f4f"/>
<rect x="311" y="366" width="44" height="1" fill="#b0e0e6"/>
<rect x="354" y="352" width="1" height="15" fill="#b0e0e6"/>
<rect x="310" y="367" width="46" height="1" fill="#2f4f4f"/>
<rect x="355" y="351" width="1" height="17" fill="#2f4f4f"/>
<svg x="312" y="353" width="42" height="13" overflow="hidden">
<text x="1" y="9" font-size="10" fill="#fff" textLength="22.5" lengthAdjust="spacingAndGlyphs">79.25</text>
</svg>
<rect x="264" y="368" width="46" height="17" fill="#98f5ff"/>
<polygon points="264,368 310,368 308,370 266,370 266,383 264,385" fill="#d0faff"/>
<polygon points="310,368 310,385 264,385 266,383 308,383 308,370" fill="#53868b"/>
<svg x="266" y="370" width="42" height="13" overflow="hidden">
<text x="1" y="9" font-size="11" fill="#000" textLength="26.2" lengthAdjust="spacingAndGlyphs" font-family="Liberation Mono" stroke="#000" stroke-width="0.25">PT259</text>
</svg>
<rect x="310" y="368" width="46" height="17" fill="#5f9ea0"/>
<rect x="310" y="368" width="46" height="1" fill="#b0e0e6"/>
<rect x="310" y="368" width="1" height="17" fill="#b0e0e6"/>
<rect x="311" y="369" width="44" height="1" fill="#2f4f4f"/>
<rect x="311" y="369" width="1" height="15" fill="#2f4f4f"/>
<rect x="311" y="383" width="44" height="1" fill="#b0e0e6"/>
<rect x="354" y="369" width="1" height="15" fill="#b0e0e6"/>
<rect x="310" y="384" width="46" height="1" fill="#2f4f4f"/>
<rect x="355" y="368" width="1" height="17" fill="#2f4f4f"/>
<svg x="312" y="370" width="42" height="13" overflow="hidden">
<text x="1" y="9" font-size="10" fill="#fff" textLength="22.5" lengthAdjust="spacingAndGlyphs">80.34</text>
</svg>
<rect x="5" y="482" width="353" height="179" fill="#5f9ea0"/>
<rect x="5" y="482" width="353" height="1" fill="#2f4f4f"/>
<rect x="5" y="482" width="1" height="179" fill="#2f4f4f"/>
<rect x="6" y="483" width="351" height="1" fill="#b0e0e6"/>
<rect x="6" y="483" width="1" height="177" fill="#b0e0e6"/>
<rect x="6" y="659" width="351" height="1" fill="#2f4f4f"/>
<rect x="356" y="483" width="1" height="177" fill="#2f4f4f"/>
<rect x="5" y="660" width="353" height="1" fill="#b0e0e6"/>
<rect x="357" y="482" width="1" height="179" fill="#b0e0e6"/>
<text x="181.0" y="498" font-size="12" font-weight="bold" fill="#fff" text-anchor="middle" textLength="111.4" lengthAdjust="spacingAndGlyphs">Heat_Load_LOOP1</text>
<text x="9" y="575" font-size="12" font-weight="bold" fill="#fff">W</text>
<rect x="68" y="514" width="181" height="101" fill="#000"/>
<rect x="68" y="514" width="1" height="101" fill="#a3a3a3"/>
<rect x="86" y="514" width="1" height="101" fill="#a3a3a3"/>
<rect x="104" y="514" width="1" height="101" fill="#a3a3a3"/>
<rect x="122" y="514" width="1" height="101" fill="#a3a3a3"/>
<rect x="140" y="514" width="1" height="101" fill="#a3a3a3"/>
<rect x="158" y="514" width="1" height="101" fill="#a3a3a3"/>
<rect x="176" y="514" width="1" height="101" fill="#a3a3a3"/>
<rect x="194" y="514" width="1" height="101" fill="#a3a3a3"/>
<rect x="212" y="514" width="1" height="101" fill="#a3a3a3"/>
<rect x="230" y="514" width="1" height="101" fill="#a3a3a3"/>
<rect x="248" y="514" width="1" height="101" fill="#a3a3a3"/>
<rect x="68" y="514" width="181" height="1" fill="#a3a3a3"/>
<rect x="68" y="534" width="181" height="1" fill="#a3a3a3"/>
<rect x="68" y="554" width="181" height="1" fill="#a3a3a3"/>
<rect x="68" y="574" width="181" height="1" fill="#a3a3a3"/>
<rect x="68" y="594" width="181" height="1" fill="#a3a3a3"/>
<rect x="68" y="614" width="181" height="1" fill="#a3a3a3"/>
<rect x="60" y="514" width="8" height="1" fill="#fff"/>
<rect x="64" y="518" width="4" height="1" fill="#fff"/>
<rect x="64" y="522" width="4" height="1" fill="#fff"/>
<rect x="64" y="526" width="4" height="1" fill="#fff"/>
<rect x="64" y="530" width="4" height="1" fill="#fff"/>
<rect x="60" y="534" width="8" height="1" fill="#fff"/>
<rect x="64" y="538" width="4" height="1" fill="#fff"/>
<rect x="64" y="542" width="4" height="1" fill="#fff"/>
<rect x="64" y="546" width="4" height="1" fill="#fff"/>
<rect x="64" y="550" width="4" height="1" fill="#fff"/>
<rect x="60" y="554" width="8" height="1" fill="#fff"/>
<rect x="64" y="558" width="4" height="1" fill="#fff"/>
<rect x="64" y="562" width="4" height="1" fill="#fff"/>
<rect x="64" y="566" width="4" height="1" fill="#fff"/>
<rect x="64" y="570" width="4" height="1" fill="#fff"/>
<rect x="60" y="574" width="8" height="1" fill="#fff"/>
<rect x="64" y="578" width="4" height="1" fill="#fff"/>
<rect x="64" y="582" width="4" height="1" fill="#fff"/>
<rect x="64" y="586" width="4" height="1" fill="#fff"/>
<rect x="64" y="590" width="4" height="1" fill="#fff"/>
<rect x="60" y="594" width="8" height="1" fill="#fff"/>
<rect x="64" y="598" width="4" height="1" fill="#fff"/>
<rect x="64" y="602" width="4" height="1" fill="#fff"/>
<rect x="64" y="606" width="4" height="1" fill="#fff"/>
<rect x="64" y="610" width="4" height="1" fill="#fff"/>
<rect x="60" y="614" width="8" height="1" fill="#fff"/>
<rect x="68" y="615" width="1" height="8" fill="#fff"/>
<rect x="71" y="615" width="1" height="4" fill="#fff"/>
<rect x="74" y="615" width="1" height="4" fill="#fff"/>
<rect x="77" y="615" width="1" height="4" fill="#fff"/>
<rect x="80" y="615" width="1" height="4" fill="#fff"/>
<rect x="86" y="615" width="1" height="8" fill="#fff"/>
<rect x="89" y="615" width="1" height="4" fill="#fff"/>
<rect x="92" y="615" width="1" height="4" fill="#fff"/>
<rect x="95" y="615" width="1" height="4" fill="#fff"/>
<rect x="98" y="615" width="1" height="4" fill="#fff"/>
<rect x="104" y="615" width="1" height="8" fill="#fff"/>
<rect x="107" y="615" width="1" height="4" fill="#fff"/>
<rect x="110" y="615" width="1" height="4" fill="#fff"/>
<rect x="113" y="615" width="1" height="4" fill="#fff"/>
<rect x="116" y="615" width="1" height="4" fill="#fff"/>
<rect x="122" y="615" width="1" height="8" fill="#fff"/>
<rect x="125" y="615" width="1" height="4" fill="#fff"/>
<rect x="128" y="615" width="1" height="4" fill="#fff"/>
<rect x="131" y="615" width="1" height="4" fill="#fff"/>
<rect x="134" y="615" width="1" height="4" fill="#fff"/>
<rect x="140" y="615" width="1" height="8" fill="#fff"/>
<rect x="143" y="615" width="1" height="4" fill="#fff"/>
<rect x="146" y="615" width="1" height="4" fill="#fff"/>
<rect x="149" y="615" width="1" height="4" fill="#fff"/>
<rect x="152" y="615" width="1" height="4" fill="#fff"/>
<rect x="158" y="615" width="1" height="8" fill="#fff"/>
<rect x="161" y="615" width="1" height="4" fill="#fff"/>
<rect x="164" y="615" width="1" height="4" fill="#fff"/>
<rect x="167" y="615" width="1" height="4" fill="#fff"/>
<rect x="170" y="615" width="1" height="4" fill="#fff"/>
<rect x="176" y="615" width="1" height="8" fill="#fff"/>
<rect x="179" y="615" width="1" height="4" fill="#fff"/>
<rect x="182" y="615" width="1" height="4" fill="#fff"/>
<rect x="185" y="615" width="1" height="4" fill="#fff"/>
<rect x="188" y="615" width="1" height="4" fill="#fff"/>
<rect x="194" y="615" width="1" height="8" fill="#fff"/>
<rect x="197" y="615" width="1" height="4" fill="#fff"/>
<rect x="200" y="615" width="1" height="4" fill="#fff"/>
<rect x="203" y="615" width="1" height="4" fill="#fff"/>
<rect x="206" y="615" width="1" height="4" fill="#fff"/>
<rect x="212" y="615" width="1" height="8" fill="#fff"/>
<rect x="215" y="615" width="1" height="4" fill="#fff"/>
<rect x="218" y="615" width="1" height="4" fill="#fff"/>
<rect x="221" y="615" width="1" height="4" fill="#fff"/>
<rect x="224" y="615" width="1" height="4" fill="#fff"/>
<rect x="230" y="615" width="1" height="8" fill="#fff"/>
<rect x="233" y="615" width="1" height="4" fill="#fff"/>
<rect x="236" y="615" width="1" height="4" fill="#fff"/>
<rect x="239" y="615" width="1" height="4" fill="#fff"/>
<rect x="242" y="615" width="1" height="4" fill="#fff"/>
<rect x="248" y="615" width="1" height="8" fill="#fff"/>
<polyline points="67.5,551.5 69.5,550.5 71.5,553.5 73.5,551.5 75.5,554.5 77.5,556.5 78.5,569.5 79.5,583.5 81.5,587.5 83.5,584.5 85.5,585.5 87.5,592.5 90.5,593.5 94.5,596.5 96.5,597.5 98.5,597.5 100.5,595.5 102.5,597.5 104.5,595.5 106.5,597.5 108.5,596.5 110.5,597.5 112.5,598.5 114.5,596.5 116.5,595.5 118.5,595.5 120.5,596.5 122.5,596.5 124.5,597.5 126.5,595.5 128.5,595.5 130.5,598.5 132.5,595.5 134.5,596.5 136.5,598.5 138.5,597.5 140.5,594.5 142.5,598.5 144.5,596.5 146.5,594.5 148.5,596.5 150.5,595.5 152.5,594.5 154.5,594.5 156.5,596.5 158.5,598.5 160.5,596.5 162.5,595.5 164.5,597.5 166.5,595.5 168.5,598.5 170.5,598.5 172.5,598.5 174.5,595.5 176.5,596.5 178.5,595.5 180.5,597.5 182.5,597.5" fill="none" stroke="#ff0000" stroke-width="1"/>
<polyline points="184.5,554.5 186.5,552.5 189.5,550.5 191.5,545.5 193.5,550.5 195.5,553.5 197.5,551.5 201.5,550.5 205.5,551.5 207.5,552.5 209.5,546.5 211.5,549.5 215.5,551.5 217.5,551.5 219.5,552.5 221.5,552.5 223.5,550.5 225.5,552.5 227.5,554.5 229.5,552.5 231.5,550.5 233.5,550.5 235.5,552.5 237.5,552.5 239.5,552.5 241.5,552.5 243.5,550.5 245.5,550.5 247.5,551.5 249.5,552.5" fill="none" stroke="#ff0000" stroke-width="1"/>
<polyline points="67.5,614.5 74.5,614.5 74.5,589.5 75.5,564.5 76.5,563.5 80.5,565.5 85.5,564.5 85.5,548.5 88.5,547.5 90.5,549.5 91.5,544.5 93.5,539.5 98.5,538.5 108.5,539.5 113.5,537.5 116.5,541.5 123.5,541.5 128.5,540.5 133.5,541.5 136.5,539.5 140.5,538.5 148.5,538.5 158.5,537.5 168.5,538.5 173.5,537.5 178.5,538.5 182.5,538.5" fill="none" stroke="#98f5ff" stroke-width="1"/>
<polyline points="184.5,614.5 249.5,614.5" fill="none" stroke="#98f5ff" stroke-width="1"/>
<polyline points="74.5,614.5 182.5,614.5" fill="none" stroke="#00ff00" stroke-width="1"/>
<polyline points="184.5,614.5 242.5,614.5 244.5,613.5 246.5,614.5 249.5,614.5" fill="none" stroke="#00ff00" stroke-width="1"/>
<polyline points="67.5,586.5 249.5,586.5" fill="none" stroke="#ffff00" stroke-width="1"/>
<rect x="183" y="514" width="1" height="101" fill="#fff"/>
<text x="57" y="518" font-size="10" fill="#fff" text-anchor="end" textLength="14.2" lengthAdjust="spacingAndGlyphs">300</text>
<text x="57" y="618" font-size="10" fill="#fff" text-anchor="end" textLength="4.7" lengthAdjust="spacingAndGlyphs">0</text>
<text x="69" y="632" font-size="10" fill="#fff" text-anchor="middle">-5:45</text>
<rect x="253" y="504" width="51" height="17" fill="#ff0000"/>
<polygon points="253,504 304,504 302,506 255,506 255,519 253,521" fill="#ff8080"/>
<polygon points="304,504 304,521 253,521 255,519 302,519 302,506" fill="#8b0000"/>
<svg x="255" y="506" width="47" height="13" overflow="hidden">
<text x="1" y="9" font-size="11" fill="#000" textLength="31.6" lengthAdjust="spacingAndGlyphs" font-family="Liberation Mono" stroke="#000" stroke-width="0.25">HP_Htr</text>
</svg>
<rect x="304" y="504" width="52" height="17" fill="#5f9ea0"/>
<rect x="304" y="504" width="52" height="1" fill="#b0e0e6"/>
<rect x="304" y="504" width="1" height="17" fill="#b0e0e6"/>
<rect x="305" y="505" width="50" height="1" fill="#2f4f4f"/>
<rect x="305" y="505" width="1" height="15" fill="#2f4f4f"/>
<rect x="305" y="519" width="50" height="1" fill="#b0e0e6"/>
<rect x="354" y="505" width="1" height="15" fill="#b0e0e6"/>
<rect x="304" y="520" width="52" height="1" fill="#2f4f4f"/>
<rect x="355" y="504" width="1" height="17" fill="#2f4f4f"/>
<svg x="306" y="506" width="48" height="13" overflow="hidden">
<text x="1" y="9" font-size="10" fill="#fff" textLength="27.5" lengthAdjust="spacingAndGlyphs">54.227</text>
</svg>
<rect x="253" y="521" width="51" height="17" fill="#00ff00"/>
<polygon points="253,521 304,521 302,523 255,523 255,536 253,538" fill="#80ff80"/>
<polygon points="304,521 304,538 253,538 255,536 302,536 302,523" fill="#008b00"/>
<svg x="255" y="523" width="47" height="13" overflow="hidden">
<text x="1" y="9" font-size="11" fill="#000" textLength="31.6" lengthAdjust="spacingAndGlyphs" font-family="Liberation Mono" stroke="#000" stroke-width="0.25">LP_Htr</text>
</svg>
<rect x="304" y="521" width="52" height="17" fill="#5f9ea0"/>
<rect x="304" y="521" width="52" height="1" fill="#b0e0e6"/>
<rect x="304" y="521" width="1" height="17" fill="#b0e0e6"/>
<rect x="305" y="522" width="50" height="1" fill="#2f4f4f"/>
<rect x="305" y="522" width="1" height="15" fill="#2f4f4f"/>
<rect x="305" y="536" width="50" height="1" fill="#b0e0e6"/>
<rect x="354" y="522" width="1" height="15" fill="#b0e0e6"/>
<rect x="304" y="537" width="52" height="1" fill="#2f4f4f"/>
<rect x="355" y="521" width="1" height="17" fill="#2f4f4f"/>
<svg x="306" y="523" width="48" height="13" overflow="hidden">
<text x="1" y="9" font-size="10" fill="#fff" textLength="17.5" lengthAdjust="spacingAndGlyphs">0.00</text>
</svg>
<rect x="253" y="538" width="51" height="17" fill="#ffff00"/>
<polygon points="253,538 304,538 302,540 255,540 255,553 253,555" fill="#ffff80"/>
<polygon points="304,538 304,555 253,555 255,553 302,553 302,540" fill="#8b8b00"/>
<svg x="255" y="540" width="47" height="13" overflow="hidden">
<text x="1" y="9" font-size="11" fill="#000" textLength="15.5" lengthAdjust="spacingAndGlyphs" font-family="Liberation Mono" stroke="#000" stroke-width="0.25">Fan</text>
</svg>
<rect x="304" y="538" width="52" height="17" fill="#5f9ea0"/>
<rect x="304" y="538" width="52" height="1" fill="#b0e0e6"/>
<rect x="304" y="538" width="1" height="17" fill="#b0e0e6"/>
<rect x="305" y="539" width="50" height="1" fill="#2f4f4f"/>
<rect x="305" y="539" width="1" height="15" fill="#2f4f4f"/>
<rect x="305" y="553" width="50" height="1" fill="#b0e0e6"/>
<rect x="354" y="539" width="1" height="15" fill="#b0e0e6"/>
<rect x="304" y="554" width="52" height="1" fill="#2f4f4f"/>
<rect x="355" y="538" width="1" height="17" fill="#2f4f4f"/>
<svg x="306" y="540" width="48" height="13" overflow="hidden">
<text x="1" y="9" font-size="10" fill="#fff" textLength="22.5" lengthAdjust="spacingAndGlyphs">83.52</text>
</svg>
<rect x="253" y="555" width="51" height="17" fill="#98f5ff"/>
<polygon points="253,555 304,555 302,557 255,557 255,570 253,572" fill="#d0faff"/>
<polygon points="304,555 304,572 253,572 255,570 302,570 302,557" fill="#53868b"/>
<svg x="255" y="557" width="47" height="13" overflow="hidden">
<text x="1" y="9" font-size="11" fill="#000" textLength="20.9" lengthAdjust="spacingAndGlyphs" font-family="Liberation Mono" stroke="#000" stroke-width="0.25">Beam</text>
</svg>
<rect x="304" y="555" width="52" height="17" fill="#5f9ea0"/>
<rect x="304" y="555" width="52" height="1" fill="#b0e0e6"/>
<rect x="304" y="555" width="1" height="17" fill="#b0e0e6"/>
<rect x="305" y="556" width="50" height="1" fill="#2f4f4f"/>
<rect x="305" y="556" width="1" height="15" fill="#2f4f4f"/>
<rect x="305" y="570" width="50" height="1" fill="#b0e0e6"/>
<rect x="354" y="556" width="1" height="15" fill="#b0e0e6"/>
<rect x="304" y="571" width="52" height="1" fill="#2f4f4f"/>
<rect x="355" y="555" width="1" height="17" fill="#2f4f4f"/>
<svg x="306" y="557" width="48" height="13" overflow="hidden">
<text x="1" y="9" font-size="10" fill="#fff" textLength="32.5" lengthAdjust="spacingAndGlyphs">228.993</text>
</svg>
<rect x="938" y="7" width="342" height="618" fill="#c0c0c0"/>
<rect x="939" y="8" width="340" height="1" fill="#fff"/>
<rect x="939" y="8" width="1" height="616" fill="#fff"/>
<rect x="1279" y="7" width="1" height="618" fill="#000"/>
<rect x="938" y="624" width="342" height="1" fill="#000"/>
<rect x="1278" y="8" width="1" height="616" fill="#a8a8a8"/>
<rect x="939" y="623" width="340" height="1" fill="#a8a8a8"/>
<rect x="943" y="12" width="332" height="17" fill="#808080"/>
<rect x="946" y="14" width="16" height="14" fill="#c0c0c0"/>
<rect x="946" y="14" width="16" height="1" fill="#fff"/>
<rect x="946" y="14" width="1" height="14" fill="#fff"/>
<rect x="961" y="14" width="1" height="14" fill="#000"/>
<rect x="946" y="27" width="16" height="1" fill="#000"/>
<rect x="960" y="15" width="1" height="12" fill="#888"/>
<rect x="947" y="26" width="14" height="1" fill="#888"/>
<rect x="950" y="20" width="9" height="3" fill="#000"/>
<rect x="1239" y="14" width="16" height="14" fill="#c0c0c0"/>
<rect x="1239" y="14" width="16" height="1" fill="#fff"/>
<rect x="1239" y="14" width="1" height="14" fill="#fff"/>
<rect x="1254" y="14" width="1" height="14" fill="#000"/>
<rect x="1239" y="27" width="16" height="1" fill="#000"/>
<rect x="1253" y="15" width="1" height="12" fill="#888"/>
<rect x="1240" y="26" width="14" height="1" fill="#888"/>
<rect x="1244" y="24" width="7" height="2" fill="#000"/>
<rect x="1257" y="14" width="16" height="14" fill="#c0c0c0"/>
<rect x="1257" y="14" width="16" height="1" fill="#fff"/>
<rect x="1257" y="14" width="1" height="14" fill="#fff"/>
<rect x="1272" y="14" width="1" height="14" fill="#000"/>
<rect x="1257" y="27" width="16" height="1" fill="#000"/>
<rect x="1271" y="15" width="1" height="12" fill="#888"/>
<rect x="1258" y="26" width="14" height="1" fill="#888"/>
<rect x="1261" y="17" width="9" height="2" fill="#000"/>
<rect x="1261" y="17" width="1" height="9" fill="#000"/>
<rect x="1269" y="17" width="1" height="9" fill="#000"/>
<rect x="1261" y="25" width="9" height="1" fill="#000"/>
<text x="964.5" y="25" font-size="12" font-weight="bold" fill="#000">chart_esr</text>
<rect x="943" y="29" width="332" height="591" fill="#5f9ea0"/>
<rect x="943" y="29" width="332" height="30" fill="#5f9ea0"/>
<polygon points="943,29 1275,29 1273,31 945,31 945,57 943,59" fill="#b0e0e6"/>
<polygon points="1275,29 1275,59 943,59 945,57 1273,57 1273,31" fill="#2f4f4f"/>
<text x="952.5" y="48" font-size="12" font-weight="bold" fill="#fff" textLength="20" lengthAdjust="spacingAndGlyphs">File</text>
<rect x="953" y="49" width="7" height="2" fill="#fff"/>
<text x="988.5" y="48" font-size="12" font-weight="bold" fill="#fff" textLength="45.5" lengthAdjust="spacingAndGlyphs">Options</text>
<rect x="989" y="49" width="11" height="2" fill="#fff"/>
<text x="1238.5" y="48" font-size="12" font-weight="bold" fill="#fff" textLength="26" lengthAdjust="spacingAndGlyphs">Help</text>
<rect x="1239" y="49" width="9" height="2" fill="#fff"/>
<rect x="943" y="63" width="332" height="179" fill="#5f9ea0"/>
<rect x="943" y="63" width="332" height="1" fill="#2f4f4f"/>
<rect x="943" y="63" width="1" height="179" fill="#2f4f4f"/>
<rect x="944" y="64" width="330" height="1" fill="#b0e0e6"/>
<rect x="944" y="64" width="1" height="177" fill="#b0e0e6"/>
<rect x="944" y="240" width="330" height="1" fill="#2f4f4f"/>
<rect x="1273" y="64" width="1" height="177" fill="#2f4f4f"/>
<rect x="943" y="241" width="332" height="1" fill="#b0e0e6"/>
<rect x="1274" y="63" width="1" height="179" fill="#b0e0e6"/>
<text x="1108.5" y="79" font-size="12" font-weight="bold" fill="#fff" text-anchor="middle" textLength="112.6" lengthAdjust="spacingAndGlyphs">ESR_Temperatures</text>
<rect x="996" y="95" width="181" height="101" fill="#000"/>
<rect x="996" y="95" width="1" height="101" fill="#a3a3a3"/>
<rect x="1014" y="95" width="1" height="101" fill="#a3a3a3"/>
<rect x="1032" y="95" width="1" height="101" fill="#a3a3a3"/>
<rect x="1050" y="95" width="1" height="101" fill="#a3a3a3"/>
<rect x="1068" y="95" width="1" height="101" fill="#a3a3a3"/>
<rect x="1086" y="95" width="1" height="101" fill="#a3a3a3"/>
<rect x="1104" y="95" width="1" height="101" fill="#a3a3a3"/>
<rect x="1122" y="95" width="1" height="101" fill="#a3a3a3"/>
<rect x="1140" y="95" width="1" height="101" fill="#a3a3a3"/>
<rect x="1158" y="95" width="1" height="101" fill="#a3a3a3"/>
<rect x="1176" y="95" width="1" height="101" fill="#a3a3a3"/>
<rect x="996" y="95" width="181" height="1" fill="#a3a3a3"/>
<rect x="996" y="115" width="181" height="1" fill="#a3a3a3"/>
<rect x="996" y="135" width="181" height="1" fill="#a3a3a3"/>
<rect x="996" y="155" width="181" height="1" fill="#a3a3a3"/>
<rect x="996" y="175" width="181" height="1" fill="#a3a3a3"/>
<rect x="996" y="195" width="181" height="1" fill="#a3a3a3"/>
<rect x="988" y="95" width="8" height="1" fill="#fff"/>
<rect x="992" y="99" width="4" height="1" fill="#fff"/>
<rect x="992" y="103" width="4" height="1" fill="#fff"/>
<rect x="992" y="107" width="4" height="1" fill="#fff"/>
<rect x="992" y="111" width="4" height="1" fill="#fff"/>
<rect x="988" y="115" width="8" height="1" fill="#fff"/>
<rect x="992" y="119" width="4" height="1" fill="#fff"/>
<rect x="992" y="123" width="4" height="1" fill="#fff"/>
<rect x="992" y="127" width="4" height="1" fill="#fff"/>
<rect x="992" y="131" width="4" height="1" fill="#fff"/>
<rect x="988" y="135" width="8" height="1" fill="#fff"/>
<rect x="992" y="139" width="4" height="1" fill="#fff"/>
<rect x="992" y="143" width="4" height="1" fill="#fff"/>
<rect x="992" y="147" width="4" height="1" fill="#fff"/>
<rect x="992" y="151" width="4" height="1" fill="#fff"/>
<rect x="988" y="155" width="8" height="1" fill="#fff"/>
<rect x="992" y="159" width="4" height="1" fill="#fff"/>
<rect x="992" y="163" width="4" height="1" fill="#fff"/>
<rect x="992" y="167" width="4" height="1" fill="#fff"/>
<rect x="992" y="171" width="4" height="1" fill="#fff"/>
<rect x="988" y="175" width="8" height="1" fill="#fff"/>
<rect x="992" y="179" width="4" height="1" fill="#fff"/>
<rect x="992" y="183" width="4" height="1" fill="#fff"/>
<rect x="992" y="187" width="4" height="1" fill="#fff"/>
<rect x="992" y="191" width="4" height="1" fill="#fff"/>
<rect x="988" y="195" width="8" height="1" fill="#fff"/>
<rect x="996" y="196" width="1" height="8" fill="#fff"/>
<rect x="999" y="196" width="1" height="4" fill="#fff"/>
<rect x="1002" y="196" width="1" height="4" fill="#fff"/>
<rect x="1005" y="196" width="1" height="4" fill="#fff"/>
<rect x="1008" y="196" width="1" height="4" fill="#fff"/>
<rect x="1014" y="196" width="1" height="8" fill="#fff"/>
<rect x="1017" y="196" width="1" height="4" fill="#fff"/>
<rect x="1020" y="196" width="1" height="4" fill="#fff"/>
<rect x="1023" y="196" width="1" height="4" fill="#fff"/>
<rect x="1026" y="196" width="1" height="4" fill="#fff"/>
<rect x="1032" y="196" width="1" height="8" fill="#fff"/>
<rect x="1035" y="196" width="1" height="4" fill="#fff"/>
<rect x="1038" y="196" width="1" height="4" fill="#fff"/>
<rect x="1041" y="196" width="1" height="4" fill="#fff"/>
<rect x="1044" y="196" width="1" height="4" fill="#fff"/>
<rect x="1050" y="196" width="1" height="8" fill="#fff"/>
<rect x="1053" y="196" width="1" height="4" fill="#fff"/>
<rect x="1056" y="196" width="1" height="4" fill="#fff"/>
<rect x="1059" y="196" width="1" height="4" fill="#fff"/>
<rect x="1062" y="196" width="1" height="4" fill="#fff"/>
<rect x="1068" y="196" width="1" height="8" fill="#fff"/>
<rect x="1071" y="196" width="1" height="4" fill="#fff"/>
<rect x="1074" y="196" width="1" height="4" fill="#fff"/>
<rect x="1077" y="196" width="1" height="4" fill="#fff"/>
<rect x="1080" y="196" width="1" height="4" fill="#fff"/>
<rect x="1086" y="196" width="1" height="8" fill="#fff"/>
<rect x="1089" y="196" width="1" height="4" fill="#fff"/>
<rect x="1092" y="196" width="1" height="4" fill="#fff"/>
<rect x="1095" y="196" width="1" height="4" fill="#fff"/>
<rect x="1098" y="196" width="1" height="4" fill="#fff"/>
<rect x="1104" y="196" width="1" height="8" fill="#fff"/>
<rect x="1107" y="196" width="1" height="4" fill="#fff"/>
<rect x="1110" y="196" width="1" height="4" fill="#fff"/>
<rect x="1113" y="196" width="1" height="4" fill="#fff"/>
<rect x="1116" y="196" width="1" height="4" fill="#fff"/>
<rect x="1122" y="196" width="1" height="8" fill="#fff"/>
<rect x="1125" y="196" width="1" height="4" fill="#fff"/>
<rect x="1128" y="196" width="1" height="4" fill="#fff"/>
<rect x="1131" y="196" width="1" height="4" fill="#fff"/>
<rect x="1134" y="196" width="1" height="4" fill="#fff"/>
<rect x="1140" y="196" width="1" height="8" fill="#fff"/>
<rect x="1143" y="196" width="1" height="4" fill="#fff"/>
<rect x="1146" y="196" width="1" height="4" fill="#fff"/>
<rect x="1149" y="196" width="1" height="4" fill="#fff"/>
<rect x="1152" y="196" width="1" height="4" fill="#fff"/>
<rect x="1158" y="196" width="1" height="8" fill="#fff"/>
<rect x="1161" y="196" width="1" height="4" fill="#fff"/>
<rect x="1164" y="196" width="1" height="4" fill="#fff"/>
<rect x="1167" y="196" width="1" height="4" fill="#fff"/>
<rect x="1170" y="196" width="1" height="4" fill="#fff"/>
<rect x="1176" y="196" width="1" height="8" fill="#fff"/>
<polyline points="995.5,95.5 1177.5,95.5" fill="none" stroke="#98f5ff" stroke-width="1"/>
<polyline points="995.5,164.5 1177.5,164.5" fill="none" stroke="#00ff00" stroke-width="1"/>
<polyline points="995.5,180.5 1177.5,180.5" fill="none" stroke="#ff0000" stroke-width="1"/>
<polyline points="995.5,133.5 997.5,127.5 999.5,127.5 1001.5,130.5 1003.5,133.5 1005.5,133.5 1007.5,127.5 1009.5,129.5 1011.5,128.5 1013.5,127.5 1015.5,135.5 1017.5,131.5 1019.5,131.5 1021.5,127.5 1023.5,127.5 1025.5,136.5 1027.5,134.5 1029.5,125.5 1031.5,136.5 1033.5,134.5 1035.5,128.5 1037.5,129.5 1039.5,128.5 1041.5,131.5 1043.5,131.5 1045.5,132.5 1047.5,131.5 1049.5,127.5 1051.5,129.5 1053.5,131.5 1055.5,135.5 1057.5,136.5 1059.5,130.5 1061.5,134.5 1063.5,125.5 1065.5,129.5 1067.5,134.5 1069.5,135.5 1071.5,136.5 1073.5,133.5 1075.5,131.5 1077.5,135.5 1079.5,130.5 1081.5,135.5 1083.5,131.5 1085.5,131.5 1087.5,132.5 1089.5,131.5 1091.5,125.5 1093.5,132.5 1095.5,130.5 1097.5,127.5 1099.5,135.5 1101.5,131.5 1103.5,136.5 1105.5,128.5 1107.5,128.5 1109.5,133.5 1111.5,134.5 1113.5,132.5 1115.5,135.5 1117.5,127.5 1119.5,130.5 1121.5,125.5 1123.5,134.5 1125.5,135.5 1127.5,135.5 1129.5,132.5 1131.5,127.5 1133.5,135.5 1135.5,136.5 1137.5,131.5 1139.5,128.5 1141.5,127.5 1143.5,131.5 1145.5,135.5 1147.5,127.5 1149.5,136.5 1151.5,127.5 1153.5,132.5 1155.5,127.5 1157.5,129.5 1159.5,127.5 1161.5,135.5 1163.5,136.5 1165.5,131.5 1167.5,134.5 1169.5,128.5 1171.5,127.5 1173.5,132.5 1175.5,125.5 1177.5,125.5" fill="none" stroke="#ffff00" stroke-width="1"/>
<rect x="1111" y="95" width="1" height="101" fill="#fff"/>
<text x="997" y="213" font-size="10" fill="#fff" text-anchor="middle">-5:45</text>
<rect x="1181" y="85" width="46" height="17" fill="#ff0000"/>
<polygon points="1181,85 1227,85 1225,87 1183,87 1183,100 1181,102" fill="#ff8080"/>
<polygon points="1227,85 1227,102 1181,102 1183,100 1225,100 1225,87" fill="#8b0000"/>
<svg x="1183" y="87" width="42" height="13" overflow="hidden">
<text x="1" y="9" font-size="11" fill="#000" textLength="36.9" lengthAdjust="spacingAndGlyphs" font-family="Liberation Mono" stroke="#000" stroke-width="0.25">CTD671S</text>
</svg>
<rect x="1227" y="85" width="46" height="17" fill="#5f9ea0"/>
<rect x="1227" y="85" width="46" height="1" fill="#b0e0e6"/>
<rect x="1227" y="85" width="1" height="17" fill="#b0e0e6"/>
<rect x="1228" y="86" width="44" height="1" fill="#2f4f4f"/>
<rect x="1228" y="86" width="1" height="15" fill="#2f4f4f"/>
<rect x="1228" y="100" width="44" height="1" fill="#b0e0e6"/>
<rect x="1271" y="86" width="1" height="15" fill="#b0e0e6"/>
<rect x="1227" y="101" width="46" height="1" fill="#2f4f4f"/>
<rect x="1272" y="85" width="1" height="17" fill="#2f4f4f"/>
<svg x="1229" y="87" width="42" height="13" overflow="hidden">
<text x="1" y="9" font-size="10" fill="#fff" textLength="22.5" lengthAdjust="spacingAndGlyphs">4.230</text>
</svg>
<rect x="1181" y="102" width="46" height="17" fill="#00ff00"/>
<polygon points="1181,102 1227,102 1225,104 1183,104 1183,117 1181,119" fill="#80ff80"/>
<polygon points="1227,102 1227,119 1181,119 1183,117 1225,117 1225,104" fill="#008b00"/>
<svg x="1183" y="104" width="42" height="13" overflow="hidden">
<text x="1" y="9" font-size="11" fill="#000" textLength="36.9" lengthAdjust="spacingAndGlyphs" font-family="Liberation Mono" stroke="#000" stroke-width="0.25">CTD9521</text>
</svg>
<rect x="1227" y="102" width="46" height="17" fill="#5f9ea0"/>
<rect x="1227" y="102" width="46" height="1" fill="#b0e0e6"/>
<rect x="1227" y="102" width="1" height="17" fill="#b0e0e6"/>
<rect x="1228" y="103" width="44" height="1" fill="#2f4f4f"/>
<rect x="1228" y="103" width="1" height="15" fill="#2f4f4f"/>
<rect x="1228" y="117" width="44" height="1" fill="#b0e0e6"/>
<rect x="1271" y="103" width="1" height="15" fill="#b0e0e6"/>
<rect x="1227" y="118" width="46" height="1" fill="#2f4f4f"/>
<rect x="1272" y="102" width="1" height="17" fill="#2f4f4f"/>
<svg x="1229" y="104" width="42" height="13" overflow="hidden">
<text x="1" y="9" font-size="10" fill="#fff" textLength="22.5" lengthAdjust="spacingAndGlyphs">4.460</text>
</svg>
<rect x="1181" y="119" width="46" height="17" fill="#ffff00"/>
<polygon points="1181,119 1227,119 1225,121 1183,121 1183,134 1181,136" fill="#ffff80"/>
<polygon points="1227,119 1227,136 1181,136 1183,134 1225,134 1225,121" fill="#8b8b00"/>
<svg x="1183" y="121" width="42" height="13" overflow="hidden">
<text x="1" y="9" font-size="11" fill="#000" textLength="31.6" lengthAdjust="spacingAndGlyphs" font-family="Liberation Mono" stroke="#000" stroke-width="0.25">CTD672</text>
</svg>
<rect x="1227" y="119" width="46" height="17" fill="#5f9ea0"/>
<rect x="1227" y="119" width="46" height="1" fill="#b0e0e6"/>
<rect x="1227" y="119" width="1" height="17" fill="#b0e0e6"/>
<rect x="1228" y="120" width="44" height="1" fill="#2f4f4f"/>
<rect x="1228" y="120" width="1" height="15" fill="#2f4f4f"/>
<rect x="1228" y="134" width="44" height="1" fill="#b0e0e6"/>
<rect x="1271" y="120" width="1" height="15" fill="#b0e0e6"/>
<rect x="1227" y="135" width="46" height="1" fill="#2f4f4f"/>
<rect x="1272" y="119" width="1" height="17" fill="#2f4f4f"/>
<svg x="1229" y="121" width="42" height="13" overflow="hidden">
<text x="1" y="9" font-size="10" fill="#fff" textLength="22.5" lengthAdjust="spacingAndGlyphs">5.030</text>
</svg>
<rect x="1181" y="136" width="46" height="17" fill="#98f5ff"/>
<polygon points="1181,136 1227,136 1225,138 1183,138 1183,151 1181,153" fill="#d0faff"/>
<polygon points="1227,136 1227,153 1181,153 1183,151 1225,151 1225,138" fill="#53868b"/>
<svg x="1183" y="138" width="42" height="13" overflow="hidden">
<text x="1" y="9" font-size="11" fill="#000" textLength="31.6" lengthAdjust="spacingAndGlyphs" font-family="Liberation Mono" stroke="#000" stroke-width="0.25">CTD673</text>
</svg>
<rect x="1227" y="136" width="46" height="17" fill="#5f9ea0"/>
<rect x="1227" y="136" width="46" height="1" fill="#b0e0e6"/>
<rect x="1227" y="136" width="1" height="17" fill="#b0e0e6"/>
<rect x="1228" y="137" width="44" height="1" fill="#2f4f4f"/>
<rect x="1228" y="137" width="1" height="15" fill="#2f4f4f"/>
<rect x="1228" y="151" width="44" height="1" fill="#b0e0e6"/>
<rect x="1271" y="137" width="1" height="15" fill="#b0e0e6"/>
<rect x="1227" y="152" width="46" height="1" fill="#2f4f4f"/>
<rect x="1272" y="136" width="1" height="17" fill="#2f4f4f"/>
<svg x="1229" y="138" width="42" height="13" overflow="hidden">
<text x="1" y="9" font-size="10" fill="#fff" textLength="32.5" lengthAdjust="spacingAndGlyphs">208.260</text>
</svg>
<rect x="943" y="250" width="332" height="179" fill="#5f9ea0"/>
<rect x="943" y="250" width="332" height="1" fill="#2f4f4f"/>
<rect x="943" y="250" width="1" height="179" fill="#2f4f4f"/>
<rect x="944" y="251" width="330" height="1" fill="#b0e0e6"/>
<rect x="944" y="251" width="1" height="177" fill="#b0e0e6"/>
<rect x="944" y="427" width="330" height="1" fill="#2f4f4f"/>
<rect x="1273" y="251" width="1" height="177" fill="#2f4f4f"/>
<rect x="943" y="428" width="332" height="1" fill="#b0e0e6"/>
<rect x="1274" y="250" width="1" height="179" fill="#b0e0e6"/>
<text x="1108.5" y="266" font-size="12" font-weight="bold" fill="#fff" text-anchor="middle" textLength="91.6" lengthAdjust="spacingAndGlyphs">ESR_Pressures</text>
<rect x="996" y="282" width="181" height="101" fill="#000"/>
<rect x="996" y="282" width="1" height="101" fill="#a3a3a3"/>
<rect x="1014" y="282" width="1" height="101" fill="#a3a3a3"/>
<rect x="1032" y="282" width="1" height="101" fill="#a3a3a3"/>
<rect x="1050" y="282" width="1" height="101" fill="#a3a3a3"/>
<rect x="1068" y="282" width="1" height="101" fill="#a3a3a3"/>
<rect x="1086" y="282" width="1" height="101" fill="#a3a3a3"/>
<rect x="1104" y="282" width="1" height="101" fill="#a3a3a3"/>
<rect x="1122" y="282" width="1" height="101" fill="#a3a3a3"/>
<rect x="1140" y="282" width="1" height="101" fill="#a3a3a3"/>
<rect x="1158" y="282" width="1" height="101" fill="#a3a3a3"/>
<rect x="1176" y="282" width="1" height="101" fill="#a3a3a3"/>
<rect x="996" y="282" width="181" height="1" fill="#a3a3a3"/>
<rect x="996" y="302" width="181" height="1" fill="#a3a3a3"/>
<rect x="996" y="322" width="181" height="1" fill="#a3a3a3"/>
<rect x="996" y="342" width="181" height="1" fill="#a3a3a3"/>
<rect x="996" y="362" width="181" height="1" fill="#a3a3a3"/>
<rect x="996" y="382" width="181" height="1" fill="#a3a3a3"/>
<rect x="988" y="282" width="8" height="1" fill="#fff"/>
<rect x="992" y="286" width="4" height="1" fill="#fff"/>
<rect x="992" y="290" width="4" height="1" fill="#fff"/>
<rect x="992" y="294" width="4" height="1" fill="#fff"/>
<rect x="992" y="298" width="4" height="1" fill="#fff"/>
<rect x="988" y="302" width="8" height="1" fill="#fff"/>
<rect x="992" y="306" width="4" height="1" fill="#fff"/>
<rect x="992" y="310" width="4" height="1" fill="#fff"/>
<rect x="992" y="314" width="4" height="1" fill="#fff"/>
<rect x="992" y="318" width="4" height="1" fill="#fff"/>
<rect x="988" y="322" width="8" height="1" fill="#fff"/>
<rect x="992" y="326" width="4" height="1" fill="#fff"/>
<rect x="992" y="330" width="4" height="1" fill="#fff"/>
<rect x="992" y="334" width="4" height="1" fill="#fff"/>
<rect x="992" y="338" width="4" height="1" fill="#fff"/>
<rect x="988" y="342" width="8" height="1" fill="#fff"/>
<rect x="992" y="346" width="4" height="1" fill="#fff"/>
<rect x="992" y="350" width="4" height="1" fill="#fff"/>
<rect x="992" y="354" width="4" height="1" fill="#fff"/>
<rect x="992" y="358" width="4" height="1" fill="#fff"/>
<rect x="988" y="362" width="8" height="1" fill="#fff"/>
<rect x="992" y="366" width="4" height="1" fill="#fff"/>
<rect x="992" y="370" width="4" height="1" fill="#fff"/>
<rect x="992" y="374" width="4" height="1" fill="#fff"/>
<rect x="992" y="378" width="4" height="1" fill="#fff"/>
<rect x="988" y="382" width="8" height="1" fill="#fff"/>
<rect x="996" y="383" width="1" height="8" fill="#fff"/>
<rect x="999" y="383" width="1" height="4" fill="#fff"/>
<rect x="1002" y="383" width="1" height="4" fill="#fff"/>
<rect x="1005" y="383" width="1" height="4" fill="#fff"/>
<rect x="1008" y="383" width="1" height="4" fill="#fff"/>
<rect x="1014" y="383" width="1" height="8" fill="#fff"/>
<rect x="1017" y="383" width="1" height="4" fill="#fff"/>
<rect x="1020" y="383" width="1" height="4" fill="#fff"/>
<rect x="1023" y="383" width="1" height="4" fill="#fff"/>
<rect x="1026" y="383" width="1" height="4" fill="#fff"/>
<rect x="1032" y="383" width="1" height="8" fill="#fff"/>
<rect x="1035" y="383" width="1" height="4" fill="#fff"/>
<rect x="1038" y="383" width="1" height="4" fill="#fff"/>
<rect x="1041" y="383" width="1" height="4" fill="#fff"/>
<rect x="1044" y="383" width="1" height="4" fill="#fff"/>
<rect x="1050" y="383" width="1" height="8" fill="#fff"/>
<rect x="1053" y="383" width="1" height="4" fill="#fff"/>
<rect x="1056" y="383" width="1" height="4" fill="#fff"/>
<rect x="1059" y="383" width="1" height="4" fill="#fff"/>
<rect x="1062" y="383" width="1" height="4" fill="#fff"/>
<rect x="1068" y="383" width="1" height="8" fill="#fff"/>
<rect x="1071" y="383" width="1" height="4" fill="#fff"/>
<rect x="1074" y="383" width="1" height="4" fill="#fff"/>
<rect x="1077" y="383" width="1" height="4" fill="#fff"/>
<rect x="1080" y="383" width="1" height="4" fill="#fff"/>
<rect x="1086" y="383" width="1" height="8" fill="#fff"/>
<rect x="1089" y="383" width="1" height="4" fill="#fff"/>
<rect x="1092" y="383" width="1" height="4" fill="#fff"/>
<rect x="1095" y="383" width="1" height="4" fill="#fff"/>
<rect x="1098" y="383" width="1" height="4" fill="#fff"/>
<rect x="1104" y="383" width="1" height="8" fill="#fff"/>
<rect x="1107" y="383" width="1" height="4" fill="#fff"/>
<rect x="1110" y="383" width="1" height="4" fill="#fff"/>
<rect x="1113" y="383" width="1" height="4" fill="#fff"/>
<rect x="1116" y="383" width="1" height="4" fill="#fff"/>
<rect x="1122" y="383" width="1" height="8" fill="#fff"/>
<rect x="1125" y="383" width="1" height="4" fill="#fff"/>
<rect x="1128" y="383" width="1" height="4" fill="#fff"/>
<rect x="1131" y="383" width="1" height="4" fill="#fff"/>
<rect x="1134" y="383" width="1" height="4" fill="#fff"/>
<rect x="1140" y="383" width="1" height="8" fill="#fff"/>
<rect x="1143" y="383" width="1" height="4" fill="#fff"/>
<rect x="1146" y="383" width="1" height="4" fill="#fff"/>
<rect x="1149" y="383" width="1" height="4" fill="#fff"/>
<rect x="1152" y="383" width="1" height="4" fill="#fff"/>
<rect x="1158" y="383" width="1" height="8" fill="#fff"/>
<rect x="1161" y="383" width="1" height="4" fill="#fff"/>
<rect x="1164" y="383" width="1" height="4" fill="#fff"/>
<rect x="1167" y="383" width="1" height="4" fill="#fff"/>
<rect x="1170" y="383" width="1" height="4" fill="#fff"/>
<rect x="1176" y="383" width="1" height="8" fill="#fff"/>
<polyline points="995.5,282.5 1177.5,282.5" fill="none" stroke="#ffa500" stroke-width="1"/>
<polyline points="995.5,309.5 1177.5,309.5" fill="none" stroke="#ffff00" stroke-width="1"/>
<polyline points="995.5,306.5 1085.5,306.5 1086.5,305.5 1087.5,306.5 1167.5,306.5 1168.5,305.5 1169.5,306.5 1177.5,306.5" fill="none" stroke="#00ff00" stroke-width="1"/>
<rect x="1111" y="282" width="1" height="101" fill="#fff"/>
<text x="997" y="400" font-size="10" fill="#fff" text-anchor="middle">-5:45</text>
<rect x="1181" y="272" width="46" height="17" fill="#ff0000"/>
<polygon points="1181,272 1227,272 1225,274 1183,274 1183,287 1181,289" fill="#ff8080"/>
<polygon points="1227,272 1227,289 1181,289 1183,287 1225,287 1225,274" fill="#8b0000"/>
<svg x="1183" y="274" width="42" height="13" overflow="hidden">
<text x="1" y="9" font-size="11" fill="#000" textLength="36.9" lengthAdjust="spacingAndGlyphs" font-family="Liberation Mono" stroke="#000" stroke-width="0.25">CPI671T</text>
</svg>
<rect x="1227" y="272" width="46" height="17" fill="#5f9ea0"/>
<rect x="1227" y="272" width="46" height="1" fill="#b0e0e6"/>
<rect x="1227" y="272" width="1" height="17" fill="#b0e0e6"/>
<rect x="1228" y="273" width="44" height="1" fill="#2f4f4f"/>
<rect x="1228" y="273" width="1" height="15" fill="#2f4f4f"/>
<rect x="1228" y="287" width="44" height="1" fill="#b0e0e6"/>
<rect x="1271" y="273" width="1" height="15" fill="#b0e0e6"/>
<rect x="1227" y="288" width="46" height="1" fill="#2f4f4f"/>
<rect x="1272" y="272" width="1" height="17" fill="#2f4f4f"/>
<svg x="1229" y="274" width="42" height="13" overflow="hidden">
<text x="1" y="9" font-size="10" fill="#fff" textLength="27.5" lengthAdjust="spacingAndGlyphs">42.924</text>
</svg>
<rect x="1181" y="289" width="46" height="17" fill="#00ff00"/>
<polygon points="1181,289 1227,289 1225,291 1183,291 1183,304 1181,306" fill="#80ff80"/>
<polygon points="1227,289 1227,306 1181,306 1183,304 1225,304 1225,291" fill="#008b00"/>
<svg x="1183" y="291" width="42" height="13" overflow="hidden">
<text x="1" y="9" font-size="11" fill="#000" textLength="36.9" lengthAdjust="spacingAndGlyphs" font-family="Liberation Mono" stroke="#000" stroke-width="0.25">CPI9521</text>
</svg>
<rect x="1227" y="289" width="46" height="17" fill="#5f9ea0"/>
<rect x="1227" y="289" width="46" height="1" fill="#b0e0e6"/>
<rect x="1227" y="289" width="1" height="17" fill="#b0e0e6"/>
<rect x="1228" y="290" width="44" height="1" fill="#2f4f4f"/>
<rect x="1228" y="290" width="1" height="15" fill="#2f4f4f"/>
<rect x="1228" y="304" width="44" height="1" fill="#b0e0e6"/>
<rect x="1271" y="290" width="1" height="15" fill="#b0e0e6"/>
<rect x="1227" y="305" width="46" height="1" fill="#2f4f4f"/>
<rect x="1272" y="289" width="1" height="17" fill="#2f4f4f"/>
<svg x="1229" y="291" width="42" height="13" overflow="hidden">
<text x="1" y="9" font-size="10" fill="#fff" textLength="27.5" lengthAdjust="spacingAndGlyphs">17.640</text>
</svg>
<rect x="1181" y="306" width="46" height="17" fill="#ffff00"/>
<polygon points="1181,306 1227,306 1225,308 1183,308 1183,321 1181,323" fill="#ffff80"/>
<polygon points="1227,306 1227,323 1181,323 1183,321 1225,321 1225,308" fill="#8b8b00"/>
<svg x="1183" y="308" width="42" height="13" overflow="hidden">
<text x="1" y="9" font-size="11" fill="#000" textLength="31.6" lengthAdjust="spacingAndGlyphs" font-family="Liberation Mono" stroke="#000" stroke-width="0.25">CPI672</text>
</svg>
<rect x="1227" y="306" width="46" height="17" fill="#5f9ea0"/>
<rect x="1227" y="306" width="46" height="1" fill="#b0e0e6"/>
<rect x="1227" y="306" width="1" height="17" fill="#b0e0e6"/>
<rect x="1228" y="307" width="44" height="1" fill="#2f4f4f"/>
<rect x="1228" y="307" width="1" height="15" fill="#2f4f4f"/>
<rect x="1228" y="321" width="44" height="1" fill="#b0e0e6"/>
<rect x="1271" y="307" width="1" height="15" fill="#b0e0e6"/>
<rect x="1227" y="322" width="46" height="1" fill="#2f4f4f"/>
<rect x="1272" y="306" width="1" height="17" fill="#2f4f4f"/>
<svg x="1229" y="308" width="42" height="13" overflow="hidden">
<text x="1" y="9" font-size="10" fill="#fff" textLength="27.5" lengthAdjust="spacingAndGlyphs">17.346</text>
</svg>
<rect x="1181" y="323" width="46" height="17" fill="#98f5ff"/>
<polygon points="1181,323 1227,323 1225,325 1183,325 1183,338 1181,340" fill="#d0faff"/>
<polygon points="1227,323 1227,340 1181,340 1183,338 1225,338 1225,325" fill="#53868b"/>
<svg x="1183" y="325" width="42" height="13" overflow="hidden">
<text x="1" y="9" font-size="11" fill="#000" textLength="36.9" lengthAdjust="spacingAndGlyphs" font-family="Liberation Mono" stroke="#000" stroke-width="0.25">CPI6010</text>
</svg>
<rect x="1227" y="323" width="46" height="17" fill="#5f9ea0"/>
<rect x="1227" y="323" width="46" height="1" fill="#b0e0e6"/>
<rect x="1227" y="323" width="1" height="17" fill="#b0e0e6"/>
<rect x="1228" y="324" width="44" height="1" fill="#2f4f4f"/>
<rect x="1228" y="324" width="1" height="15" fill="#2f4f4f"/>
<rect x="1228" y="338" width="44" height="1" fill="#b0e0e6"/>
<rect x="1271" y="324" width="1" height="15" fill="#b0e0e6"/>
<rect x="1227" y="339" width="46" height="1" fill="#2f4f4f"/>
<rect x="1272" y="323" width="1" height="17" fill="#2f4f4f"/>
<svg x="1229" y="325" width="42" height="13" overflow="hidden">
<text x="1" y="9" font-size="10" fill="#fff" textLength="27.5" lengthAdjust="spacingAndGlyphs">59.976</text>
</svg>
<rect x="1181" y="340" width="46" height="17" fill="#ee82ee"/>
<polygon points="1181,340 1227,340 1225,342 1183,342 1183,355 1181,357" fill="#f8c0f8"/>
<polygon points="1227,340 1227,357 1181,357 1183,355 1225,355 1225,342" fill="#8b478b"/>
<svg x="1183" y="342" width="42" height="13" overflow="hidden">
<text x="1" y="9" font-size="11" fill="#000" textLength="36.9" lengthAdjust="spacingAndGlyphs" font-family="Liberation Mono" stroke="#000" stroke-width="0.25">CPI60DL</text>
</svg>
<rect x="1227" y="340" width="46" height="17" fill="#5f9ea0"/>
<rect x="1227" y="340" width="46" height="1" fill="#b0e0e6"/>
<rect x="1227" y="340" width="1" height="17" fill="#b0e0e6"/>
<rect x="1228" y="341" width="44" height="1" fill="#2f4f4f"/>
<rect x="1228" y="341" width="1" height="15" fill="#2f4f4f"/>
<rect x="1228" y="355" width="44" height="1" fill="#b0e0e6"/>
<rect x="1271" y="341" width="1" height="15" fill="#b0e0e6"/>
<rect x="1227" y="356" width="46" height="1" fill="#2f4f4f"/>
<rect x="1272" y="340" width="1" height="17" fill="#2f4f4f"/>
<svg x="1229" y="342" width="42" height="13" overflow="hidden">
<text x="1" y="9" font-size="10" fill="#fff" textLength="27.5" lengthAdjust="spacingAndGlyphs">23.520</text>
</svg>
<rect x="1181" y="357" width="46" height="17" fill="#ffa500"/>
<polygon points="1181,357 1227,357 1225,359 1183,359 1183,372 1181,374" fill="#ffd280"/>
<polygon points="1227,357 1227,374 1181,374 1183,372 1225,372 1225,359" fill="#8b5a00"/>
<svg x="1183" y="359" width="42" height="13" overflow="hidden">
<text x="1" y="9" font-size="11" fill="#000" textLength="31.6" lengthAdjust="spacingAndGlyphs" font-family="Liberation Mono" stroke="#000" stroke-width="0.25">CPI673</text>
</svg>
<rect x="1227" y="357" width="46" height="17" fill="#5f9ea0"/>
<rect x="1227" y="357" width="46" height="1" fill="#b0e0e6"/>
<rect x="1227" y="357" width="1" height="17" fill="#b0e0e6"/>
<rect x="1228" y="358" width="44" height="1" fill="#2f4f4f"/>
<rect x="1228" y="358" width="1" height="15" fill="#2f4f4f"/>
<rect x="1228" y="372" width="44" height="1" fill="#b0e0e6"/>
<rect x="1271" y="358" width="1" height="15" fill="#b0e0e6"/>
<rect x="1227" y="373" width="46" height="1" fill="#2f4f4f"/>
<rect x="1272" y="357" width="1" height="17" fill="#2f4f4f"/>
<svg x="1229" y="359" width="42" height="13" overflow="hidden">
<text x="1" y="9" font-size="10" fill="#fff" textLength="32.5" lengthAdjust="spacingAndGlyphs">249.312</text>
</svg>
<rect x="943" y="437" width="332" height="179" fill="#5f9ea0"/>
<rect x="943" y="437" width="332" height="1" fill="#2f4f4f"/>
<rect x="943" y="437" width="1" height="179" fill="#2f4f4f"/>
<rect x="944" y="438" width="330" height="1" fill="#b0e0e6"/>
<rect x="944" y="438" width="1" height="177" fill="#b0e0e6"/>
<rect x="944" y="614" width="330" height="1" fill="#2f4f4f"/>
<rect x="1273" y="438" width="1" height="177" fill="#2f4f4f"/>
<rect x="943" y="615" width="332" height="1" fill="#b0e0e6"/>
<rect x="1274" y="437" width="1" height="179" fill="#b0e0e6"/>
<text x="1108.5" y="453" font-size="12" font-weight="bold" fill="#fff" text-anchor="middle" textLength="92.9" lengthAdjust="spacingAndGlyphs">ESR_Flow_(g/s)</text>
<rect x="996" y="469" width="181" height="101" fill="#000"/>
<rect x="996" y="469" width="1" height="101" fill="#a3a3a3"/>
<rect x="1014" y="469" width="1" height="101" fill="#a3a3a3"/>
<rect x="1032" y="469" width="1" height="101" fill="#a3a3a3"/>
<rect x="1050" y="469" width="1" height="101" fill="#a3a3a3"/>
<rect x="1068" y="469" width="1" height="101" fill="#a3a3a3"/>
<rect x="1086" y="469" width="1" height="101" fill="#a3a3a3"/>
<rect x="1104" y="469" width="1" height="101" fill="#a3a3a3"/>
<rect x="1122" y="469" width="1" height="101" fill="#a3a3a3"/>
<rect x="1140" y="469" width="1" height="101" fill="#a3a3a3"/>
<rect x="1158" y="469" width="1" height="101" fill="#a3a3a3"/>
<rect x="1176" y="469" width="1" height="101" fill="#a3a3a3"/>
<rect x="996" y="469" width="181" height="1" fill="#a3a3a3"/>
<rect x="996" y="489" width="181" height="1" fill="#a3a3a3"/>
<rect x="996" y="509" width="181" height="1" fill="#a3a3a3"/>
<rect x="996" y="529" width="181" height="1" fill="#a3a3a3"/>
<rect x="996" y="549" width="181" height="1" fill="#a3a3a3"/>
<rect x="996" y="569" width="181" height="1" fill="#a3a3a3"/>
<rect x="988" y="469" width="8" height="1" fill="#fff"/>
<rect x="992" y="473" width="4" height="1" fill="#fff"/>
<rect x="992" y="477" width="4" height="1" fill="#fff"/>
<rect x="992" y="481" width="4" height="1" fill="#fff"/>
<rect x="992" y="485" width="4" height="1" fill="#fff"/>
<rect x="988" y="489" width="8" height="1" fill="#fff"/>
<rect x="992" y="493" width="4" height="1" fill="#fff"/>
<rect x="992" y="497" width="4" height="1" fill="#fff"/>
<rect x="992" y="501" width="4" height="1" fill="#fff"/>
<rect x="992" y="505" width="4" height="1" fill="#fff"/>
<rect x="988" y="509" width="8" height="1" fill="#fff"/>
<rect x="992" y="513" width="4" height="1" fill="#fff"/>
<rect x="992" y="517" width="4" height="1" fill="#fff"/>
<rect x="992" y="521" width="4" height="1" fill="#fff"/>
<rect x="992" y="525" width="4" height="1" fill="#fff"/>
<rect x="988" y="529" width="8" height="1" fill="#fff"/>
<rect x="992" y="533" width="4" height="1" fill="#fff"/>
<rect x="992" y="537" width="4" height="1" fill="#fff"/>
<rect x="992" y="541" width="4" height="1" fill="#fff"/>
<rect x="992" y="545" width="4" height="1" fill="#fff"/>
<rect x="988" y="549" width="8" height="1" fill="#fff"/>
<rect x="992" y="553" width="4" height="1" fill="#fff"/>
<rect x="992" y="557" width="4" height="1" fill="#fff"/>
<rect x="992" y="561" width="4" height="1" fill="#fff"/>
<rect x="992" y="565" width="4" height="1" fill="#fff"/>
<rect x="988" y="569" width="8" height="1" fill="#fff"/>
<rect x="996" y="570" width="1" height="8" fill="#fff"/>
<rect x="999" y="570" width="1" height="4" fill="#fff"/>
<rect x="1002" y="570" width="1" height="4" fill="#fff"/>
<rect x="1005" y="570" width="1" height="4" fill="#fff"/>
<rect x="1008" y="570" width="1" height="4" fill="#fff"/>
<rect x="1014" y="570" width="1" height="8" fill="#fff"/>
<rect x="1017" y="570" width="1" height="4" fill="#fff"/>
<rect x="1020" y="570" width="1" height="4" fill="#fff"/>
<rect x="1023" y="570" width="1" height="4" fill="#fff"/>
<rect x="1026" y="570" width="1" height="4" fill="#fff"/>
<rect x="1032" y="570" width="1" height="8" fill="#fff"/>
<rect x="1035" y="570" width="1" height="4" fill="#fff"/>
<rect x="1038" y="570" width="1" height="4" fill="#fff"/>
<rect x="1041" y="570" width="1" height="4" fill="#fff"/>
<rect x="1044" y="570" width="1" height="4" fill="#fff"/>
<rect x="1050" y="570" width="1" height="8" fill="#fff"/>
<rect x="1053" y="570" width="1" height="4" fill="#fff"/>
<rect x="1056" y="570" width="1" height="4" fill="#fff"/>
<rect x="1059" y="570" width="1" height="4" fill="#fff"/>
<rect x="1062" y="570" width="1" height="4" fill="#fff"/>
<rect x="1068" y="570" width="1" height="8" fill="#fff"/>
<rect x="1071" y="570" width="1" height="4" fill="#fff"/>
<rect x="1074" y="570" width="1" height="4" fill="#fff"/>
<rect x="1077" y="570" width="1" height="4" fill="#fff"/>
<rect x="1080" y="570" width="1" height="4" fill="#fff"/>
<rect x="1086" y="570" width="1" height="8" fill="#fff"/>
<rect x="1089" y="570" width="1" height="4" fill="#fff"/>
<rect x="1092" y="570" width="1" height="4" fill="#fff"/>
<rect x="1095" y="570" width="1" height="4" fill="#fff"/>
<rect x="1098" y="570" width="1" height="4" fill="#fff"/>
<rect x="1104" y="570" width="1" height="8" fill="#fff"/>
<rect x="1107" y="570" width="1" height="4" fill="#fff"/>
<rect x="1110" y="570" width="1" height="4" fill="#fff"/>
<rect x="1113" y="570" width="1" height="4" fill="#fff"/>
<rect x="1116" y="570" width="1" height="4" fill="#fff"/>
<rect x="1122" y="570" width="1" height="8" fill="#fff"/>
<rect x="1125" y="570" width="1" height="4" fill="#fff"/>
<rect x="1128" y="570" width="1" height="4" fill="#fff"/>
<rect x="1131" y="570" width="1" height="4" fill="#fff"/>
<rect x="1134" y="570" width="1" height="4" fill="#fff"/>
<rect x="1140" y="570" width="1" height="8" fill="#fff"/>
<rect x="1143" y="570" width="1" height="4" fill="#fff"/>
<rect x="1146" y="570" width="1" height="4" fill="#fff"/>
<rect x="1149" y="570" width="1" height="4" fill="#fff"/>
<rect x="1152" y="570" width="1" height="4" fill="#fff"/>
<rect x="1158" y="570" width="1" height="8" fill="#fff"/>
<rect x="1161" y="570" width="1" height="4" fill="#fff"/>
<rect x="1164" y="570" width="1" height="4" fill="#fff"/>
<rect x="1167" y="570" width="1" height="4" fill="#fff"/>
<rect x="1170" y="570" width="1" height="4" fill="#fff"/>
<rect x="1176" y="570" width="1" height="8" fill="#fff"/>
<polyline points="995.5,473.5 1177.5,473.5" fill="none" stroke="#ff0000" stroke-width="1"/>
<polyline points="995.5,568.5 997.5,568.5 999.5,569.5 1001.5,568.5 1003.5,568.5 1005.5,569.5 1007.5,569.5 1009.5,569.5 1011.5,567.5 1013.5,568.5 1015.5,568.5 1017.5,568.5 1019.5,569.5 1021.5,569.5 1023.5,567.5 1025.5,569.5 1027.5,567.5 1029.5,568.5 1031.5,569.5 1033.5,568.5 1035.5,568.5 1037.5,567.5 1039.5,568.5 1041.5,569.5 1043.5,567.5 1045.5,568.5 1047.5,569.5 1049.5,567.5 1051.5,567.5 1053.5,569.5 1055.5,568.5 1057.5,568.5 1059.5,569.5 1061.5,568.5 1063.5,568.5 1065.5,569.5 1067.5,568.5 1069.5,568.5 1071.5,568.5 1073.5,567.5 1075.5,569.5 1077.5,568.5 1079.5,567.5 1081.5,568.5 1083.5,568.5 1085.5,568.5 1087.5,567.5 1089.5,569.5 1091.5,568.5 1093.5,568.5 1095.5,568.5 1097.5,568.5 1099.5,567.5 1101.5,569.5 1103.5,568.5 1105.5,568.5 1107.5,567.5 1109.5,567.5 1111.5,567.5 1113.5,568.5 1115.5,567.5 1117.5,569.5 1119.5,569.5 1121.5,569.5 1123.5,569.5 1125.5,569.5 1127.5,567.5 1129.5,569.5 1131.5,568.5 1133.5,568.5 1135.5,568.5 1137.5,569.5 1139.5,567.5 1141.5,568.5 1143.5,569.5 1145.5,567.5 1147.5,567.5 1149.5,567.5 1151.5,567.5 1153.5,569.5 1155.5,569.5 1157.5,568.5 1159.5,567.5 1161.5,567.5 1163.5,569.5 1165.5,567.5 1167.5,568.5 1169.5,568.5 1171.5,568.5 1173.5,569.5 1175.5,568.5 1177.5,567.5" fill="none" stroke="#98f5ff" stroke-width="1"/>
<polyline points="995.5,568.5 996.5,567.5 997.5,565.5 998.5,569.5 999.5,569.5 1000.5,565.5 1001.5,569.5 1002.5,567.5 1003.5,564.5 1004.5,564.5 1005.5,566.5 1006.5,569.5 1007.5,564.5 1008.5,568.5 1009.5,567.5 1010.5,565.5 1011.5,569.5 1012.5,565.5 1013.5,565.5 1014.5,564.5 1015.5,569.5 1016.5,566.5 1017.5,564.5 1018.5,569.5 1019.5,567.5 1020.5,567.5 1021.5,564.5 1022.5,565.5 1023.5,566.5 1024.5,569.5 1025.5,568.5 1026.5,564.5 1027.5,568.5 1028.5,564.5 1029.5,566.5 1030.5,566.5 1031.5,569.5 1032.5,568.5 1033.5,569.5 1034.5,568.5 1035.5,569.5 1036.5,564.5 1037.5,564.5 1038.5,569.5 1039.5,566.5 1040.5,568.5 1041.5,568.5 1042.5,565.5 1043.5,567.5 1044.5,568.5 1045.5,566.5 1046.5,569.5 1047.5,566.5 1048.5,568.5 1049.5,568.5 1050.5,564.5 1051.5,567.5 1052.5,566.5 1053.5,566.5 1054.5,569.5 1055.5,569.5 1056.5,568.5 1057.5,569.5 1058.5,567.5 1059.5,567.5 1060.5,569.5 1061.5,566.5 1062.5,569.5 1063.5,569.5 1064.5,569.5 1065.5,567.5 1066.5,565.5 1067.5,567.5 1068.5,569.5 1069.5,568.5 1070.5,566.5 1071.5,565.5 1072.5,567.5 1073.5,566.5 1074.5,566.5 1075.5,567.5 1076.5,567.5 1077.5,566.5 1078.5,569.5 1079.5,567.5 1080.5,568.5 1081.5,568.5 1082.5,567.5 1083.5,566.5 1084.5,567.5 1085.5,566.5 1086.5,564.5 1087.5,569.5 1088.5,564.5 1089.5,569.5 1090.5,565.5 1091.5,565.5 1092.5,566.5 1093.5,568.5 1094.5,566.5 1095.5,568.5 1096.5,569.5 1097.5,566.5 1098.5,566.5 1099.5,565.5 1100.5,568.5 1101.5,569.5 1102.5,568.5 1103.5,569.5 1104.5,568.5 1105.5,565.5 1106.5,566.5 1107.5,565.5 1108.5,564.5 1109.5,569.5 1110.5,569.5 1111.5,568.5 1112.5,568.5 1113.5,564.5 1114.5,568.5 1115.5,569.5 1116.5,565.5 1117.5,564.5 1118.5,569.5 1119.5,564.5 1120.5,564.5 1121.5,567.5 1122.5,564.5 1123.5,568.5 1124.5,565.5 1125.5,566.5 1126.5,565.5 1127.5,564.5 1128.5,566.5 1129.5,565.5 1130.5,566.5 1131.5,566.5 1132.5,568.5 1133.5,569.5 1134.5,569.5 1135.5,565.5 1136.5,566.5 1137.5,568.5 1138.5,568.5 1139.5,568.5 1140.5,567.5 1141.5,565.5 1142.5,565.5 1143.5,564.5 1144.5,568.5 1145.5,568.5 1146.5,564.5 1147.5,569.5 1148.5,569.5 1149.5,568.5 1150.5,565.5 1151.5,568.5 1152.5,566.5 1153.5,566.5 1154.5,568.5 1155.5,568.5 1156.5,569.5 1157.5,568.5 1158.5,569.5 1159.5,569.5 1160.5,569.5 1161.5,568.5 1162.5,569.5 1163.5,566.5 1164.5,566.5 1165.5,568.5 1166.5,568.5 1167.5,568.5 1168.5,569.5 1169.5,569.5 1170.5,564.5 1171.5,568.5 1172.5,569.5 1173.5,568.5 1174.5,567.5 1175.5,567.5 1176.5,568.5 1177.5,567.5" fill="none" stroke="#00ff00" stroke-width="1"/>
<polyline points="995.5,540.5 996.5,539.5 997.5,542.5 998.5,542.5 999.5,537.5 1000.5,538.5 1001.5,537.5 1002.5,540.5 1003.5,540.5 1004.5,537.5 1005.5,537.5 1006.5,541.5 1007.5,541.5 1008.5,540.5 1009.5,537.5 1010.5,539.5 1011.5,537.5 1012.5,540.5 1013.5,542.5 1014.5,541.5 1015.5,539.5 1016.5,537.5 1017.5,540.5 1018.5,541.5 1019.5,539.5 1020.5,539.5 1021.5,541.5 1022.5,538.5 1023.5,538.5 1024.5,537.5 1025.5,540.5 1026.5,537.5 1027.5,537.5 1028.5,539.5 1029.5,538.5 1030.5,541.5 1031.5,541.5 1032.5,542.5 1033.5,539.5 1034.5,539.5 1035.5,540.5 1036.5,542.5 1037.5,537.5 1038.5,540.5 1039.5,540.5 1040.5,542.5 1041.5,541.5 1042.5,541.5 1043.5,538.5 1044.5,540.5 1045.5,541.5 1046.5,539.5 1047.5,541.5 1048.5,540.5 1049.5,537.5 1050.5,541.5 1051.5,541.5 1052.5,542.5 1053.5,541.5 1054.5,537.5 1055.5,537.5 1056.5,540.5 1057.5,540.5 1058.5,538.5 1059.5,541.5 1060.5,541.5 1061.5,542.5 1062.5,539.5 1063.5,541.5 1064.5,541.5 1065.5,540.5 1066.5,541.5 1067.5,538.5 1068.5,540.5 1069.5,541.5 1070.5,540.5 1071.5,537.5 1072.5,542.5 1073.5,537.5 1074.5,539.5 1075.5,542.5 1076.5,540.5 1077.5,540.5 1078.5,541.5 1079.5,541.5 1080.5,542.5 1081.5,539.5 1082.5,541.5 1083.5,540.5 1084.5,541.5 1085.5,542.5 1086.5,542.5 1087.5,538.5 1088.5,540.5 1089.5,541.5 1090.5,537.5 1091.5,540.5 1092.5,541.5 1093.5,538.5 1094.5,542.5 1095.5,539.5 1096.5,541.5 1097.5,539.5 1098.5,541.5 1099.5,540.5 1100.5,539.5 1101.5,537.5 1102.5,539.5 1103.5,538.5 1104.5,541.5 1105.5,539.5 1106.5,539.5 1107.5,537.5 1108.5,541.5 1109.5,539.5 1110.5,539.5 1111.5,540.5 1112.5,541.5 1113.5,541.5 1114.5,538.5 1115.5,541.5 1116.5,542.5 1117.5,541.5 1118.5,540.5 1119.5,541.5 1120.5,542.5 1121.5,541.5 1122.5,540.5 1123.5,539.5 1124.5,542.5 1125.5,537.5 1126.5,540.5 1127.5,542.5 1128.5,542.5 1129.5,539.5 1130.5,540.5 1131.5,540.5 1132.5,540.5 1133.5,537.5 1134.5,540.5 1135.5,537.5 1136.5,542.5 1137.5,538.5 1138.5,540.5 1139.5,538.5 1140.5,539.5 1141.5,542.5 1142.5,538.5 1143.5,542.5 1144.5,539.5 1145.5,537.5 1146.5,538.5 1147.5,539.5 1148.5,539.5 1149.5,538.5 1150.5,541.5 1151.5,541.5 1152.5,539.5 1153.5,542.5 1154.5,539.5 1155.5,540.5 1156.5,538.5 1157.5,540.5 1158.5,541.5 1159.5,537.5 1160.5,541.5 1161.5,541.5 1162.5,542.5 1163.5,540.5 1164.5,538.5 1165.5,542.5 1166.5,542.5 1167.5,537.5 1168.5,540.5 1169.5,539.5 1170.5,538.5 1171.5,541.5 1172.5,540.5 1173.5,540.5 1174.5,539.5 1175.5,542.5 1176.5,540.5 1177.5,542.5" fill="none" stroke="#ffff00" stroke-width="1"/>
<rect x="1111" y="469" width="1" height="101" fill="#fff"/>
<text x="997" y="587" font-size="10" fill="#fff" text-anchor="middle">-5:45</text>
<rect x="1181" y="459" width="46" height="17" fill="#ff0000"/>
<polygon points="1181,459 1227,459 1225,461 1183,461 1183,474 1181,476" fill="#ff8080"/>
<polygon points="1227,459 1227,476 1181,476 1183,474 1225,474 1225,461" fill="#8b0000"/>
<svg x="1183" y="461" width="42" height="13" overflow="hidden">
<text x="1" y="9" font-size="11" fill="#000" textLength="42.3" lengthAdjust="spacingAndGlyphs" font-family="Liberation Mono" stroke="#000" stroke-width="0.25">CFI6711A</text>
</svg>
<rect x="1227" y="459" width="46" height="17" fill="#5f9ea0"/>
<rect x="1227" y="459" width="46" height="1" fill="#b0e0e6"/>
<rect x="1227" y="459" width="1" height="17" fill="#b0e0e6"/>
<rect x="1228" y="460" width="44" height="1" fill="#2f4f4f"/>
<rect x="1228" y="460" width="1" height="15" fill="#2f4f4f"/>
<rect x="1228" y="474" width="44" height="1" fill="#b0e0e6"/>
<rect x="1271" y="460" width="1" height="15" fill="#b0e0e6"/>
<rect x="1227" y="475" width="46" height="1" fill="#2f4f4f"/>
<rect x="1272" y="459" width="1" height="17" fill="#2f4f4f"/>
<svg x="1229" y="461" width="42" height="13" overflow="hidden">
<text x="1" y="9" font-size="10" fill="#fff" textLength="27.5" lengthAdjust="spacingAndGlyphs">19.140</text>
</svg>
<rect x="1181" y="476" width="46" height="17" fill="#00ff00"/>
<polygon points="1181,476 1227,476 1225,478 1183,478 1183,491 1181,493" fill="#80ff80"/>
<polygon points="1227,476 1227,493 1181,493 1183,491 1225,491 1225,478" fill="#008b00"/>
<svg x="1183" y="478" width="42" height="13" overflow="hidden">
<text x="1" y="9" font-size="11" fill="#000" textLength="36.9" lengthAdjust="spacingAndGlyphs" font-family="Liberation Mono" stroke="#000" stroke-width="0.25">CFI6010</text>
</svg>
<rect x="1227" y="476" width="46" height="17" fill="#5f9ea0"/>
<rect x="1227" y="476" width="46" height="1" fill="#b0e0e6"/>
<rect x="1227" y="476" width="1" height="17" fill="#b0e0e6"/>
<rect x="1228" y="477" width="44" height="1" fill="#2f4f4f"/>
<rect x="1228" y="477" width="1" height="15" fill="#2f4f4f"/>
<rect x="1228" y="491" width="44" height="1" fill="#b0e0e6"/>
<rect x="1271" y="477" width="1" height="15" fill="#b0e0e6"/>
<rect x="1227" y="492" width="46" height="1" fill="#2f4f4f"/>
<rect x="1272" y="476" width="1" height="17" fill="#2f4f4f"/>
<svg x="1229" y="478" width="42" height="13" overflow="hidden">
<text x="1" y="9" font-size="10" fill="#fff" textLength="22.5" lengthAdjust="spacingAndGlyphs">0.000</text>
</svg>
<rect x="1181" y="493" width="46" height="17" fill="#ffff00"/>
<polygon points="1181,493 1227,493 1225,495 1183,495 1183,508 1181,510" fill="#ffff80"/>
<polygon points="1227,493 1227,510 1181,510 1183,508 1225,508 1225,495" fill="#8b8b00"/>
<svg x="1183" y="495" width="42" height="13" overflow="hidden">
<text x="1" y="9" font-size="11" fill="#000" textLength="36.9" lengthAdjust="spacingAndGlyphs" font-family="Liberation Mono" stroke="#000" stroke-width="0.25">CFI60DL</text>
</svg>
<rect x="1227" y="493" width="46" height="17" fill="#5f9ea0"/>
<rect x="1227" y="493" width="46" height="1" fill="#b0e0e6"/>
<rect x="1227" y="493" width="1" height="17" fill="#b0e0e6"/>
<rect x="1228" y="494" width="44" height="1" fill="#2f4f4f"/>
<rect x="1228" y="494" width="1" height="15" fill="#2f4f4f"/>
<rect x="1228" y="508" width="44" height="1" fill="#b0e0e6"/>
<rect x="1271" y="494" width="1" height="15" fill="#b0e0e6"/>
<rect x="1227" y="509" width="46" height="1" fill="#2f4f4f"/>
<rect x="1272" y="493" width="1" height="17" fill="#2f4f4f"/>
<svg x="1229" y="495" width="42" height="13" overflow="hidden">
<text x="1" y="9" font-size="10" fill="#fff" textLength="22.5" lengthAdjust="spacingAndGlyphs">5.330</text>
</svg>
<rect x="1181" y="510" width="46" height="17" fill="#98f5ff"/>
<polygon points="1181,510 1227,510 1225,512 1183,512 1183,525 1181,527" fill="#d0faff"/>
<polygon points="1227,510 1227,527 1181,527 1183,525 1225,525 1225,512" fill="#53868b"/>
<svg x="1183" y="512" width="42" height="13" overflow="hidden">
<text x="1" y="9" font-size="11" fill="#000" textLength="42.3" lengthAdjust="spacingAndGlyphs" font-family="Liberation Mono" stroke="#000" stroke-width="0.25">CFI6731A</text>
</svg>
<rect x="1227" y="510" width="46" height="17" fill="#5f9ea0"/>
<rect x="1227" y="510" width="46" height="1" fill="#b0e0e6"/>
<rect x="1227" y="510" width="1" height="17" fill="#b0e0e6"/>
<rect x="1228" y="511" width="44" height="1" fill="#2f4f4f"/>
<rect x="1228" y="511" width="1" height="15" fill="#2f4f4f"/>
<rect x="1228" y="525" width="44" height="1" fill="#b0e0e6"/>
<rect x="1271" y="511" width="1" height="15" fill="#b0e0e6"/>
<rect x="1227" y="526" width="46" height="1" fill="#2f4f4f"/>
<rect x="1272" y="510" width="1" height="17" fill="#2f4f4f"/>
<svg x="1229" y="512" width="42" height="13" overflow="hidden">
<text x="1" y="9" font-size="10" fill="#fff" textLength="22.5" lengthAdjust="spacingAndGlyphs">0.380</text>
</svg>
<rect x="685" y="0" width="342" height="992" fill="#c0c0c0"/>
<rect x="686" y="1" width="340" height="1" fill="#fff"/>
<rect x="686" y="1" width="1" height="990" fill="#fff"/>
<rect x="1026" y="0" width="1" height="992" fill="#000"/>
<rect x="685" y="991" width="342" height="1" fill="#000"/>
<rect x="1025" y="1" width="1" height="990" fill="#a8a8a8"/>
<rect x="686" y="990" width="340" height="1" fill="#a8a8a8"/>
<rect x="690" y="5" width="332" height="17" fill="#808080"/>
<rect x="693" y="7" width="16" height="14" fill="#c0c0c0"/>
<rect x="693" y="7" width="16" height="1" fill="#fff"/>
<rect x="693" y="7" width="1" height="14" fill="#fff"/>
<rect x="708" y="7" width="1" height="14" fill="#000"/>
<rect x="693" y="20" width="16" height="1" fill="#000"/>
<rect x="707" y="8" width="1" height="12" fill="#888"/>
<rect x="694" y="19" width="14" height="1" fill="#888"/>
<rect x="697" y="13" width="9" height="3" fill="#000"/>
<rect x="986" y="7" width="16" height="14" fill="#c0c0c0"/>
<rect x="986" y="7" width="16" height="1" fill="#fff"/>
<rect x="986" y="7" width="1" height="14" fill="#fff"/>
<rect x="1001" y="7" width="1" height="14" fill="#000"/>
<rect x="986" y="20" width="16" height="1" fill="#000"/>
<rect x="1000" y="8" width="1" height="12" fill="#888"/>
<rect x="987" y="19" width="14" height="1" fill="#888"/>
<rect x="991" y="17" width="7" height="2" fill="#000"/>
<rect x="1004" y="7" width="16" height="14" fill="#c0c0c0"/>
<rect x="1004" y="7" width="16" height="1" fill="#fff"/>
<rect x="1004" y="7" width="1" height="14" fill="#fff"/>
<rect x="1019" y="7" width="1" height="14" fill="#000"/>
<rect x="1004" y="20" width="16" height="1" fill="#000"/>
<rect x="1018" y="8" width="1" height="12" fill="#888"/>
<rect x="1005" y="19" width="14" height="1" fill="#888"/>
<rect x="1008" y="10" width="9" height="2" fill="#000"/>
<rect x="1008" y="10" width="1" height="9" fill="#000"/>
<rect x="1016" y="10" width="1" height="9" fill="#000"/>
<rect x="1008" y="18" width="9" height="1" fill="#000"/>
<text x="711.5" y="18" font-size="12" font-weight="bold" fill="#000">chart_cryo</text>
<rect x="690" y="22" width="332" height="965" fill="#5f9ea0"/>
<rect x="690" y="22" width="332" height="30" fill="#5f9ea0"/>
<polygon points="690,22 1022,22 1020,24 692,24 692,50 690,52" fill="#b0e0e6"/>
<polygon points="1022,22 1022,52 690,52 692,50 1020,50 1020,24" fill="#2f4f4f"/>
<text x="699.5" y="41" font-size="12" font-weight="bold" fill="#fff" textLength="20" lengthAdjust="spacingAndGlyphs">File</text>
<rect x="700" y="42" width="7" height="2" fill="#fff"/>
<text x="735.5" y="41" font-size="12" font-weight="bold" fill="#fff" textLength="45.5" lengthAdjust="spacingAndGlyphs">Options</text>
<rect x="736" y="42" width="11" height="2" fill="#fff"/>
<text x="985.5" y="41" font-size="12" font-weight="bold" fill="#fff" textLength="26" lengthAdjust="spacingAndGlyphs">Help</text>
<rect x="986" y="42" width="9" height="2" fill="#fff"/>
<rect x="690" y="56" width="332" height="179" fill="#5f9ea0"/>
<rect x="690" y="56" width="332" height="1" fill="#2f4f4f"/>
<rect x="690" y="56" width="1" height="179" fill="#2f4f4f"/>
<rect x="691" y="57" width="330" height="1" fill="#b0e0e6"/>
<rect x="691" y="57" width="1" height="177" fill="#b0e0e6"/>
<rect x="691" y="233" width="330" height="1" fill="#2f4f4f"/>
<rect x="1020" y="57" width="1" height="177" fill="#2f4f4f"/>
<rect x="690" y="234" width="332" height="1" fill="#b0e0e6"/>
<rect x="1021" y="56" width="1" height="179" fill="#b0e0e6"/>
<text x="855.5" y="72" font-size="12" font-weight="bold" fill="#fff" text-anchor="middle" textLength="133.0" lengthAdjust="spacingAndGlyphs">Coolant_Temperatures</text>
<rect x="743" y="88" width="181" height="101" fill="#000"/>
<rect x="743" y="88" width="1" height="101" fill="#a3a3a3"/>
<rect x="761" y="88" width="1" height="101" fill="#a3a3a3"/>
<rect x="779" y="88" width="1" height="101" fill="#a3a3a3"/>
<rect x="797" y="88" width="1" height="101" fill="#a3a3a3"/>
<rect x="815" y="88" width="1" height="101" fill="#a3a3a3"/>
<rect x="833" y="88" width="1" height="101" fill="#a3a3a3"/>
<rect x="851" y="88" width="1" height="101" fill="#a3a3a3"/>
<rect x="869" y="88" width="1" height="101" fill="#a3a3a3"/>
<rect x="887" y="88" width="1" height="101" fill="#a3a3a3"/>
<rect x="905" y="88" width="1" height="101" fill="#a3a3a3"/>
<rect x="923" y="88" width="1" height="101" fill="#a3a3a3"/>
<rect x="743" y="88" width="181" height="1" fill="#a3a3a3"/>
<rect x="743" y="108" width="181" height="1" fill="#a3a3a3"/>
<rect x="743" y="128" width="181" height="1" fill="#a3a3a3"/>
<rect x="743" y="148" width="181" height="1" fill="#a3a3a3"/>
<rect x="743" y="168" width="181" height="1" fill="#a3a3a3"/>
<rect x="743" y="188" width="181" height="1" fill="#a3a3a3"/>
<rect x="735" y="88" width="8" height="1" fill="#fff"/>
<rect x="739" y="92" width="4" height="1" fill="#fff"/>
<rect x="739" y="96" width="4" height="1" fill="#fff"/>
<rect x="739" y="100" width="4" height="1" fill="#fff"/>
<rect x="739" y="104" width="4" height="1" fill="#fff"/>
<rect x="735" y="108" width="8" height="1" fill="#fff"/>
<rect x="739" y="112" width="4" height="1" fill="#fff"/>
<rect x="739" y="116" width="4" height="1" fill="#fff"/>
<rect x="739" y="120" width="4" height="1" fill="#fff"/>
<rect x="739" y="124" width="4" height="1" fill="#fff"/>
<rect x="735" y="128" width="8" height="1" fill="#fff"/>
<rect x="739" y="132" width="4" height="1" fill="#fff"/>
<rect x="739" y="136" width="4" height="1" fill="#fff"/>
<rect x="739" y="140" width="4" height="1" fill="#fff"/>
<rect x="739" y="144" width="4" height="1" fill="#fff"/>
<rect x="735" y="148" width="8" height="1" fill="#fff"/>
<rect x="739" y="152" width="4" height="1" fill="#fff"/>
<rect x="739" y="156" width="4" height="1" fill="#fff"/>
<rect x="739" y="160" width="4" height="1" fill="#fff"/>
<rect x="739" y="164" width="4" height="1" fill="#fff"/>
<rect x="735" y="168" width="8" height="1" fill="#fff"/>
<rect x="739" y="172" width="4" height="1" fill="#fff"/>
<rect x="739" y="176" width="4" height="1" fill="#fff"/>
<rect x="739" y="180" width="4" height="1" fill="#fff"/>
<rect x="739" y="184" width="4" height="1" fill="#fff"/>
<rect x="735" y="188" width="8" height="1" fill="#fff"/>
<rect x="743" y="189" width="1" height="8" fill="#fff"/>
<rect x="746" y="189" width="1" height="4" fill="#fff"/>
<rect x="749" y="189" width="1" height="4" fill="#fff"/>
<rect x="752" y="189" width="1" height="4" fill="#fff"/>
<rect x="755" y="189" width="1" height="4" fill="#fff"/>
<rect x="761" y="189" width="1" height="8" fill="#fff"/>
<rect x="764" y="189" width="1" height="4" fill="#fff"/>
<rect x="767" y="189" width="1" height="4" fill="#fff"/>
<rect x="770" y="189" width="1" height="4" fill="#fff"/>
<rect x="773" y="189" width="1" height="4" fill="#fff"/>
<rect x="779" y="189" width="1" height="8" fill="#fff"/>
<rect x="782" y="189" width="1" height="4" fill="#fff"/>
<rect x="785" y="189" width="1" height="4" fill="#fff"/>
<rect x="788" y="189" width="1" height="4" fill="#fff"/>
<rect x="791" y="189" width="1" height="4" fill="#fff"/>
<rect x="797" y="189" width="1" height="8" fill="#fff"/>
<rect x="800" y="189" width="1" height="4" fill="#fff"/>
<rect x="803" y="189" width="1" height="4" fill="#fff"/>
<rect x="806" y="189" width="1" height="4" fill="#fff"/>
<rect x="809" y="189" width="1" height="4" fill="#fff"/>
<rect x="815" y="189" width="1" height="8" fill="#fff"/>
<rect x="818" y="189" width="1" height="4" fill="#fff"/>
<rect x="821" y="189" width="1" height="4" fill="#fff"/>
<rect x="824" y="189" width="1" height="4" fill="#fff"/>
<rect x="827" y="189" width="1" height="4" fill="#fff"/>
<rect x="833" y="189" width="1" height="8" fill="#fff"/>
<rect x="836" y="189" width="1" height="4" fill="#fff"/>
<rect x="839" y="189" width="1" height="4" fill="#fff"/>
<rect x="842" y="189" width="1" height="4" fill="#fff"/>
<rect x="845" y="189" width="1" height="4" fill="#fff"/>
<rect x="851" y="189" width="1" height="8" fill="#fff"/>
<rect x="854" y="189" width="1" height="4" fill="#fff"/>
<rect x="857" y="189" width="1" height="4" fill="#fff"/>
<rect x="860" y="189" width="1" height="4" fill="#fff"/>
<rect x="863" y="189" width="1" height="4" fill="#fff"/>
<rect x="869" y="189" width="1" height="8" fill="#fff"/>
<rect x="872" y="189" width="1" height="4" fill="#fff"/>
<rect x="875" y="189" width="1" height="4" fill="#fff"/>
<rect x="878" y="189" width="1" height="4" fill="#fff"/>
<rect x="881" y="189" width="1" height="4" fill="#fff"/>
<rect x="887" y="189" width="1" height="8" fill="#fff"/>
<rect x="890" y="189" width="1" height="4" fill="#fff"/>
<rect x="893" y="189" width="1" height="4" fill="#fff"/>
<rect x="896" y="189" width="1" height="4" fill="#fff"/>
<rect x="899" y="189" width="1" height="4" fill="#fff"/>
<rect x="905" y="189" width="1" height="8" fill="#fff"/>
<rect x="908" y="189" width="1" height="4" fill="#fff"/>
<rect x="911" y="189" width="1" height="4" fill="#fff"/>
<rect x="914" y="189" width="1" height="4" fill="#fff"/>
<rect x="917" y="189" width="1" height="4" fill="#fff"/>
<rect x="923" y="189" width="1" height="8" fill="#fff"/>
<polyline points="742.5,88.5 924.5,88.5" fill="none" stroke="#ff1493" stroke-width="1"/>
<polyline points="742.5,111.5 764.5,111.5 766.5,109.5 782.5,109.5 783.5,110.5 857.5,110.5" fill="none" stroke="#ffa500" stroke-width="1"/>
<polyline points="859.5,111.5 924.5,111.5" fill="none" stroke="#ffa500" stroke-width="1"/>
<polyline points="742.5,122.5 756.5,122.5 757.5,120.5 773.5,120.5 774.5,121.5 857.5,121.5" fill="none" stroke="#00ff00" stroke-width="1"/>
<polyline points="859.5,122.5 924.5,122.5" fill="none" stroke="#00ff00" stroke-width="1"/>
<polyline points="742.5,138.5 924.5,138.5" fill="none" stroke="#ee82ee" stroke-width="1"/>
<polyline points="742.5,140.5 924.5,140.5" fill="none" stroke="#ff0000" stroke-width="1"/>
<rect x="858" y="88" width="1" height="101" fill="#fff"/>
<text x="732" y="92" font-size="10" fill="#fff" text-anchor="end" textLength="9.5" lengthAdjust="spacingAndGlyphs">10</text>
<text x="732" y="192" font-size="10" fill="#fff" text-anchor="end" textLength="4.7" lengthAdjust="spacingAndGlyphs">0</text>
<text x="744" y="206" font-size="10" fill="#fff" text-anchor="middle">-5:45</text>
<rect x="928" y="78" width="46" height="17" fill="#ff0000"/>
<polygon points="928,78 974,78 972,80 930,80 930,93 928,95" fill="#ff8080"/>
<polygon points="974,78 974,95 928,95 930,93 972,93 972,80" fill="#8b0000"/>
<svg x="930" y="80" width="42" height="13" overflow="hidden">
<text x="1" y="9" font-size="11" fill="#000" textLength="20.9" lengthAdjust="spacingAndGlyphs" font-family="Liberation Mono" stroke="#000" stroke-width="0.25">DT86</text>
</svg>
<rect x="974" y="78" width="46" height="17" fill="#5f9ea0"/>
<rect x="974" y="78" width="46" height="1" fill="#b0e0e6"/>
<rect x="974" y="78" width="1" height="17" fill="#b0e0e6"/>
<rect x="975" y="79" width="44" height="1" fill="#2f4f4f"/>
<rect x="975" y="79" width="1" height="15" fill="#2f4f4f"/>
<rect x="975" y="93" width="44" height="1" fill="#b0e0e6"/>
<rect x="1018" y="79" width="1" height="15" fill="#b0e0e6"/>
<rect x="974" y="94" width="46" height="1" fill="#2f4f4f"/>
<rect x="1019" y="78" width="1" height="17" fill="#2f4f4f"/>
<svg x="976" y="80" width="42" height="13" overflow="hidden">
<text x="1" y="9" font-size="10" fill="#fff" textLength="12.5" lengthAdjust="spacingAndGlyphs">4.8</text>
</svg>
<rect x="928" y="95" width="46" height="17" fill="#00ff00"/>
<polygon points="928,95 974,95 972,97 930,97 930,110 928,112" fill="#80ff80"/>
<polygon points="974,95 974,112 928,112 930,110 972,110 972,97" fill="#008b00"/>
<svg x="930" y="97" width="42" height="13" overflow="hidden">
<text x="1" y="9" font-size="11" fill="#000" textLength="20.9" lengthAdjust="spacingAndGlyphs" font-family="Liberation Mono" stroke="#000" stroke-width="0.25">DT91</text>
</svg>
<rect x="974" y="95" width="46" height="17" fill="#5f9ea0"/>
<rect x="974" y="95" width="46" height="1" fill="#b0e0e6"/>
<rect x="974" y="95" width="1" height="17" fill="#b0e0e6"/>
<rect x="975" y="96" width="44" height="1" fill="#2f4f4f"/>
<rect x="975" y="96" width="1" height="15" fill="#2f4f4f"/>
<rect x="975" y="110" width="44" height="1" fill="#b0e0e6"/>
<rect x="1018" y="96" width="1" height="15" fill="#b0e0e6"/>
<rect x="974" y="111" width="46" height="1" fill="#2f4f4f"/>
<rect x="1019" y="95" width="1" height="17" fill="#2f4f4f"/>
<svg x="976" y="97" width="42" height="13" overflow="hidden">
<text x="1" y="9" font-size="10" fill="#fff" textLength="12.5" lengthAdjust="spacingAndGlyphs">6.7</text>
</svg>
<rect x="928" y="112" width="46" height="17" fill="#ffff00"/>
<polygon points="928,112 974,112 972,114 930,114 930,127 928,129" fill="#ffff80"/>
<polygon points="974,112 974,129 928,129 930,127 972,127 972,114" fill="#8b8b00"/>
<svg x="930" y="114" width="42" height="13" overflow="hidden">
<text x="1" y="9" font-size="11" fill="#000" textLength="20.9" lengthAdjust="spacingAndGlyphs" font-family="Liberation Mono" stroke="#000" stroke-width="0.25">DT87</text>
</svg>
<rect x="974" y="112" width="46" height="17" fill="#5f9ea0"/>
<rect x="974" y="112" width="46" height="1" fill="#b0e0e6"/>
<rect x="974" y="112" width="1" height="17" fill="#b0e0e6"/>
<rect x="975" y="113" width="44" height="1" fill="#2f4f4f"/>
<rect x="975" y="113" width="1" height="15" fill="#2f4f4f"/>
<rect x="975" y="127" width="44" height="1" fill="#b0e0e6"/>
<rect x="1018" y="113" width="1" height="15" fill="#b0e0e6"/>
<rect x="974" y="128" width="46" height="1" fill="#2f4f4f"/>
<rect x="1019" y="112" width="1" height="17" fill="#2f4f4f"/>
<svg x="976" y="114" width="42" height="13" overflow="hidden">
<text x="1" y="9" font-size="10" fill="#fff" textLength="17.5" lengthAdjust="spacingAndGlyphs">12.8</text>
</svg>
<rect x="928" y="129" width="46" height="17" fill="#98f5ff"/>
<polygon points="928,129 974,129 972,131 930,131 930,144 928,146" fill="#d0faff"/>
<polygon points="974,129 974,146 928,146 930,144 972,144 972,131" fill="#53868b"/>
<svg x="930" y="131" width="42" height="13" overflow="hidden">
<text x="1" y="9" font-size="11" fill="#000" textLength="20.9" lengthAdjust="spacingAndGlyphs" font-family="Liberation Mono" stroke="#000" stroke-width="0.25">DT90</text>
</svg>
<rect x="974" y="129" width="46" height="17" fill="#5f9ea0"/>
<rect x="974" y="129" width="46" height="1" fill="#b0e0e6"/>
<rect x="974" y="129" width="1" height="17" fill="#b0e0e6"/>
<rect x="975" y="130" width="44" height="1" fill="#2f4f4f"/>
<rect x="975" y="130" width="1" height="15" fill="#2f4f4f"/>
<rect x="975" y="144" width="44" height="1" fill="#b0e0e6"/>
<rect x="1018" y="130" width="1" height="15" fill="#b0e0e6"/>
<rect x="974" y="145" width="46" height="1" fill="#2f4f4f"/>
<rect x="1019" y="129" width="1" height="17" fill="#2f4f4f"/>
<svg x="976" y="131" width="42" height="13" overflow="hidden">
<text x="1" y="9" font-size="10" fill="#fff" textLength="22.5" lengthAdjust="spacingAndGlyphs">120.0</text>
</svg>
<rect x="928" y="146" width="46" height="17" fill="#ee82ee"/>
<polygon points="928,146 974,146 972,148 930,148 930,161 928,163" fill="#f8c0f8"/>
<polygon points="974,146 974,163 928,163 930,161 972,161 972,148" fill="#8b478b"/>
<svg x="930" y="148" width="42" height="13" overflow="hidden">
<text x="1" y="9" font-size="11" fill="#000" textLength="20.9" lengthAdjust="spacingAndGlyphs" font-family="Liberation Mono" stroke="#000" stroke-width="0.25">DT88</text>
</svg>
<rect x="974" y="146" width="46" height="17" fill="#5f9ea0"/>
<rect x="974" y="146" width="46" height="1" fill="#b0e0e6"/>
<rect x="974" y="146" width="1" height="17" fill="#b0e0e6"/>
<rect x="975" y="147" width="44" height="1" fill="#2f4f4f"/>
<rect x="975" y="147" width="1" height="15" fill="#2f4f4f"/>
<rect x="975" y="161" width="44" height="1" fill="#b0e0e6"/>
<rect x="1018" y="147" width="1" height="15" fill="#b0e0e6"/>
<rect x="974" y="162" width="46" height="1" fill="#2f4f4f"/>
<rect x="1019" y="146" width="1" height="17" fill="#2f4f4f"/>
<svg x="976" y="148" width="42" height="13" overflow="hidden">
<text x="1" y="9" font-size="10" fill="#fff" textLength="12.5" lengthAdjust="spacingAndGlyphs">5.0</text>
</svg>
<rect x="928" y="163" width="46" height="17" fill="#ffa500"/>
<polygon points="928,163 974,163 972,165 930,165 930,178 928,180" fill="#ffd280"/>
<polygon points="974,163 974,180 928,180 930,178 972,178 972,165" fill="#8b5a00"/>
<svg x="930" y="165" width="42" height="13" overflow="hidden">
<text x="1" y="9" font-size="11" fill="#000" textLength="20.9" lengthAdjust="spacingAndGlyphs" font-family="Liberation Mono" stroke="#000" stroke-width="0.25">DT89</text>
</svg>
<rect x="974" y="163" width="46" height="17" fill="#5f9ea0"/>
<rect x="974" y="163" width="46" height="1" fill="#b0e0e6"/>
<rect x="974" y="163" width="1" height="17" fill="#b0e0e6"/>
<rect x="975" y="164" width="44" height="1" fill="#2f4f4f"/>
<rect x="975" y="164" width="1" height="15" fill="#2f4f4f"/>
<rect x="975" y="178" width="44" height="1" fill="#b0e0e6"/>
<rect x="1018" y="164" width="1" height="15" fill="#b0e0e6"/>
<rect x="974" y="179" width="46" height="1" fill="#2f4f4f"/>
<rect x="1019" y="163" width="1" height="17" fill="#2f4f4f"/>
<svg x="976" y="165" width="42" height="13" overflow="hidden">
<text x="1" y="9" font-size="10" fill="#fff" textLength="12.5" lengthAdjust="spacingAndGlyphs">7.8</text>
</svg>
<rect x="928" y="180" width="46" height="17" fill="#ff1493"/>
<polygon points="928,180 974,180 972,182 930,182 930,195 928,197" fill="#ff8ac8"/>
<polygon points="974,180 974,197 928,197 930,195 972,195 972,182" fill="#8b0a50"/>
<svg x="930" y="182" width="42" height="13" overflow="hidden">
<text x="1" y="9" font-size="11" fill="#000" textLength="20.9" lengthAdjust="spacingAndGlyphs" font-family="Liberation Mono" stroke="#000" stroke-width="0.25">DT84</text>
</svg>
<rect x="974" y="180" width="46" height="17" fill="#5f9ea0"/>
<rect x="974" y="180" width="46" height="1" fill="#b0e0e6"/>
<rect x="974" y="180" width="1" height="17" fill="#b0e0e6"/>
<rect x="975" y="181" width="44" height="1" fill="#2f4f4f"/>
<rect x="975" y="181" width="1" height="15" fill="#2f4f4f"/>
<rect x="975" y="195" width="44" height="1" fill="#b0e0e6"/>
<rect x="1018" y="181" width="1" height="15" fill="#b0e0e6"/>
<rect x="974" y="196" width="46" height="1" fill="#2f4f4f"/>
<rect x="1019" y="180" width="1" height="17" fill="#2f4f4f"/>
<svg x="976" y="182" width="42" height="13" overflow="hidden">
<text x="1" y="9" font-size="10" fill="#fff" textLength="22.5" lengthAdjust="spacingAndGlyphs">240.0</text>
</svg>
<rect x="690" y="243" width="332" height="179" fill="#5f9ea0"/>
<rect x="690" y="243" width="332" height="1" fill="#2f4f4f"/>
<rect x="690" y="243" width="1" height="179" fill="#2f4f4f"/>
<rect x="691" y="244" width="330" height="1" fill="#b0e0e6"/>
<rect x="691" y="244" width="1" height="177" fill="#b0e0e6"/>
<rect x="691" y="420" width="330" height="1" fill="#2f4f4f"/>
<rect x="1020" y="244" width="1" height="177" fill="#2f4f4f"/>
<rect x="690" y="421" width="332" height="1" fill="#b0e0e6"/>
<rect x="1021" y="243" width="1" height="179" fill="#b0e0e6"/>
<text x="855.5" y="259" font-size="12" font-weight="bold" fill="#fff" text-anchor="middle" textLength="105.3" lengthAdjust="spacingAndGlyphs">Coolant_Pressure</text>
<rect x="743" y="275" width="181" height="101" fill="#000"/>
<rect x="743" y="275" width="1" height="101" fill="#a3a3a3"/>
<rect x="761" y="275" width="1" height="101" fill="#a3a3a3"/>
<rect x="779" y="275" width="1" height="101" fill="#a3a3a3"/>
<rect x="797" y="275" width="1" height="101" fill="#a3a3a3"/>
<rect x="815" y="275" width="1" height="101" fill="#a3a3a3"/>
<rect x="833" y="275" width="1" height="101" fill="#a3a3a3"/>
<rect x="851" y="275" width="1" height="101" fill="#a3a3a3"/>
<rect x="869" y="275" width="1" height="101" fill="#a3a3a3"/>
<rect x="887" y="275" width="1" height="101" fill="#a3a3a3"/>
<rect x="905" y="275" width="1" height="101" fill="#a3a3a3"/>
<rect x="923" y="275" width="1" height="101" fill="#a3a3a3"/>
<rect x="743" y="275" width="181" height="1" fill="#a3a3a3"/>
<rect x="743" y="295" width="181" height="1" fill="#a3a3a3"/>
<rect x="743" y="315" width="181" height="1" fill="#a3a3a3"/>
<rect x="743" y="335" width="181" height="1" fill="#a3a3a3"/>
<rect x="743" y="355" width="181" height="1" fill="#a3a3a3"/>
<rect x="743" y="375" width="181" height="1" fill="#a3a3a3"/>
<rect x="735" y="275" width="8" height="1" fill="#fff"/>
<rect x="739" y="279" width="4" height="1" fill="#fff"/>
<rect x="739" y="283" width="4" height="1" fill="#fff"/>
<rect x="739" y="287" width="4" height="1" fill="#fff"/>
<rect x="739" y="291" width="4" height="1" fill="#fff"/>
<rect x="735" y="295" width="8" height="1" fill="#fff"/>
<rect x="739" y="299" width="4" height="1" fill="#fff"/>
<rect x="739" y="303" width="4" height="1" fill="#fff"/>
<rect x="739" y="307" width="4" height="1" fill="#fff"/>
<rect x="739" y="311" width="4" height="1" fill="#fff"/>
<rect x="735" y="315" width="8" height="1" fill="#fff"/>
<rect x="739" y="319" width="4" height="1" fill="#fff"/>
<rect x="739" y="323" width="4" height="1" fill="#fff"/>
<rect x="739" y="327" width="4" height="1" fill="#fff"/>
<rect x="739" y="331" width="4" height="1" fill="#fff"/>
<rect x="735" y="335" width="8" height="1" fill="#fff"/>
<rect x="739" y="339" width="4" height="1" fill="#fff"/>
<rect x="739" y="343" width="4" height="1" fill="#fff"/>
<rect x="739" y="347" width="4" height="1" fill="#fff"/>
<rect x="739" y="351" width="4" height="1" fill="#fff"/>
<rect x="735" y="355" width="8" height="1" fill="#fff"/>
<rect x="739" y="359" width="4" height="1" fill="#fff"/>
<rect x="739" y="363" width="4" height="1" fill="#fff"/>
<rect x="739" y="367" width="4" height="1" fill="#fff"/>
<rect x="739" y="371" width="4" height="1" fill="#fff"/>
<rect x="735" y="375" width="8" height="1" fill="#fff"/>
<rect x="743" y="376" width="1" height="8" fill="#fff"/>
<rect x="746" y="376" width="1" height="4" fill="#fff"/>
<rect x="749" y="376" width="1" height="4" fill="#fff"/>
<rect x="752" y="376" width="1" height="4" fill="#fff"/>
<rect x="755" y="376" width="1" height="4" fill="#fff"/>
<rect x="761" y="376" width="1" height="8" fill="#fff"/>
<rect x="764" y="376" width="1" height="4" fill="#fff"/>
<rect x="767" y="376" width="1" height="4" fill="#fff"/>
<rect x="770" y="376" width="1" height="4" fill="#fff"/>
<rect x="773" y="376" width="1" height="4" fill="#fff"/>
<rect x="779" y="376" width="1" height="8" fill="#fff"/>
<rect x="782" y="376" width="1" height="4" fill="#fff"/>
<rect x="785" y="376" width="1" height="4" fill="#fff"/>
<rect x="788" y="376" width="1" height="4" fill="#fff"/>
<rect x="791" y="376" width="1" height="4" fill="#fff"/>
<rect x="797" y="376" width="1" height="8" fill="#fff"/>
<rect x="800" y="376" width="1" height="4" fill="#fff"/>
<rect x="803" y="376" width="1" height="4" fill="#fff"/>
<rect x="806" y="376" width="1" height="4" fill="#fff"/>
<rect x="809" y="376" width="1" height="4" fill="#fff"/>
<rect x="815" y="376" width="1" height="8" fill="#fff"/>
<rect x="818" y="376" width="1" height="4" fill="#fff"/>
<rect x="821" y="376" width="1" height="4" fill="#fff"/>
<rect x="824" y="376" width="1" height="4" fill="#fff"/>
<rect x="827" y="376" width="1" height="4" fill="#fff"/>
<rect x="833" y="376" width="1" height="8" fill="#fff"/>
<rect x="836" y="376" width="1" height="4" fill="#fff"/>
<rect x="839" y="376" width="1" height="4" fill="#fff"/>
<rect x="842" y="376" width="1" height="4" fill="#fff"/>
<rect x="845" y="376" width="1" height="4" fill="#fff"/>
<rect x="851" y="376" width="1" height="8" fill="#fff"/>
<rect x="854" y="376" width="1" height="4" fill="#fff"/>
<rect x="857" y="376" width="1" height="4" fill="#fff"/>
<rect x="860" y="376" width="1" height="4" fill="#fff"/>
<rect x="863" y="376" width="1" height="4" fill="#fff"/>
<rect x="869" y="376" width="1" height="8" fill="#fff"/>
<rect x="872" y="376" width="1" height="4" fill="#fff"/>
<rect x="875" y="376" width="1" height="4" fill="#fff"/>
<rect x="878" y="376" width="1" height="4" fill="#fff"/>
<rect x="881" y="376" width="1" height="4" fill="#fff"/>
<rect x="887" y="376" width="1" height="8" fill="#fff"/>
<rect x="890" y="376" width="1" height="4" fill="#fff"/>
<rect x="893" y="376" width="1" height="4" fill="#fff"/>
<rect x="896" y="376" width="1" height="4" fill="#fff"/>
<rect x="899" y="376" width="1" height="4" fill="#fff"/>
<rect x="905" y="376" width="1" height="8" fill="#fff"/>
<rect x="908" y="376" width="1" height="4" fill="#fff"/>
<rect x="911" y="376" width="1" height="4" fill="#fff"/>
<rect x="914" y="376" width="1" height="4" fill="#fff"/>
<rect x="917" y="376" width="1" height="4" fill="#fff"/>
<rect x="923" y="376" width="1" height="8" fill="#fff"/>
<polyline points="742.5,375.5 924.5,375.5" fill="none" stroke="#ff0000" stroke-width="1"/>
<polyline points="742.5,309.5 750.5,309.5 752.5,303.5 753.5,301.5 756.5,303.5 759.5,307.5 771.5,307.5 772.5,305.5 774.5,306.5 775.5,307.5 776.5,305.5 778.5,307.5 781.5,305.5 787.5,305.5 788.5,307.5 794.5,307.5 795.5,305.5 797.5,307.5 800.5,307.5 801.5,305.5 803.5,305.5 804.5,307.5 810.5,307.5 811.5,309.5 812.5,308.5 834.5,307.5 835.5,305.5 838.5,305.5 839.5,307.5 848.5,307.5 849.5,305.5 858.5,305.5 859.5,307.5 879.5,307.5 880.5,309.5 882.5,307.5 893.5,307.5 894.5,309.5 906.5,309.5 907.5,307.5 909.5,309.5 910.5,307.5 913.5,307.5 914.5,309.5 915.5,307.5 919.5,307.5 921.5,309.5 924.5,309.5" fill="none" stroke="#00ff00" stroke-width="1"/>
<rect x="858" y="275" width="1" height="101" fill="#fff"/>
<text x="732" y="279" font-size="10" fill="#fff" text-anchor="end" textLength="9.5" lengthAdjust="spacingAndGlyphs">25</text>
<text x="732" y="379" font-size="10" fill="#fff" text-anchor="end" textLength="9.5" lengthAdjust="spacingAndGlyphs">20</text>
<text x="744" y="393" font-size="10" fill="#fff" text-anchor="middle">-5:45</text>
<rect x="928" y="265" width="46" height="17" fill="#ff0000"/>
<polygon points="928,265 974,265 972,267 930,267 930,280 928,282" fill="#ff8080"/>
<polygon points="974,265 974,282 928,282 930,280 972,280 972,267" fill="#8b0000"/>
<svg x="930" y="267" width="42" height="13" overflow="hidden">
<text x="1" y="9" font-size="11" fill="#000" textLength="26.2" lengthAdjust="spacingAndGlyphs" font-family="Liberation Mono" stroke="#000" stroke-width="0.25">PT153</text>
</svg>
<rect x="974" y="265" width="46" height="17" fill="#5f9ea0"/>
<rect x="974" y="265" width="46" height="1" fill="#b0e0e6"/>
<rect x="974" y="265" width="1" height="17" fill="#b0e0e6"/>
<rect x="975" y="266" width="44" height="1" fill="#2f4f4f"/>
<rect x="975" y="266" width="1" height="15" fill="#2f4f4f"/>
<rect x="975" y="280" width="44" height="1" fill="#b0e0e6"/>
<rect x="1018" y="266" width="1" height="15" fill="#b0e0e6"/>
<rect x="974" y="281" width="46" height="1" fill="#2f4f4f"/>
<rect x="1019" y="265" width="1" height="17" fill="#2f4f4f"/>
<svg x="976" y="267" width="42" height="13" overflow="hidden">
<text x="1" y="9" font-size="10" fill="#fff" textLength="30.5" lengthAdjust="spacingAndGlyphs">-24.340</text>
</svg>
<rect x="928" y="282" width="46" height="17" fill="#00ff00"/>
<polygon points="928,282 974,282 972,284 930,284 930,297 928,299" fill="#80ff80"/>
<polygon points="974,282 974,299 928,299 930,297 972,297 972,284" fill="#008b00"/>
<svg x="930" y="284" width="42" height="13" overflow="hidden">
<text x="1" y="9" font-size="11" fill="#000" textLength="20.9" lengthAdjust="spacingAndGlyphs" font-family="Liberation Mono" stroke="#000" stroke-width="0.25">PT83</text>
</svg>
<rect x="974" y="282" width="46" height="17" fill="#5f9ea0"/>
<rect x="974" y="282" width="46" height="1" fill="#b0e0e6"/>
<rect x="974" y="282" width="1" height="17" fill="#b0e0e6"/>
<rect x="975" y="283" width="44" height="1" fill="#2f4f4f"/>
<rect x="975" y="283" width="1" height="15" fill="#2f4f4f"/>
<rect x="975" y="297" width="44" height="1" fill="#b0e0e6"/>
<rect x="1018" y="283" width="1" height="15" fill="#b0e0e6"/>
<rect x="974" y="298" width="46" height="1" fill="#2f4f4f"/>
<rect x="1019" y="282" width="1" height="17" fill="#2f4f4f"/>
<svg x="976" y="284" width="42" height="13" overflow="hidden">
<text x="1" y="9" font-size="10" fill="#fff" textLength="27.5" lengthAdjust="spacingAndGlyphs">23.500</text>
</svg>
<rect x="690" y="430" width="332" height="179" fill="#5f9ea0"/>
<rect x="690" y="430" width="332" height="1" fill="#2f4f4f"/>
<rect x="690" y="430" width="1" height="179" fill="#2f4f4f"/>
<rect x="691" y="431" width="330" height="1" fill="#b0e0e6"/>
<rect x="691" y="431" width="1" height="177" fill="#b0e0e6"/>
<rect x="691" y="607" width="330" height="1" fill="#2f4f4f"/>
<rect x="1020" y="431" width="1" height="177" fill="#2f4f4f"/>
<rect x="690" y="608" width="332" height="1" fill="#b0e0e6"/>
<rect x="1021" y="430" width="1" height="179" fill="#b0e0e6"/>
<text x="855.5" y="446" font-size="12" font-weight="bold" fill="#fff" text-anchor="middle" textLength="113.4" lengthAdjust="spacingAndGlyphs">Coolant_Flow_(g/s)</text>
<rect x="743" y="462" width="181" height="101" fill="#000"/>
<rect x="743" y="462" width="1" height="101" fill="#a3a3a3"/>
<rect x="761" y="462" width="1" height="101" fill="#a3a3a3"/>
<rect x="779" y="462" width="1" height="101" fill="#a3a3a3"/>
<rect x="797" y="462" width="1" height="101" fill="#a3a3a3"/>
<rect x="815" y="462" width="1" height="101" fill="#a3a3a3"/>
<rect x="833" y="462" width="1" height="101" fill="#a3a3a3"/>
<rect x="851" y="462" width="1" height="101" fill="#a3a3a3"/>
<rect x="869" y="462" width="1" height="101" fill="#a3a3a3"/>
<rect x="887" y="462" width="1" height="101" fill="#a3a3a3"/>
<rect x="905" y="462" width="1" height="101" fill="#a3a3a3"/>
<rect x="923" y="462" width="1" height="101" fill="#a3a3a3"/>
<rect x="743" y="462" width="181" height="1" fill="#a3a3a3"/>
<rect x="743" y="482" width="181" height="1" fill="#a3a3a3"/>
<rect x="743" y="502" width="181" height="1" fill="#a3a3a3"/>
<rect x="743" y="522" width="181" height="1" fill="#a3a3a3"/>
<rect x="743" y="542" width="181" height="1" fill="#a3a3a3"/>
<rect x="743" y="562" width="181" height="1" fill="#a3a3a3"/>
<rect x="735" y="462" width="8" height="1" fill="#fff"/>
<rect x="739" y="466" width="4" height="1" fill="#fff"/>
<rect x="739" y="470" width="4" height="1" fill="#fff"/>
<rect x="739" y="474" width="4" height="1" fill="#fff"/>
<rect x="739" y="478" width="4" height="1" fill="#fff"/>
<rect x="735" y="482" width="8" height="1" fill="#fff"/>
<rect x="739" y="486" width="4" height="1" fill="#fff"/>
<rect x="739" y="490" width="4" height="1" fill="#fff"/>
<rect x="739" y="494" width="4" height="1" fill="#fff"/>
<rect x="739" y="498" width="4" height="1" fill="#fff"/>
<rect x="735" y="502" width="8" height="1" fill="#fff"/>
<rect x="739" y="506" width="4" height="1" fill="#fff"/>
<rect x="739" y="510" width="4" height="1" fill="#fff"/>
<rect x="739" y="514" width="4" height="1" fill="#fff"/>
<rect x="739" y="518" width="4" height="1" fill="#fff"/>
<rect x="735" y="522" width="8" height="1" fill="#fff"/>
<rect x="739" y="526" width="4" height="1" fill="#fff"/>
<rect x="739" y="530" width="4" height="1" fill="#fff"/>
<rect x="739" y="534" width="4" height="1" fill="#fff"/>
<rect x="739" y="538" width="4" height="1" fill="#fff"/>
<rect x="735" y="542" width="8" height="1" fill="#fff"/>
<rect x="739" y="546" width="4" height="1" fill="#fff"/>
<rect x="739" y="550" width="4" height="1" fill="#fff"/>
<rect x="739" y="554" width="4" height="1" fill="#fff"/>
<rect x="739" y="558" width="4" height="1" fill="#fff"/>
<rect x="735" y="562" width="8" height="1" fill="#fff"/>
<rect x="743" y="563" width="1" height="8" fill="#fff"/>
<rect x="746" y="563" width="1" height="4" fill="#fff"/>
<rect x="749" y="563" width="1" height="4" fill="#fff"/>
<rect x="752" y="563" width="1" height="4" fill="#fff"/>
<rect x="755" y="563" width="1" height="4" fill="#fff"/>
<rect x="761" y="563" width="1" height="8" fill="#fff"/>
<rect x="764" y="563" width="1" height="4" fill="#fff"/>
<rect x="767" y="563" width="1" height="4" fill="#fff"/>
<rect x="770" y="563" width="1" height="4" fill="#fff"/>
<rect x="773" y="563" width="1" height="4" fill="#fff"/>
<rect x="779" y="563" width="1" height="8" fill="#fff"/>
<rect x="782" y="563" width="1" height="4" fill="#fff"/>
<rect x="785" y="563" width="1" height="4" fill="#fff"/>
<rect x="788" y="563" width="1" height="4" fill="#fff"/>
<rect x="791" y="563" width="1" height="4" fill="#fff"/>
<rect x="797" y="563" width="1" height="8" fill="#fff"/>
<rect x="800" y="563" width="1" height="4" fill="#fff"/>
<rect x="803" y="563" width="1" height="4" fill="#fff"/>
<rect x="806" y="563" width="1" height="4" fill="#fff"/>
<rect x="809" y="563" width="1" height="4" fill="#fff"/>
<rect x="815" y="563" width="1" height="8" fill="#fff"/>
<rect x="818" y="563" width="1" height="4" fill="#fff"/>
<rect x="821" y="563" width="1" height="4" fill="#fff"/>
<rect x="824" y="563" width="1" height="4" fill="#fff"/>
<rect x="827" y="563" width="1" height="4" fill="#fff"/>
<rect x="833" y="563" width="1" height="8" fill="#fff"/>
<rect x="836" y="563" width="1" height="4" fill="#fff"/>
<rect x="839" y="563" width="1" height="4" fill="#fff"/>
<rect x="842" y="563" width="1" height="4" fill="#fff"/>
<rect x="845" y="563" width="1" height="4" fill="#fff"/>
<rect x="851" y="563" width="1" height="8" fill="#fff"/>
<rect x="854" y="563" width="1" height="4" fill="#fff"/>
<rect x="857" y="563" width="1" height="4" fill="#fff"/>
<rect x="860" y="563" width="1" height="4" fill="#fff"/>
<rect x="863" y="563" width="1" height="4" fill="#fff"/>
<rect x="869" y="563" width="1" height="8" fill="#fff"/>
<rect x="872" y="563" width="1" height="4" fill="#fff"/>
<rect x="875" y="563" width="1" height="4" fill="#fff"/>
<rect x="878" y="563" width="1" height="4" fill="#fff"/>
<rect x="881" y="563" width="1" height="4" fill="#fff"/>
<rect x="887" y="563" width="1" height="8" fill="#fff"/>
<rect x="890" y="563" width="1" height="4" fill="#fff"/>
<rect x="893" y="563" width="1" height="4" fill="#fff"/>
<rect x="896" y="563" width="1" height="4" fill="#fff"/>
<rect x="899" y="563" width="1" height="4" fill="#fff"/>
<rect x="905" y="563" width="1" height="8" fill="#fff"/>
<rect x="908" y="563" width="1" height="4" fill="#fff"/>
<rect x="911" y="563" width="1" height="4" fill="#fff"/>
<rect x="914" y="563" width="1" height="4" fill="#fff"/>
<rect x="917" y="563" width="1" height="4" fill="#fff"/>
<rect x="923" y="563" width="1" height="8" fill="#fff"/>
<polyline points="742.5,562.5 924.5,562.5" fill="none" stroke="#ff0000" stroke-width="1"/>
<polyline points="742.5,491.5 924.5,491.5" fill="none" stroke="#00ff00" stroke-width="1"/>
<rect x="858" y="462" width="1" height="101" fill="#fff"/>
<text x="732" y="466" font-size="10" fill="#fff" text-anchor="end" textLength="9.5" lengthAdjust="spacingAndGlyphs">25</text>
<text x="732" y="566" font-size="10" fill="#fff" text-anchor="end" textLength="4.7" lengthAdjust="spacingAndGlyphs">5</text>
<text x="744" y="580" font-size="10" fill="#fff" text-anchor="middle">-5:45</text>
<rect x="928" y="452" width="46" height="17" fill="#ff0000"/>
<polygon points="928,452 974,452 972,454 930,454 930,467 928,469" fill="#ff8080"/>
<polygon points="974,452 974,469 928,469 930,467 972,467 972,454" fill="#8b0000"/>
<svg x="930" y="454" width="42" height="13" overflow="hidden">
<text x="1" y="9" font-size="11" fill="#000" textLength="42.3" lengthAdjust="spacingAndGlyphs" font-family="Liberation Mono" stroke="#000" stroke-width="0.25">CFI6731A</text>
</svg>
<rect x="974" y="452" width="46" height="17" fill="#5f9ea0"/>
<rect x="974" y="452" width="46" height="1" fill="#b0e0e6"/>
<rect x="974" y="452" width="1" height="17" fill="#b0e0e6"/>
<rect x="975" y="453" width="44" height="1" fill="#2f4f4f"/>
<rect x="975" y="453" width="1" height="15" fill="#2f4f4f"/>
<rect x="975" y="467" width="44" height="1" fill="#b0e0e6"/>
<rect x="1018" y="453" width="1" height="15" fill="#b0e0e6"/>
<rect x="974" y="468" width="46" height="1" fill="#2f4f4f"/>
<rect x="1019" y="452" width="1" height="17" fill="#2f4f4f"/>
<svg x="976" y="454" width="42" height="13" overflow="hidden">
<text x="1" y="9" font-size="10" fill="#fff" textLength="22.5" lengthAdjust="spacingAndGlyphs">0.380</text>
</svg>
<rect x="928" y="469" width="46" height="17" fill="#00ff00"/>
<polygon points="928,469 974,469 972,471 930,471 930,484 928,486" fill="#80ff80"/>
<polygon points="974,469 974,486 928,486 930,484 972,484 972,471" fill="#008b00"/>
<svg x="930" y="471" width="42" height="13" overflow="hidden">
<text x="1" y="9" font-size="11" fill="#000" textLength="42.3" lengthAdjust="spacingAndGlyphs" font-family="Liberation Mono" stroke="#000" stroke-width="0.25">CFI6711A</text>
</svg>
<rect x="974" y="469" width="46" height="17" fill="#5f9ea0"/>
<rect x="974" y="469" width="46" height="1" fill="#b0e0e6"/>
<rect x="974" y="469" width="1" height="17" fill="#b0e0e6"/>
<rect x="975" y="470" width="44" height="1" fill="#2f4f4f"/>
<rect x="975" y="470" width="1" height="15" fill="#2f4f4f"/>
<rect x="975" y="484" width="44" height="1" fill="#b0e0e6"/>
<rect x="1018" y="470" width="1" height="15" fill="#b0e0e6"/>
<rect x="974" y="485" width="46" height="1" fill="#2f4f4f"/>
<rect x="1019" y="469" width="1" height="17" fill="#2f4f4f"/>
<svg x="976" y="471" width="42" height="13" overflow="hidden">
<text x="1" y="9" font-size="10" fill="#fff" textLength="27.5" lengthAdjust="spacingAndGlyphs">19.140</text>
</svg>
<rect x="690" y="617" width="332" height="179" fill="#5f9ea0"/>
<rect x="690" y="617" width="332" height="1" fill="#2f4f4f"/>
<rect x="690" y="617" width="1" height="179" fill="#2f4f4f"/>
<rect x="691" y="618" width="330" height="1" fill="#b0e0e6"/>
<rect x="691" y="618" width="1" height="177" fill="#b0e0e6"/>
<rect x="691" y="794" width="330" height="1" fill="#2f4f4f"/>
<rect x="1020" y="618" width="1" height="177" fill="#2f4f4f"/>
<rect x="690" y="795" width="332" height="1" fill="#b0e0e6"/>
<rect x="1021" y="617" width="1" height="179" fill="#b0e0e6"/>
<text x="855.5" y="633" font-size="12" font-weight="bold" fill="#fff" text-anchor="middle" textLength="90.7" lengthAdjust="spacingAndGlyphs">Target_Vacuum</text>
<rect x="743" y="649" width="181" height="101" fill="#000"/>
<rect x="743" y="649" width="1" height="101" fill="#a3a3a3"/>
<rect x="761" y="649" width="1" height="101" fill="#a3a3a3"/>
<rect x="779" y="649" width="1" height="101" fill="#a3a3a3"/>
<rect x="797" y="649" width="1" height="101" fill="#a3a3a3"/>
<rect x="815" y="649" width="1" height="101" fill="#a3a3a3"/>
<rect x="833" y="649" width="1" height="101" fill="#a3a3a3"/>
<rect x="851" y="649" width="1" height="101" fill="#a3a3a3"/>
<rect x="869" y="649" width="1" height="101" fill="#a3a3a3"/>
<rect x="887" y="649" width="1" height="101" fill="#a3a3a3"/>
<rect x="905" y="649" width="1" height="101" fill="#a3a3a3"/>
<rect x="923" y="649" width="1" height="101" fill="#a3a3a3"/>
<rect x="743" y="649" width="181" height="1" fill="#a3a3a3"/>
<rect x="743" y="669" width="181" height="1" fill="#a3a3a3"/>
<rect x="743" y="689" width="181" height="1" fill="#a3a3a3"/>
<rect x="743" y="709" width="181" height="1" fill="#a3a3a3"/>
<rect x="743" y="729" width="181" height="1" fill="#a3a3a3"/>
<rect x="743" y="749" width="181" height="1" fill="#a3a3a3"/>
<rect x="735" y="649" width="8" height="1" fill="#fff"/>
<rect x="739" y="653" width="4" height="1" fill="#fff"/>
<rect x="739" y="657" width="4" height="1" fill="#fff"/>
<rect x="739" y="661" width="4" height="1" fill="#fff"/>
<rect x="739" y="665" width="4" height="1" fill="#fff"/>
<rect x="735" y="669" width="8" height="1" fill="#fff"/>
<rect x="739" y="673" width="4" height="1" fill="#fff"/>
<rect x="739" y="677" width="4" height="1" fill="#fff"/>
<rect x="739" y="681" width="4" height="1" fill="#fff"/>
<rect x="739" y="685" width="4" height="1" fill="#fff"/>
<rect x="735" y="689" width="8" height="1" fill="#fff"/>
<rect x="739" y="693" width="4" height="1" fill="#fff"/>
<rect x="739" y="697" width="4" height="1" fill="#fff"/>
<rect x="739" y="701" width="4" height="1" fill="#fff"/>
<rect x="739" y="705" width="4" height="1" fill="#fff"/>
<rect x="735" y="709" width="8" height="1" fill="#fff"/>
<rect x="739" y="713" width="4" height="1" fill="#fff"/>
<rect x="739" y="717" width="4" height="1" fill="#fff"/>
<rect x="739" y="721" width="4" height="1" fill="#fff"/>
<rect x="739" y="725" width="4" height="1" fill="#fff"/>
<rect x="735" y="729" width="8" height="1" fill="#fff"/>
<rect x="739" y="733" width="4" height="1" fill="#fff"/>
<rect x="739" y="737" width="4" height="1" fill="#fff"/>
<rect x="739" y="741" width="4" height="1" fill="#fff"/>
<rect x="739" y="745" width="4" height="1" fill="#fff"/>
<rect x="735" y="749" width="8" height="1" fill="#fff"/>
<rect x="743" y="750" width="1" height="8" fill="#fff"/>
<rect x="746" y="750" width="1" height="4" fill="#fff"/>
<rect x="749" y="750" width="1" height="4" fill="#fff"/>
<rect x="752" y="750" width="1" height="4" fill="#fff"/>
<rect x="755" y="750" width="1" height="4" fill="#fff"/>
<rect x="761" y="750" width="1" height="8" fill="#fff"/>
<rect x="764" y="750" width="1" height="4" fill="#fff"/>
<rect x="767" y="750" width="1" height="4" fill="#fff"/>
<rect x="770" y="750" width="1" height="4" fill="#fff"/>
<rect x="773" y="750" width="1" height="4" fill="#fff"/>
<rect x="779" y="750" width="1" height="8" fill="#fff"/>
<rect x="782" y="750" width="1" height="4" fill="#fff"/>
<rect x="785" y="750" width="1" height="4" fill="#fff"/>
<rect x="788" y="750" width="1" height="4" fill="#fff"/>
<rect x="791" y="750" width="1" height="4" fill="#fff"/>
<rect x="797" y="750" width="1" height="8" fill="#fff"/>
<rect x="800" y="750" width="1" height="4" fill="#fff"/>
<rect x="803" y="750" width="1" height="4" fill="#fff"/>
<rect x="806" y="750" width="1" height="4" fill="#fff"/>
<rect x="809" y="750" width="1" height="4" fill="#fff"/>
<rect x="815" y="750" width="1" height="8" fill="#fff"/>
<rect x="818" y="750" width="1" height="4" fill="#fff"/>
<rect x="821" y="750" width="1" height="4" fill="#fff"/>
<rect x="824" y="750" width="1" height="4" fill="#fff"/>
<rect x="827" y="750" width="1" height="4" fill="#fff"/>
<rect x="833" y="750" width="1" height="8" fill="#fff"/>
<rect x="836" y="750" width="1" height="4" fill="#fff"/>
<rect x="839" y="750" width="1" height="4" fill="#fff"/>
<rect x="842" y="750" width="1" height="4" fill="#fff"/>
<rect x="845" y="750" width="1" height="4" fill="#fff"/>
<rect x="851" y="750" width="1" height="8" fill="#fff"/>
<rect x="854" y="750" width="1" height="4" fill="#fff"/>
<rect x="857" y="750" width="1" height="4" fill="#fff"/>
<rect x="860" y="750" width="1" height="4" fill="#fff"/>
<rect x="863" y="750" width="1" height="4" fill="#fff"/>
<rect x="869" y="750" width="1" height="8" fill="#fff"/>
<rect x="872" y="750" width="1" height="4" fill="#fff"/>
<rect x="875" y="750" width="1" height="4" fill="#fff"/>
<rect x="878" y="750" width="1" height="4" fill="#fff"/>
<rect x="881" y="750" width="1" height="4" fill="#fff"/>
<rect x="887" y="750" width="1" height="8" fill="#fff"/>
<rect x="890" y="750" width="1" height="4" fill="#fff"/>
<rect x="893" y="750" width="1" height="4" fill="#fff"/>
<rect x="896" y="750" width="1" height="4" fill="#fff"/>
<rect x="899" y="750" width="1" height="4" fill="#fff"/>
<rect x="905" y="750" width="1" height="8" fill="#fff"/>
<rect x="908" y="750" width="1" height="4" fill="#fff"/>
<rect x="911" y="750" width="1" height="4" fill="#fff"/>
<rect x="914" y="750" width="1" height="4" fill="#fff"/>
<rect x="917" y="750" width="1" height="4" fill="#fff"/>
<rect x="923" y="750" width="1" height="8" fill="#fff"/>
<polyline points="742.5,649.5 924.5,649.5" fill="none" stroke="#00ff00" stroke-width="1"/>
<polyline points="742.5,740.5 743.5,746.5 744.5,745.5 745.5,742.5 746.5,740.5 747.5,747.5 748.5,749.5 749.5,741.5 750.5,743.5 751.5,741.5 752.5,740.5 753.5,749.5 754.5,747.5 755.5,743.5 756.5,728.5 757.5,749.5 758.5,743.5 759.5,743.5 760.5,742.5 761.5,742.5 762.5,749.5 763.5,746.5 764.5,742.5 765.5,741.5 766.5,739.5 767.5,749.5 768.5,747.5 769.5,747.5 770.5,743.5 771.5,744.5 772.5,747.5 773.5,733.5 774.5,740.5 775.5,741.5 776.5,749.5 777.5,734.5 778.5,744.5 779.5,749.5 780.5,746.5 781.5,749.5 782.5,743.5 783.5,742.5 784.5,743.5 785.5,739.5 786.5,743.5 787.5,744.5 788.5,744.5 789.5,742.5 790.5,737.5 791.5,742.5 792.5,743.5 793.5,741.5 794.5,746.5 795.5,745.5 796.5,747.5 797.5,743.5 798.5,747.5 799.5,747.5 800.5,742.5 801.5,740.5 802.5,743.5 803.5,741.5 804.5,740.5 805.5,729.5 806.5,744.5 807.5,739.5 808.5,744.5 809.5,740.5 810.5,743.5 811.5,739.5 812.5,739.5 813.5,743.5 814.5,740.5 815.5,745.5 816.5,709.5 817.5,669.5 818.5,749.5 819.5,709.5 820.5,749.5 821.5,749.5 822.5,740.5 823.5,740.5 824.5,743.5 825.5,749.5 826.5,741.5 827.5,743.5 828.5,743.5 829.5,743.5 830.5,739.5 831.5,743.5 832.5,726.5 833.5,733.5 834.5,742.5 835.5,744.5 836.5,749.5 837.5,743.5 838.5,749.5 839.5,739.5 840.5,744.5 841.5,739.5 842.5,749.5 843.5,742.5 844.5,740.5 845.5,739.5 846.5,749.5 847.5,749.5 848.5,744.5 849.5,747.5 850.5,743.5 851.5,738.5 852.5,747.5 853.5,744.5 854.5,745.5 855.5,745.5 856.5,740.5 857.5,746.5 858.5,749.5 859.5,743.5 860.5,739.5 861.5,749.5 862.5,740.5 863.5,743.5 864.5,744.5 865.5,739.5 866.5,741.5 867.5,743.5 868.5,745.5 869.5,739.5 870.5,745.5 871.5,741.5 872.5,740.5 873.5,749.5 874.5,746.5 875.5,747.5 876.5,740.5 877.5,741.5 878.5,743.5 879.5,749.5 880.5,733.5 881.5,745.5 882.5,743.5 883.5,742.5 884.5,745.5 885.5,743.5 886.5,745.5 887.5,742.5 888.5,743.5 889.5,732.5 890.5,745.5 891.5,744.5 892.5,745.5 893.5,743.5 894.5,747.5 895.5,747.5 896.5,742.5 897.5,743.5 898.5,746.5 899.5,744.5 900.5,745.5 901.5,740.5 902.5,739.5 903.5,749.5 904.5,744.5 905.5,743.5 906.5,747.5 907.5,749.5 908.5,749.5 909.5,730.5 910.5,749.5 911.5,743.5 912.5,740.5 913.5,746.5 914.5,741.5 915.5,746.5 916.5,743.5 917.5,742.5 918.5,747.5 919.5,749.5 920.5,742.5 921.5,739.5 922.5,742.5 923.5,743.5 924.5,743.5" fill="none" stroke="#ff0000" stroke-width="1"/>
<rect x="858" y="649" width="1" height="101" fill="#fff"/>
<text x="732" y="653" font-size="10" fill="#fff" text-anchor="end" textLength="17.0" lengthAdjust="spacingAndGlyphs">2e-5</text>
<text x="732" y="753" font-size="10" fill="#fff" text-anchor="end" textLength="4.7" lengthAdjust="spacingAndGlyphs">0</text>
<text x="744" y="767" font-size="10" fill="#fff" text-anchor="middle">-5:45</text>
<rect x="928" y="639" width="46" height="17" fill="#ff0000"/>
<polygon points="928,639 974,639 972,641 930,641 930,654 928,656" fill="#ff8080"/>
<polygon points="974,639 974,656 928,656 930,654 972,654 972,641" fill="#8b0000"/>
<svg x="930" y="641" width="42" height="13" overflow="hidden">
<text x="1" y="9" font-size="11" fill="#000" textLength="15.5" lengthAdjust="spacingAndGlyphs" font-family="Liberation Mono" stroke="#000" stroke-width="0.25">vac</text>
</svg>
<rect x="974" y="639" width="46" height="17" fill="#5f9ea0"/>
<rect x="974" y="639" width="46" height="1" fill="#b0e0e6"/>
<rect x="974" y="639" width="1" height="17" fill="#b0e0e6"/>
<rect x="975" y="640" width="44" height="1" fill="#2f4f4f"/>
<rect x="975" y="640" width="1" height="15" fill="#2f4f4f"/>
<rect x="975" y="654" width="44" height="1" fill="#b0e0e6"/>
<rect x="1018" y="640" width="1" height="15" fill="#b0e0e6"/>
<rect x="974" y="655" width="46" height="1" fill="#2f4f4f"/>
<rect x="1019" y="639" width="1" height="17" fill="#2f4f4f"/>
<svg x="976" y="641" width="42" height="13" overflow="hidden">
<text x="1" y="9" font-size="10" fill="#fff" textLength="35.5" lengthAdjust="spacingAndGlyphs">1.27e-06</text>
</svg>
<rect x="928" y="656" width="46" height="17" fill="#00ff00"/>
<polygon points="928,656 974,656 972,658 930,658 930,671 928,673" fill="#80ff80"/>
<polygon points="974,656 974,673 928,673 930,671 972,671 972,658" fill="#008b00"/>
<svg x="930" y="658" width="42" height="13" overflow="hidden">
<text x="1" y="9" font-size="11" fill="#000" textLength="15.5" lengthAdjust="spacingAndGlyphs" font-family="Liberation Mono" stroke="#000" stroke-width="0.25">vg2</text>
</svg>
<rect x="974" y="656" width="46" height="17" fill="#5f9ea0"/>
<rect x="974" y="656" width="46" height="1" fill="#b0e0e6"/>
<rect x="974" y="656" width="1" height="17" fill="#b0e0e6"/>
<rect x="975" y="657" width="44" height="1" fill="#2f4f4f"/>
<rect x="975" y="657" width="1" height="15" fill="#2f4f4f"/>
<rect x="975" y="671" width="44" height="1" fill="#b0e0e6"/>
<rect x="1018" y="657" width="1" height="15" fill="#b0e0e6"/>
<rect x="974" y="672" width="46" height="1" fill="#2f4f4f"/>
<rect x="1019" y="656" width="1" height="17" fill="#2f4f4f"/>
<svg x="976" y="658" width="42" height="13" overflow="hidden">
<text x="1" y="9" font-size="10" fill="#fff" textLength="35.5" lengthAdjust="spacingAndGlyphs">9.00e-04</text>
</svg>
<rect x="690" y="804" width="332" height="179" fill="#5f9ea0"/>
<rect x="690" y="804" width="332" height="1" fill="#2f4f4f"/>
<rect x="690" y="804" width="1" height="179" fill="#2f4f4f"/>
<rect x="691" y="805" width="330" height="1" fill="#b0e0e6"/>
<rect x="691" y="805" width="1" height="177" fill="#b0e0e6"/>
<rect x="691" y="981" width="330" height="1" fill="#2f4f4f"/>
<rect x="1020" y="805" width="1" height="177" fill="#2f4f4f"/>
<rect x="690" y="982" width="332" height="1" fill="#b0e0e6"/>
<rect x="1021" y="804" width="1" height="179" fill="#b0e0e6"/>
<text x="855.5" y="820" font-size="12" font-weight="bold" fill="#fff" text-anchor="middle" textLength="84.8" lengthAdjust="spacingAndGlyphs">Beam_Current</text>
<rect x="743" y="836" width="181" height="101" fill="#000"/>
<rect x="743" y="836" width="1" height="101" fill="#a3a3a3"/>
<rect x="761" y="836" width="1" height="101" fill="#a3a3a3"/>
<rect x="779" y="836" width="1" height="101" fill="#a3a3a3"/>
<rect x="797" y="836" width="1" height="101" fill="#a3a3a3"/>
<rect x="815" y="836" width="1" height="101" fill="#a3a3a3"/>
<rect x="833" y="836" width="1" height="101" fill="#a3a3a3"/>
<rect x="851" y="836" width="1" height="101" fill="#a3a3a3"/>
<rect x="869" y="836" width="1" height="101" fill="#a3a3a3"/>
<rect x="887" y="836" width="1" height="101" fill="#a3a3a3"/>
<rect x="905" y="836" width="1" height="101" fill="#a3a3a3"/>
<rect x="923" y="836" width="1" height="101" fill="#a3a3a3"/>
<rect x="743" y="836" width="181" height="1" fill="#a3a3a3"/>
<rect x="743" y="856" width="181" height="1" fill="#a3a3a3"/>
<rect x="743" y="876" width="181" height="1" fill="#a3a3a3"/>
<rect x="743" y="896" width="181" height="1" fill="#a3a3a3"/>
<rect x="743" y="916" width="181" height="1" fill="#a3a3a3"/>
<rect x="743" y="936" width="181" height="1" fill="#a3a3a3"/>
<rect x="735" y="836" width="8" height="1" fill="#fff"/>
<rect x="739" y="840" width="4" height="1" fill="#fff"/>
<rect x="739" y="844" width="4" height="1" fill="#fff"/>
<rect x="739" y="848" width="4" height="1" fill="#fff"/>
<rect x="739" y="852" width="4" height="1" fill="#fff"/>
<rect x="735" y="856" width="8" height="1" fill="#fff"/>
<rect x="739" y="860" width="4" height="1" fill="#fff"/>
<rect x="739" y="864" width="4" height="1" fill="#fff"/>
<rect x="739" y="868" width="4" height="1" fill="#fff"/>
<rect x="739" y="872" width="4" height="1" fill="#fff"/>
<rect x="735" y="876" width="8" height="1" fill="#fff"/>
<rect x="739" y="880" width="4" height="1" fill="#fff"/>
<rect x="739" y="884" width="4" height="1" fill="#fff"/>
<rect x="739" y="888" width="4" height="1" fill="#fff"/>
<rect x="739" y="892" width="4" height="1" fill="#fff"/>
<rect x="735" y="896" width="8" height="1" fill="#fff"/>
<rect x="739" y="900" width="4" height="1" fill="#fff"/>
<rect x="739" y="904" width="4" height="1" fill="#fff"/>
<rect x="739" y="908" width="4" height="1" fill="#fff"/>
<rect x="739" y="912" width="4" height="1" fill="#fff"/>
<rect x="735" y="916" width="8" height="1" fill="#fff"/>
<rect x="739" y="920" width="4" height="1" fill="#fff"/>
<rect x="739" y="924" width="4" height="1" fill="#fff"/>
<rect x="739" y="928" width="4" height="1" fill="#fff"/>
<rect x="739" y="932" width="4" height="1" fill="#fff"/>
<rect x="735" y="936" width="8" height="1" fill="#fff"/>
<rect x="743" y="937" width="1" height="8" fill="#fff"/>
<rect x="746" y="937" width="1" height="4" fill="#fff"/>
<rect x="749" y="937" width="1" height="4" fill="#fff"/>
<rect x="752" y="937" width="1" height="4" fill="#fff"/>
<rect x="755" y="937" width="1" height="4" fill="#fff"/>
<rect x="761" y="937" width="1" height="8" fill="#fff"/>
<rect x="764" y="937" width="1" height="4" fill="#fff"/>
<rect x="767" y="937" width="1" height="4" fill="#fff"/>
<rect x="770" y="937" width="1" height="4" fill="#fff"/>
<rect x="773" y="937" width="1" height="4" fill="#fff"/>
<rect x="779" y="937" width="1" height="8" fill="#fff"/>
<rect x="782" y="937" width="1" height="4" fill="#fff"/>
<rect x="785" y="937" width="1" height="4" fill="#fff"/>
<rect x="788" y="937" width="1" height="4" fill="#fff"/>
<rect x="791" y="937" width="1" height="4" fill="#fff"/>
<rect x="797" y="937" width="1" height="8" fill="#fff"/>
<rect x="800" y="937" width="1" height="4" fill="#fff"/>
<rect x="803" y="937" width="1" height="4" fill="#fff"/>
<rect x="806" y="937" width="1" height="4" fill="#fff"/>
<rect x="809" y="937" width="1" height="4" fill="#fff"/>
<rect x="815" y="937" width="1" height="8" fill="#fff"/>
<rect x="818" y="937" width="1" height="4" fill="#fff"/>
<rect x="821" y="937" width="1" height="4" fill="#fff"/>
<rect x="824" y="937" width="1" height="4" fill="#fff"/>
<rect x="827" y="937" width="1" height="4" fill="#fff"/>
<rect x="833" y="937" width="1" height="8" fill="#fff"/>
<rect x="836" y="937" width="1" height="4" fill="#fff"/>
<rect x="839" y="937" width="1" height="4" fill="#fff"/>
<rect x="842" y="937" width="1" height="4" fill="#fff"/>
<rect x="845" y="937" width="1" height="4" fill="#fff"/>
<rect x="851" y="937" width="1" height="8" fill="#fff"/>
<rect x="854" y="937" width="1" height="4" fill="#fff"/>
<rect x="857" y="937" width="1" height="4" fill="#fff"/>
<rect x="860" y="937" width="1" height="4" fill="#fff"/>
<rect x="863" y="937" width="1" height="4" fill="#fff"/>
<rect x="869" y="937" width="1" height="8" fill="#fff"/>
<rect x="872" y="937" width="1" height="4" fill="#fff"/>
<rect x="875" y="937" width="1" height="4" fill="#fff"/>
<rect x="878" y="937" width="1" height="4" fill="#fff"/>
<rect x="881" y="937" width="1" height="4" fill="#fff"/>
<rect x="887" y="937" width="1" height="8" fill="#fff"/>
<rect x="890" y="937" width="1" height="4" fill="#fff"/>
<rect x="893" y="937" width="1" height="4" fill="#fff"/>
<rect x="896" y="937" width="1" height="4" fill="#fff"/>
<rect x="899" y="937" width="1" height="4" fill="#fff"/>
<rect x="905" y="937" width="1" height="8" fill="#fff"/>
<rect x="908" y="937" width="1" height="4" fill="#fff"/>
<rect x="911" y="937" width="1" height="4" fill="#fff"/>
<rect x="914" y="937" width="1" height="4" fill="#fff"/>
<rect x="917" y="937" width="1" height="4" fill="#fff"/>
<rect x="923" y="937" width="1" height="8" fill="#fff"/>
<polyline points="742.5,936.5 749.5,936.5 749.5,911.5 750.5,886.5 751.5,885.5 755.5,887.5 760.5,886.5 760.5,870.5 763.5,869.5 765.5,871.5 766.5,866.5 768.5,861.5 773.5,860.5 783.5,861.5 788.5,859.5 791.5,863.5 798.5,863.5 803.5,862.5 808.5,863.5 811.5,861.5 815.5,860.5 823.5,860.5 833.5,859.5 843.5,860.5 848.5,859.5 853.5,860.5 857.5,860.5" fill="none" stroke="#ff0000" stroke-width="1"/>
<polyline points="859.5,935.5 919.5,935.5 920.5,936.5 922.5,935.5 924.5,936.5" fill="none" stroke="#ff0000" stroke-width="1"/>
<rect x="858" y="836" width="1" height="101" fill="#fff"/>
<text x="732" y="840" font-size="10" fill="#fff" text-anchor="end" textLength="14.2" lengthAdjust="spacingAndGlyphs">150</text>
<text x="732" y="940" font-size="10" fill="#fff" text-anchor="end" textLength="4.7" lengthAdjust="spacingAndGlyphs">0</text>
<text x="744" y="954" font-size="10" fill="#fff" text-anchor="middle">-5:45</text>
<rect x="928" y="826" width="46" height="17" fill="#ff0000"/>
<polygon points="928,826 974,826 972,828 930,828 930,841 928,843" fill="#ff8080"/>
<polygon points="974,826 974,843 928,843 930,841 972,841 972,828" fill="#8b0000"/>
<svg x="930" y="828" width="42" height="13" overflow="hidden">
<text x="1" y="9" font-size="11" fill="#000" textLength="26.2" lengthAdjust="spacingAndGlyphs" font-family="Liberation Mono" stroke="#000" stroke-width="0.25">Ibeam</text>
</svg>
<rect x="974" y="826" width="46" height="17" fill="#5f9ea0"/>
<rect x="974" y="826" width="46" height="1" fill="#b0e0e6"/>
<rect x="974" y="826" width="1" height="17" fill="#b0e0e6"/>
<rect x="975" y="827" width="44" height="1" fill="#2f4f4f"/>
<rect x="975" y="827" width="1" height="15" fill="#2f4f4f"/>
<rect x="975" y="841" width="44" height="1" fill="#b0e0e6"/>
<rect x="1018" y="827" width="1" height="15" fill="#b0e0e6"/>
<rect x="974" y="842" width="46" height="1" fill="#2f4f4f"/>
<rect x="1019" y="826" width="1" height="17" fill="#2f4f4f"/>
<svg x="976" y="828" width="42" height="13" overflow="hidden">
<text x="1" y="9" font-size="10" fill="#fff" textLength="41.9" lengthAdjust="spacingAndGlyphs">114.95517</text>
</svg>
<rect x="382" y="628" width="250" height="400" fill="#c0c0c0"/>
<rect x="383" y="629" width="248" height="1" fill="#fff"/>
<rect x="383" y="629" width="1" height="398" fill="#fff"/>
<rect x="631" y="628" width="1" height="400" fill="#000"/>
<rect x="382" y="1027" width="250" height="1" fill="#000"/>
<rect x="630" y="629" width="1" height="398" fill="#a8a8a8"/>
<rect x="383" y="1026" width="248" height="1" fill="#a8a8a8"/>
<rect x="387" y="633" width="240" height="17" fill="#000080"/>
<rect x="390" y="635" width="16" height="14" fill="#c0c0c0"/>
<rect x="390" y="635" width="16" height="1" fill="#fff"/>
<rect x="390" y="635" width="1" height="14" fill="#fff"/>
<rect x="405" y="635" width="1" height="14" fill="#000"/>
<rect x="390" y="648" width="16" height="1" fill="#000"/>
<rect x="404" y="636" width="1" height="12" fill="#888"/>
<rect x="391" y="647" width="14" height="1" fill="#888"/>
<rect x="394" y="641" width="9" height="3" fill="#000"/>
<rect x="591" y="635" width="16" height="14" fill="#c0c0c0"/>
<rect x="591" y="635" width="16" height="1" fill="#fff"/>
<rect x="591" y="635" width="1" height="14" fill="#fff"/>
<rect x="606" y="635" width="1" height="14" fill="#000"/>
<rect x="591" y="648" width="16" height="1" fill="#000"/>
<rect x="605" y="636" width="1" height="12" fill="#888"/>
<rect x="592" y="647" width="14" height="1" fill="#888"/>
<rect x="596" y="645" width="7" height="2" fill="#000"/>
<rect x="609" y="635" width="16" height="14" fill="#c0c0c0"/>
<rect x="609" y="635" width="16" height="1" fill="#fff"/>
<rect x="609" y="635" width="1" height="14" fill="#fff"/>
<rect x="624" y="635" width="1" height="14" fill="#000"/>
<rect x="609" y="648" width="16" height="1" fill="#000"/>
<rect x="623" y="636" width="1" height="12" fill="#888"/>
<rect x="610" y="647" width="14" height="1" fill="#888"/>
<rect x="613" y="638" width="9" height="2" fill="#000"/>
<rect x="613" y="638" width="1" height="9" fill="#000"/>
<rect x="621" y="638" width="1" height="9" fill="#000"/>
<rect x="613" y="646" width="9" height="1" fill="#000"/>
<text x="408.5" y="646" font-size="12" font-weight="bold" fill="#fff">atarg Alarm Tree</text>
<rect x="387" y="650" width="240" height="373" fill="#5f9ea0"/>
<rect x="387" y="650" width="240" height="30" fill="#5f9ea0"/>
<polygon points="387,650 627,650 625,652 389,652 389,678 387,680" fill="#b0e0e6"/>
<polygon points="627,650 627,680 387,680 389,678 625,678 625,652" fill="#2f4f4f"/>
<text x="396.5" y="669" font-size="12" font-weight="bold" fill="#fff" textLength="20" lengthAdjust="spacingAndGlyphs">File</text>
<rect x="397" y="670" width="7" height="2" fill="#fff"/>
<text x="432.5" y="669" font-size="12" font-weight="bold" fill="#fff" textLength="45.5" lengthAdjust="spacingAndGlyphs">Options</text>
<rect x="433" y="670" width="11" height="2" fill="#fff"/>
<text x="590.5" y="669" font-size="12" font-weight="bold" fill="#fff" textLength="26" lengthAdjust="spacingAndGlyphs">Help</text>
<rect x="591" y="670" width="9" height="2" fill="#fff"/>
<rect x="392" y="684" width="232" height="1" fill="#2f4f4f"/>
<rect x="392" y="684" width="1" height="400" fill="#2f4f4f"/>
<rect x="393" y="685" width="230" height="1" fill="#b0e0e6"/>
<rect x="393" y="685" width="1" height="398" fill="#b0e0e6"/>
<rect x="393" y="1082" width="230" height="1" fill="#2f4f4f"/>
<rect x="622" y="685" width="1" height="398" fill="#2f4f4f"/>
<rect x="392" y="1083" width="232" height="1" fill="#b0e0e6"/>
<rect x="623" y="684" width="1" height="400" fill="#b0e0e6"/>
<polygon points="402,693 419,693 417,695 404,695 404,708 402,710" fill="#b0e0e6"/>
<polygon points="419,693 419,710 402,710 404,708 417,708 417,695" fill="#2f4f4f"/>
<rect x="423" y="693" width="17" height="1" fill="#b0e0e6"/>
<rect x="423" y="693" width="1" height="17" fill="#b0e0e6"/>
<rect x="424" y="694" width="15" height="1" fill="#2f4f4f"/>
<rect x="424" y="694" width="1" height="15" fill="#2f4f4f"/>
<rect x="424" y="708" width="15" height="1" fill="#b0e0e6"/>
<rect x="438" y="694" width="1" height="15" fill="#b0e0e6"/>
<rect x="423" y="709" width="17" height="1" fill="#2f4f4f"/>
<rect x="439" y="693" width="1" height="17" fill="#2f4f4f"/>
<rect x="445" y="688" width="61" height="1" fill="#b0e0e6"/>
<rect x="445" y="688" width="1" height="28" fill="#b0e0e6"/>
<rect x="446" y="689" width="59" height="1" fill="#2f4f4f"/>
<rect x="446" y="689" width="1" height="26" fill="#2f4f4f"/>
<rect x="446" y="714" width="59" height="1" fill="#b0e0e6"/>
<rect x="504" y="689" width="1" height="26" fill="#b0e0e6"/>
<rect x="445" y="715" width="61" height="1" fill="#2f4f4f"/>
<rect x="505" y="688" width="1" height="28" fill="#2f4f4f"/>
<text x="459.5" y="706" font-size="12" font-weight="bold" fill="#fff">atarg</text>
<polygon points="430,725 447,725 445,727 432,727 432,740 430,742" fill="#b0e0e6"/>
<polygon points="447,725 447,742 430,742 432,740 445,740 445,727" fill="#2f4f4f"/>
<rect x="451" y="725" width="17" height="1" fill="#b0e0e6"/>
<rect x="451" y="725" width="1" height="17" fill="#b0e0e6"/>
<rect x="452" y="726" width="15" height="1" fill="#2f4f4f"/>
<rect x="452" y="726" width="1" height="15" fill="#2f4f4f"/>
<rect x="452" y="740" width="15" height="1" fill="#b0e0e6"/>
<rect x="466" y="726" width="1" height="15" fill="#b0e0e6"/>
<rect x="451" y="741" width="17" height="1" fill="#2f4f4f"/>
<rect x="467" y="725" width="1" height="17" fill="#2f4f4f"/>
<polygon points="473,720 525,720 523,722 475,722 475,746 473,748" fill="#b0e0e6"/>
<polygon points="525,720 525,748 473,748 475,746 523,746 523,722" fill="#2f4f4f"/>
<text x="487.5" y="738" font-size="12" font-weight="bold" fill="#fff">IOC</text>
<polygon points="430,757 447,757 445,759 432,759 432,772 430,774" fill="#b0e0e6"/>
<polygon points="447,757 447,774 430,774 432,772 445,772 445,759" fill="#2f4f4f"/>
<rect x="451" y="757" width="17" height="1" fill="#b0e0e6"/>
<rect x="451" y="757" width="1" height="17" fill="#b0e0e6"/>
<rect x="452" y="758" width="15" height="1" fill="#2f4f4f"/>
<rect x="452" y="758" width="1" height="15" fill="#2f4f4f"/>
<rect x="452" y="772" width="15" height="1" fill="#b0e0e6"/>
<rect x="466" y="758" width="1" height="15" fill="#b0e0e6"/>
<rect x="451" y="773" width="17" height="1" fill="#2f4f4f"/>
<rect x="467" y="757" width="1" height="17" fill="#2f4f4f"/>
<rect x="473" y="752" width="98" height="1" fill="#b0e0e6"/>
<rect x="473" y="752" width="1" height="28" fill="#b0e0e6"/>
<rect x="474" y="753" width="96" height="1" fill="#2f4f4f"/>
<rect x="474" y="753" width="1" height="26" fill="#2f4f4f"/>
<rect x="474" y="778" width="96" height="1" fill="#b0e0e6"/>
<rect x="569" y="753" width="1" height="26" fill="#b0e0e6"/>
<rect x="473" y="779" width="98" height="1" fill="#2f4f4f"/>
<rect x="570" y="752" width="1" height="28" fill="#2f4f4f"/>
<text x="487.5" y="770" font-size="12" font-weight="bold" fill="#fff">gaspanelD2</text>
<polygon points="458,789 475,789 473,791 460,791 460,804 458,806" fill="#b0e0e6"/>
<polygon points="475,789 475,806 458,806 460,804 473,804 473,791" fill="#2f4f4f"/>
<rect x="479" y="789" width="17" height="1" fill="#b0e0e6"/>
<rect x="479" y="789" width="1" height="17" fill="#b0e0e6"/>
<rect x="480" y="790" width="15" height="1" fill="#2f4f4f"/>
<rect x="480" y="790" width="1" height="15" fill="#2f4f4f"/>
<rect x="480" y="804" width="15" height="1" fill="#b0e0e6"/>
<rect x="494" y="790" width="1" height="15" fill="#b0e0e6"/>
<rect x="479" y="805" width="17" height="1" fill="#2f4f4f"/>
<rect x="495" y="789" width="1" height="17" fill="#2f4f4f"/>
<polygon points="501,784 606,784 604,786 503,786 503,810 501,812" fill="#b0e0e6"/>
<polygon points="606,784 606,812 501,812 503,810 604,810 604,786" fill="#2f4f4f"/>
<text x="515.5" y="802" font-size="12" font-weight="bold" fill="#fff">pressuresD2</text>
<polygon points="430,821 447,821 445,823 432,823 432,836 430,838" fill="#b0e0e6"/>
<polygon points="447,821 447,838 430,838 432,836 445,836 445,823" fill="#2f4f4f"/>
<rect x="451" y="821" width="17" height="1" fill="#b0e0e6"/>
<rect x="451" y="821" width="1" height="17" fill="#b0e0e6"/>
<rect x="452" y="822" width="15" height="1" fill="#2f4f4f"/>
<rect x="452" y="822" width="1" height="15" fill="#2f4f4f"/>
<rect x="452" y="836" width="15" height="1" fill="#b0e0e6"/>
<rect x="466" y="822" width="1" height="15" fill="#b0e0e6"/>
<rect x="451" y="837" width="17" height="1" fill="#2f4f4f"/>
<rect x="467" y="821" width="1" height="17" fill="#2f4f4f"/>
<rect x="473" y="816" width="98" height="1" fill="#b0e0e6"/>
<rect x="473" y="816" width="1" height="28" fill="#b0e0e6"/>
<rect x="474" y="817" width="96" height="1" fill="#2f4f4f"/>
<rect x="474" y="817" width="1" height="26" fill="#2f4f4f"/>
<rect x="474" y="842" width="96" height="1" fill="#b0e0e6"/>
<rect x="569" y="817" width="1" height="26" fill="#b0e0e6"/>
<rect x="473" y="843" width="98" height="1" fill="#2f4f4f"/>
<rect x="570" y="816" width="1" height="28" fill="#2f4f4f"/>
<text x="487.5" y="834" font-size="12" font-weight="bold" fill="#fff">gaspanelH2</text>
<polygon points="458,853 475,853 473,855 460,855 460,868 458,870" fill="#b0e0e6"/>
<polygon points="475,853 475,870 458,870 460,868 473,868 473,855" fill="#2f4f4f"/>
<rect x="479" y="853" width="17" height="1" fill="#b0e0e6"/>
<rect x="479" y="853" width="1" height="17" fill="#b0e0e6"/>
<rect x="480" y="854" width="15" height="1" fill="#2f4f4f"/>
<rect x="480" y="854" width="1" height="15" fill="#2f4f4f"/>
<rect x="480" y="868" width="15" height="1" fill="#b0e0e6"/>
<rect x="494" y="854" width="1" height="15" fill="#b0e0e6"/>
<rect x="479" y="869" width="17" height="1" fill="#2f4f4f"/>
<rect x="495" y="853" width="1" height="17" fill="#2f4f4f"/>
<polygon points="501,848 606,848 604,850 503,850 503,874 501,876" fill="#b0e0e6"/>
<polygon points="606,848 606,876 501,876 503,874 604,874 604,850" fill="#2f4f4f"/>
<text x="515.5" y="866" font-size="12" font-weight="bold" fill="#fff">pressuresH2</text>
<polygon points="430,885 447,885 445,887 432,887 432,900 430,902" fill="#b0e0e6"/>
<polygon points="447,885 447,902 430,902 432,900 445,900 445,887" fill="#2f4f4f"/>
<rect x="451" y="885" width="17" height="1" fill="#b0e0e6"/>
<rect x="451" y="885" width="1" height="17" fill="#b0e0e6"/>
<rect x="452" y="886" width="15" height="1" fill="#2f4f4f"/>
<rect x="452" y="886" width="1" height="15" fill="#2f4f4f"/>
<rect x="452" y="900" width="15" height="1" fill="#b0e0e6"/>
<rect x="466" y="886" width="1" height="15" fill="#b0e0e6"/>
<rect x="451" y="901" width="17" height="1" fill="#2f4f4f"/>
<rect x="467" y="885" width="1" height="17" fill="#2f4f4f"/>
<rect x="473" y="880" width="61" height="1" fill="#b0e0e6"/>
<rect x="473" y="880" width="1" height="28" fill="#b0e0e6"/>
<rect x="474" y="881" width="59" height="1" fill="#2f4f4f"/>
<rect x="474" y="881" width="1" height="26" fill="#2f4f4f"/>
<rect x="474" y="906" width="59" height="1" fill="#b0e0e6"/>
<rect x="532" y="881" width="1" height="26" fill="#b0e0e6"/>
<rect x="473" y="907" width="61" height="1" fill="#2f4f4f"/>
<rect x="533" y="880" width="1" height="28" fill="#2f4f4f"/>
<text x="487.5" y="898" font-size="12" font-weight="bold" fill="#fff">loop1</text>
<polygon points="458,917 475,917 473,919 460,919 460,932 458,934" fill="#b0e0e6"/>
<polygon points="475,917 475,934 458,934 460,932 473,932 473,919" fill="#2f4f4f"/>
<rect x="479" y="917" width="17" height="1" fill="#b0e0e6"/>
<rect x="479" y="917" width="1" height="17" fill="#b0e0e6"/>
<rect x="480" y="918" width="15" height="1" fill="#2f4f4f"/>
<rect x="480" y="918" width="1" height="15" fill="#2f4f4f"/>
<rect x="480" y="932" width="15" height="1" fill="#b0e0e6"/>
<rect x="494" y="918" width="1" height="15" fill="#b0e0e6"/>
<rect x="479" y="933" width="17" height="1" fill="#2f4f4f"/>
<rect x="495" y="917" width="1" height="17" fill="#2f4f4f"/>
<polygon points="501,912 618,912 616,914 503,914 503,938 501,940" fill="#b0e0e6"/>
<polygon points="618,912 618,940 501,940 503,938 616,938 616,914" fill="#2f4f4f"/>
<text x="515.5" y="930" font-size="12" font-weight="bold" fill="#fff">temperatures1</text>
<polygon points="458,949 475,949 473,951 460,951 460,964 458,966" fill="#b0e0e6"/>
<polygon points="475,949 475,966 458,966 460,964 473,964 473,951" fill="#2f4f4f"/>
<rect x="479" y="949" width="17" height="1" fill="#b0e0e6"/>
<rect x="479" y="949" width="1" height="17" fill="#b0e0e6"/>
<rect x="480" y="950" width="15" height="1" fill="#2f4f4f"/>
<rect x="480" y="950" width="1" height="15" fill="#2f4f4f"/>
<rect x="480" y="964" width="15" height="1" fill="#b0e0e6"/>
<rect x="494" y="950" width="1" height="15" fill="#b0e0e6"/>
<rect x="479" y="965" width="17" height="1" fill="#2f4f4f"/>
<rect x="495" y="949" width="1" height="17" fill="#2f4f4f"/>
<polygon points="501,944 588,944 586,946 503,946 503,970 501,972" fill="#b0e0e6"/>
<polygon points="588,944 588,972 501,972 503,970 586,970 586,946" fill="#2f4f4f"/>
<text x="515.5" y="962" font-size="12" font-weight="bold" fill="#fff">heatload1</text>
<polygon points="458,981 475,981 473,983 460,983 460,996 458,998" fill="#b0e0e6"/>
<polygon points="475,981 475,998 458,998 460,996 473,996 473,983" fill="#2f4f4f"/>
<rect x="479" y="981" width="17" height="1" fill="#b0e0e6"/>
<rect x="479" y="981" width="1" height="17" fill="#b0e0e6"/>
<rect x="480" y="982" width="15" height="1" fill="#2f4f4f"/>
<rect x="480" y="982" width="1" height="15" fill="#2f4f4f"/>
<rect x="480" y="996" width="15" height="1" fill="#b0e0e6"/>
<rect x="494" y="982" width="1" height="15" fill="#b0e0e6"/>
<rect x="479" y="997" width="17" height="1" fill="#2f4f4f"/>
<rect x="495" y="981" width="1" height="17" fill="#2f4f4f"/>
<polygon points="501,976 557,976 555,978 503,978 503,1002 501,1004" fill="#b0e0e6"/>
<polygon points="557,976 557,1004 501,1004 503,1002 555,1002 555,978" fill="#2f4f4f"/>
<text x="515.5" y="994" font-size="12" font-weight="bold" fill="#fff">fan1</text>
<rect x="458" y="864" width="38" height="2" fill="#e8d8d8"/>
<rect x="5" y="703" width="230" height="62" fill="#c0c0c0"/>
<rect x="6" y="704" width="228" height="1" fill="#fff"/>
<rect x="6" y="704" width="1" height="60" fill="#fff"/>
<rect x="234" y="703" width="1" height="62" fill="#000"/>
<rect x="5" y="764" width="230" height="1" fill="#000"/>
<rect x="233" y="704" width="1" height="60" fill="#a8a8a8"/>
<rect x="6" y="763" width="228" height="1" fill="#a8a8a8"/>
<rect x="10" y="708" width="220" height="17" fill="#c0c0c0"/>
<rect x="13" y="710" width="16" height="14" fill="#c0c0c0"/>
<rect x="13" y="710" width="16" height="1" fill="#fff"/>
<rect x="13" y="710" width="1" height="14" fill="#fff"/>
<rect x="28" y="710" width="1" height="14" fill="#000"/>
<rect x="13" y="723" width="16" height="1" fill="#000"/>
<rect x="27" y="711" width="1" height="12" fill="#888"/>
<rect x="14" y="722" width="14" height="1" fill="#888"/>
<rect x="17" y="716" width="9" height="3" fill="#000"/>
<rect x="194" y="710" width="16" height="14" fill="#c0c0c0"/>
<rect x="194" y="710" width="16" height="1" fill="#fff"/>
<rect x="194" y="710" width="1" height="14" fill="#fff"/>
<rect x="209" y="710" width="1" height="14" fill="#000"/>
<rect x="194" y="723" width="16" height="1" fill="#000"/>
<rect x="208" y="711" width="1" height="12" fill="#888"/>
<rect x="195" y="722" width="14" height="1" fill="#888"/>
<rect x="199" y="720" width="7" height="2" fill="#000"/>
<rect x="212" y="710" width="16" height="14" fill="#c0c0c0"/>
<rect x="212" y="710" width="16" height="1" fill="#fff"/>
<rect x="212" y="710" width="1" height="14" fill="#fff"/>
<rect x="227" y="710" width="1" height="14" fill="#000"/>
<rect x="212" y="723" width="16" height="1" fill="#000"/>
<rect x="226" y="711" width="1" height="12" fill="#888"/>
<rect x="213" y="722" width="14" height="1" fill="#888"/>
<rect x="216" y="713" width="9" height="2" fill="#000"/>
<rect x="216" y="713" width="1" height="9" fill="#000"/>
<rect x="224" y="713" width="1" height="9" fill="#000"/>
<rect x="216" y="721" width="9" height="1" fill="#000"/>
<text x="31.5" y="721" font-size="12" font-weight="bold" fill="#000">Alarm Handler</text>
<rect x="10" y="725" width="220" height="35" fill="#aec3c9"/>
<rect x="10" y="725" width="220" height="1" fill="#dfe9ec"/>
<rect x="10" y="725" width="1" height="35" fill="#dfe9ec"/>
<rect x="10" y="759" width="220" height="1" fill="#6e7f84"/>
<rect x="229" y="725" width="1" height="35" fill="#6e7f84"/>
<rect x="17" y="732" width="206" height="21" fill="#fff"/>
<polygon points="17,732 223,732 221,734 19,734 19,751 17,753" fill="#c8c8c8"/>
<polygon points="223,732 223,753 17,753 19,751 221,751 221,734" fill="#888888"/>
<text x="105" y="747" font-size="12" fill="#000" textLength="30" lengthAdjust="spacingAndGlyphs" font-family="Liberation Mono">ATARG</text>
<rect x="2" y="788" width="122" height="207" fill="#c0c0c0"/>
<rect x="3" y="789" width="120" height="1" fill="#fff"/>
<rect x="3" y="789" width="1" height="205" fill="#fff"/>
<rect x="123" y="788" width="1" height="207" fill="#000"/>
<rect x="2" y="994" width="122" height="1" fill="#000"/>
<rect x="122" y="789" width="1" height="205" fill="#a8a8a8"/>
<rect x="3" y="993" width="120" height="1" fill="#a8a8a8"/>
<rect x="7" y="793" width="112" height="17" fill="#c0c0c0"/>
<rect x="10" y="795" width="16" height="14" fill="#c0c0c0"/>
<rect x="10" y="795" width="16" height="1" fill="#fff"/>
<rect x="10" y="795" width="1" height="14" fill="#fff"/>
<rect x="25" y="795" width="1" height="14" fill="#000"/>
<rect x="10" y="808" width="16" height="1" fill="#000"/>
<rect x="24" y="796" width="1" height="12" fill="#888"/>
<rect x="11" y="807" width="14" height="1" fill="#888"/>
<rect x="14" y="801" width="9" height="3" fill="#000"/>
<rect x="83" y="795" width="16" height="14" fill="#c0c0c0"/>
<rect x="83" y="795" width="16" height="1" fill="#fff"/>
<rect x="83" y="795" width="1" height="14" fill="#fff"/>
<rect x="98" y="795" width="1" height="14" fill="#000"/>
<rect x="83" y="808" width="16" height="1" fill="#000"/>
<rect x="97" y="796" width="1" height="12" fill="#888"/>
<rect x="84" y="807" width="14" height="1" fill="#888"/>
<rect x="88" y="805" width="7" height="2" fill="#000"/>
<rect x="101" y="795" width="16" height="14" fill="#c0c0c0"/>
<rect x="101" y="795" width="16" height="1" fill="#fff"/>
<rect x="101" y="795" width="1" height="14" fill="#fff"/>
<rect x="116" y="795" width="1" height="14" fill="#000"/>
<rect x="101" y="808" width="16" height="1" fill="#000"/>
<rect x="115" y="796" width="1" height="12" fill="#888"/>
<rect x="102" y="807" width="14" height="1" fill="#888"/>
<rect x="105" y="798" width="9" height="2" fill="#000"/>
<rect x="105" y="798" width="1" height="9" fill="#000"/>
<rect x="113" y="798" width="1" height="9" fill="#000"/>
<rect x="105" y="806" width="9" height="1" fill="#000"/>
<text x="28.5" y="806" font-size="12" font-weight="bold" fill="#000">tgtalh</text>
<rect x="7" y="810" width="112" height="180" fill="#5f9ea0"/>
<rect x="11" y="814" width="105" height="41" fill="#5f9ea0"/>
<polygon points="11,814 116,814 112,818 15,818 15,851 11,855" fill="#b0e0e6"/>
<polygon points="116,814 116,855 11,855 15,851 112,851 112,818" fill="#2f4f4f"/>
<text x="61" y="837" font-size="12" font-weight="bold" fill="#fff" text-anchor="middle" textLength="31" lengthAdjust="spacingAndGlyphs">atarg</text>
<rect x="11" y="862" width="104" height="2" fill="#2f4f4f"/>
<rect x="11" y="862" width="2" height="124" fill="#2f4f4f"/>
<rect x="11" y="984" width="104" height="2" fill="#b0e0e6"/>
<rect x="113" y="862" width="2" height="124" fill="#b0e0e6"/>
<text x="62" y="878" font-size="12" font-weight="bold" fill="#fff" text-anchor="middle" textLength="64" lengthAdjust="spacingAndGlyphs">Heart Beat</text>
<rect x="21" y="889" width="9" height="9" fill="#ffff00"/>
<polygon points="21,889 30,889 28,891 23,891 23,896 21,898" fill="#ffff90"/>
<polygon points="30,889 30,898 21,898 23,896 28,896 28,891" fill="#8b8b00"/>
<text x="40" y="898" font-size="12" font-weight="bold" fill="#fff">500ms</text>
<rect x="21" y="909" width="9" height="9" fill="#5f9ea0"/>
<polygon points="21,909 30,909 28,911 23,911 23,916 21,918" fill="#b0e0e6"/>
<polygon points="30,909 30,918 21,918 23,916 28,916 28,911" fill="#2f4f4f"/>
<text x="40" y="918" font-size="12" font-weight="bold" fill="#fff">1second</text>
<rect x="21" y="929" width="9" height="9" fill="#5f9ea0"/>
<polygon points="21,929 30,929 28,931 23,931 23,936 21,938" fill="#b0e0e6"/>
<polygon points="30,929 30,938 21,938 23,936 28,936 28,931" fill="#2f4f4f"/>
<text x="40" y="938" font-size="12" font-weight="bold" fill="#fff">2seconds</text>
<rect x="21" y="949" width="9" height="9" fill="#5f9ea0"/>
<polygon points="21,949 30,949 28,951 23,951 23,956 21,958" fill="#b0e0e6"/>
<polygon points="30,949 30,958 21,958 23,956 28,956 28,951" fill="#2f4f4f"/>
<text x="40" y="958" font-size="12" font-weight="bold" fill="#fff">5seconds</text>
<rect x="21" y="969" width="9" height="9" fill="#5f9ea0"/>
<polygon points="21,969 30,969 28,971 23,971 23,976 21,978" fill="#b0e0e6"/>
<polygon points="30,969 30,978 21,978 23,976 28,976 28,971" fill="#2f4f4f"/>
<text x="40" y="978" font-size="12" font-weight="bold" fill="#fff">10seconds</text>
<rect x="1031" y="832" width="245" height="164" fill="#00ffff"/>
<rect x="1031" y="832" width="122" height="13" fill="#ffff00"/>
<text x="1091" y="843" font-size="12" font-weight="bold" fill="#ff0000" text-anchor="middle" textLength="25" lengthAdjust="spacingAndGlyphs">Desk</text>
<text x="1214" y="843" font-size="12" font-weight="bold" fill="#ff0000" text-anchor="middle" textLength="26" lengthAdjust="spacingAndGlyphs">Apps</text>
<rect x="1031" y="845" width="245" height="1" fill="#ff0000"/>
<rect x="1071" y="846" width="1" height="150" fill="#ff0000"/>
<rect x="1112" y="846" width="1" height="150" fill="#ff0000"/>
<rect x="1153" y="846" width="1" height="150" fill="#ff0000"/>
<rect x="1194" y="846" width="1" height="150" fill="#ff0000"/>
<rect x="1235" y="846" width="1" height="150" fill="#ff0000"/>
<rect x="1153" y="832" width="1" height="13" fill="#ff0000"/>
<rect x="1031" y="896" width="245" height="1" fill="#ff0000"/>
<rect x="1031" y="947" width="245" height="1" fill="#ff0000"/>
<rect x="1031" y="846" width="8" height="5" fill="#ff0000"/>
<rect x="1032" y="847" width="6" height="3" fill="#808080"/>
<rect x="1031" y="852" width="7" height="7" fill="#ff0000"/>
<rect x="1032" y="853" width="5" height="5" fill="#808080"/>
<rect x="1041" y="864" width="16" height="18" fill="#ff0000"/>
<rect x="1042" y="865" width="14" height="16" fill="#808080"/>
<text x="1044" y="876" font-size="9" font-weight="bold" fill="#000" textLength="10" lengthAdjust="spacingAndGlyphs">Ha</text>
<rect x="1031" y="897" width="8" height="6" fill="#ff0000"/>
<rect x="1032" y="898" width="6" height="4" fill="#808080"/>
<rect x="1042" y="898" width="16" height="47" fill="#ff0000"/>
<rect x="1043" y="899" width="14" height="45" fill="#808080"/>
<text x="1045" y="908" font-size="9" font-weight="bold" fill="#000" textLength="10" lengthAdjust="spacingAndGlyphs">ha</text>
<rect x="1071" y="846" width="42" height="50" fill="#ff0000"/>
<rect x="1072" y="846" width="11" height="32" fill="#ff0000"/>
<rect x="1073" y="847" width="9" height="30" fill="#808080"/>
<rect x="1082" y="846" width="11" height="32" fill="#ff0000"/>
<rect x="1083" y="847" width="9" height="30" fill="#808080"/>
<rect x="1093" y="846" width="11" height="48" fill="#ff0000"/>
<rect x="1094" y="847" width="9" height="46" fill="#808080"/>
<rect x="1103" y="846" width="10" height="30" fill="#ff0000"/>
<rect x="1104" y="847" width="8" height="28" fill="#808080"/>
<text x="1076" y="857" font-size="9" font-weight="bold" fill="#000" textLength="9" lengthAdjust="spacingAndGlyphs">cl</text>
<text x="1086" y="857" font-size="9" font-weight="bold" fill="#000" textLength="9" lengthAdjust="spacingAndGlyphs">cl</text>
<text x="1097" y="857" font-size="9" font-weight="bold" fill="#000" textLength="9" lengthAdjust="spacingAndGlyphs">cl</text>
<text x="1106" y="857" font-size="9" font-weight="bold" fill="#000" textLength="9" lengthAdjust="spacingAndGlyphs">cl</text>
<rect x="1072" y="877" width="12" height="17" fill="#ff0000"/>
<rect x="1073" y="878" width="10" height="15" fill="#ffff00"/>
<rect x="1072" y="879" width="7" height="5" fill="#ff0000"/>
<rect x="1073" y="880" width="5" height="3" fill="#808080"/>
<rect x="1072" y="883" width="4" height="11" fill="#ff0000"/>
<rect x="1073" y="884" width="2" height="9" fill="#808080"/>
<rect x="1103" y="875" width="10" height="19" fill="#ff0000"/>
<rect x="1104" y="876" width="8" height="17" fill="#ffff00"/>
<rect x="1104" y="886" width="8" height="8" fill="#ff0000"/>
<rect x="1105" y="887" width="6" height="6" fill="#808080"/>
<text x="1107" y="893" font-size="7" font-weight="bold" fill="#000">r</text>
<rect x="1090" y="887" width="4" height="7" fill="#ff0000"/>
<rect x="1091" y="888" width="2" height="5" fill="#ffff00"/>
<rect x="1072" y="894" width="40" height="1" fill="#808080"/>
<rect x="1083" y="876" width="8" height="43" fill="#ff0000"/>
<rect x="1084" y="877" width="6" height="41" fill="#000080"/>
<rect x="1087" y="882" width="2" height="4" fill="#fff"/>
<rect x="1088" y="883" width="1" height="2" fill="#000080"/>
<rect x="1084" y="915" width="16" height="19" fill="#ff0000"/>
<rect x="1085" y="916" width="14" height="17" fill="#808080"/>
<text x="1088" y="928" font-size="9" font-weight="bold" fill="#000" textLength="9" lengthAdjust="spacingAndGlyphs">xt</text>
<rect x="0" y="996" width="1280" height="28" fill="#c0c0c0"/>
<rect x="0" y="997" width="1280" height="1" fill="#fff"/>
<rect x="1" y="997" width="1" height="27" fill="#fff"/>
<rect x="0" y="1023" width="1280" height="1" fill="#000"/>
<rect x="3" y="999" width="58" height="22" fill="#c0c0c0"/>
<rect x="3" y="999" width="58" height="1" fill="#fff"/>
<rect x="3" y="999" width="1" height="22" fill="#fff"/>
<rect x="3" y="1020" width="58" height="1" fill="#000"/>
<rect x="60" y="999" width="1" height="22" fill="#000"/>
<g shape-rendering="auto"><circle cx="14.5" cy="1010" r="8" fill="#000"/>
<path d="M7,1011 A7.5,7.5 0 0 0 22,1011 Z" fill="#f2f2f2"/>
<path d="M8,1011 Q8.5,1007 11,1005 Q14,1002.5 18,1004 Q21,1006 21.5,1009 Q21,1011 18,1011.5 Q12,1012.5 8,1011 Z" fill="#e00000"/>
<path d="M11,1008 Q14,1007 17,1009" stroke="#600" stroke-width="1" fill="none"/>
<path d="M9,1013.5 Q15,1015 20,1012.5" stroke="#000" stroke-width="1" fill="none"/></g>
<text x="26" y="1014" font-size="12" font-weight="bold" fill="#000" textLength="30" lengthAdjust="spacingAndGlyphs">Start</text>
<svg x="65" y="999" width="66" height="22" overflow="hidden">
</svg>
<rect x="65" y="999" width="66" height="22" fill="#c0c0c0"/>
<rect x="65" y="999" width="66" height="1" fill="#fff"/>
<rect x="65" y="999" width="1" height="22" fill="#fff"/>
<rect x="65" y="1020" width="66" height="1" fill="#000"/>
<rect x="130" y="999" width="1" height="22" fill="#000"/>
<rect x="66" y="1019" width="64" height="1" fill="#808080"/>
<rect x="129" y="1000" width="1" height="20" fill="#808080"/>
<rect x="68" y="1004" width="17" height="12" fill="#000"/>
<rect x="69" y="1005" width="15" height="10" fill="#fff"/>
<rect x="69" y="1005" width="15" height="2" fill="#0000ff"/>
<text x="70" y="1013" font-size="7" fill="#000">></text>
<text x="88" y="1014" font-size="12" fill="#000">cryot...</text>
<svg x="134" y="999" width="66" height="22" overflow="hidden">
</svg>
<rect x="134" y="999" width="66" height="22" fill="#c0c0c0"/>
<rect x="134" y="999" width="66" height="1" fill="#fff"/>
<rect x="134" y="999" width="1" height="22" fill="#fff"/>
<rect x="134" y="1020" width="66" height="1" fill="#000"/>
<rect x="199" y="999" width="1" height="22" fill="#000"/>
<rect x="135" y="1019" width="64" height="1" fill="#808080"/>
<rect x="198" y="1000" width="1" height="20" fill="#808080"/>
<text x="139" y="1014" font-size="12" fill="#000">Fvwm P...</text>
<svg x="203" y="999" width="66" height="22" overflow="hidden">
</svg>
<rect x="203" y="999" width="66" height="22" fill="#c0c0c0"/>
<rect x="203" y="999" width="66" height="1" fill="#fff"/>
<rect x="203" y="999" width="1" height="22" fill="#fff"/>
<rect x="203" y="1020" width="66" height="1" fill="#000"/>
<rect x="268" y="999" width="1" height="22" fill="#000"/>
<rect x="204" y="1019" width="64" height="1" fill="#808080"/>
<rect x="267" y="1000" width="1" height="20" fill="#808080"/>
<text x="208" y="1014" font-size="12" fill="#000">tgtgui</text>
<svg x="272" y="999" width="66" height="22" overflow="hidden">
</svg>
<rect x="272" y="999" width="66" height="22" fill="#c0c0c0"/>
<rect x="272" y="999" width="66" height="1" fill="#fff"/>
<rect x="272" y="999" width="1" height="22" fill="#fff"/>
<rect x="272" y="1020" width="66" height="1" fill="#000"/>
<rect x="337" y="999" width="1" height="22" fill="#000"/>
<rect x="273" y="1019" width="64" height="1" fill="#808080"/>
<rect x="336" y="1000" width="1" height="20" fill="#808080"/>
<text x="277" y="1014" font-size="12" fill="#000">tgtcharts</text>
<svg x="341" y="999" width="66" height="22" overflow="hidden">
</svg>
<rect x="341" y="999" width="66" height="22" fill="#c0c0c0"/>
<rect x="341" y="999" width="66" height="1" fill="#fff"/>
<rect x="341" y="999" width="1" height="22" fill="#fff"/>
<rect x="341" y="1020" width="66" height="1" fill="#000"/>
<rect x="406" y="999" width="1" height="22" fill="#000"/>
<rect x="342" y="1019" width="64" height="1" fill="#808080"/>
<rect x="405" y="1000" width="1" height="20" fill="#808080"/>
<text x="346" y="1014" font-size="12" fill="#000">chtesr</text>
<svg x="410" y="999" width="66" height="22" overflow="hidden">
</svg>
<rect x="410" y="999" width="66" height="22" fill="#c0c0c0"/>
<rect x="410" y="999" width="66" height="1" fill="#fff"/>
<rect x="410" y="999" width="1" height="22" fill="#fff"/>
<rect x="410" y="1020" width="66" height="1" fill="#000"/>
<rect x="475" y="999" width="1" height="22" fill="#000"/>
<rect x="411" y="1019" width="64" height="1" fill="#808080"/>
<rect x="474" y="1000" width="1" height="20" fill="#808080"/>
<text x="415" y="1014" font-size="12" fill="#000">chart_cr...</text>
<svg x="479" y="999" width="66" height="22" overflow="hidden">
</svg>
<rect x="479" y="999" width="66" height="22" fill="#c0c0c0"/>
<rect x="479" y="999" width="66" height="1" fill="#fff"/>
<rect x="479" y="999" width="1" height="22" fill="#fff"/>
<rect x="479" y="1020" width="66" height="1" fill="#000"/>
<rect x="544" y="999" width="1" height="22" fill="#000"/>
<rect x="480" y="1019" width="64" height="1" fill="#808080"/>
<rect x="543" y="1000" width="1" height="20" fill="#808080"/>
<text x="484" y="1014" font-size="12" fill="#000">chart_lo...</text>
<svg x="548" y="999" width="66" height="22" overflow="hidden">
</svg>
<rect x="548" y="999" width="66" height="22" fill="#c0c0c0"/>
<rect x="548" y="999" width="66" height="1" fill="#fff"/>
<rect x="548" y="999" width="1" height="22" fill="#fff"/>
<rect x="548" y="1020" width="66" height="1" fill="#000"/>
<rect x="613" y="999" width="1" height="22" fill="#000"/>
<rect x="549" y="1019" width="64" height="1" fill="#808080"/>
<rect x="612" y="1000" width="1" height="20" fill="#808080"/>
<text x="553" y="1014" font-size="12" fill="#000">chart_lo...</text>
<svg x="617" y="999" width="66" height="22" overflow="hidden">
</svg>
<rect x="617" y="999" width="66" height="22" fill="#c0c0c0"/>
<rect x="617" y="999" width="66" height="1" fill="#fff"/>
<rect x="617" y="999" width="1" height="22" fill="#fff"/>
<rect x="617" y="1020" width="66" height="1" fill="#000"/>
<rect x="682" y="999" width="1" height="22" fill="#000"/>
<rect x="618" y="1019" width="64" height="1" fill="#808080"/>
<rect x="681" y="1000" width="1" height="20" fill="#808080"/>
<rect x="620" y="1004" width="17" height="12" fill="#000"/>
<rect x="621" y="1005" width="15" height="10" fill="#fff"/>
<rect x="621" y="1005" width="15" height="2" fill="#0000ff"/>
<text x="622" y="1013" font-size="7" fill="#000">></text>
<text x="640" y="1014" font-size="12" fill="#000">atarg...</text>
<svg x="686" y="999" width="66" height="22" overflow="hidden">
</svg>
<rect x="686" y="999" width="66" height="22" fill="#c0c0c0"/>
<rect x="686" y="999" width="66" height="1" fill="#fff"/>
<rect x="686" y="999" width="1" height="22" fill="#fff"/>
<rect x="686" y="1020" width="66" height="1" fill="#000"/>
<rect x="751" y="999" width="1" height="22" fill="#000"/>
<rect x="687" y="1019" width="64" height="1" fill="#808080"/>
<rect x="750" y="1000" width="1" height="20" fill="#808080"/>
<text x="691" y="1014" font-size="12" fill="#000">tgtgui #2</text>
<svg x="755" y="999" width="66" height="22" overflow="hidden">
</svg>
<rect x="755" y="999" width="66" height="22" fill="#c0c0c0"/>
<rect x="755" y="999" width="66" height="1" fill="#fff"/>
<rect x="755" y="999" width="1" height="22" fill="#fff"/>
<rect x="755" y="1020" width="66" height="1" fill="#000"/>
<rect x="820" y="999" width="1" height="22" fill="#000"/>
<rect x="756" y="1019" width="64" height="1" fill="#808080"/>
<rect x="819" y="1000" width="1" height="20" fill="#808080"/>
<text x="760" y="1014" font-size="12" fill="#000">tgtalh</text>
<svg x="824" y="999" width="66" height="22" overflow="hidden">
</svg>
<rect x="824" y="999" width="66" height="22" fill="#c0c0c0"/>
<rect x="824" y="999" width="66" height="1" fill="#fff"/>
<rect x="824" y="999" width="1" height="22" fill="#fff"/>
<rect x="824" y="1020" width="66" height="1" fill="#000"/>
<rect x="889" y="999" width="1" height="22" fill="#000"/>
<rect x="825" y="1019" width="64" height="1" fill="#808080"/>
<rect x="888" y="1000" width="1" height="20" fill="#808080"/>
<text x="829" y="1014" font-size="12" fill="#000">Alarm H...</text>
<svg x="893" y="999" width="66" height="22" overflow="hidden">
</svg>
<rect x="893" y="999" width="66" height="22" fill="#c0c0c0"/>
<rect x="893" y="999" width="66" height="1" fill="#fff"/>
<rect x="893" y="999" width="1" height="22" fill="#fff"/>
<rect x="893" y="1020" width="66" height="1" fill="#000"/>
<rect x="958" y="999" width="1" height="22" fill="#000"/>
<rect x="894" y="1019" width="64" height="1" fill="#808080"/>
<rect x="957" y="1000" width="1" height="20" fill="#808080"/>
<rect x="896" y="1004" width="17" height="12" fill="#000"/>
<rect x="897" y="1005" width="15" height="10" fill="#fff"/>
<rect x="897" y="1005" width="15" height="2" fill="#0000ff"/>
<text x="898" y="1013" font-size="7" fill="#000">></text>
<text x="916" y="1014" font-size="12" fill="#000">adaq...</text>
<svg x="962" y="999" width="66" height="22" overflow="hidden">
</svg>
<rect x="962" y="999" width="66" height="22" fill="#c0c0c0"/>
<rect x="962" y="999" width="66" height="1" fill="#fff"/>
<rect x="962" y="999" width="1" height="22" fill="#fff"/>
<rect x="962" y="1020" width="66" height="1" fill="#000"/>
<rect x="1027" y="999" width="1" height="22" fill="#000"/>
<rect x="963" y="1019" width="64" height="1" fill="#808080"/>
<rect x="1026" y="1000" width="1" height="20" fill="#808080"/>
<text x="967" y="1014" font-size="12" fill="#000">halogent...</text>
<rect x="1031" y="999" width="66" height="22" fill="#e0e0e0"/>
<rect x="1031" y="999" width="66" height="22" fill="url(#dith)"/>
<rect x="1031" y="999" width="66" height="1" fill="#000"/>
<rect x="1031" y="999" width="1" height="22" fill="#000"/>
<rect x="1032" y="1000" width="64" height="1" fill="#808080"/>
<rect x="1032" y="1000" width="1" height="20" fill="#808080"/>
<rect x="1031" y="1020" width="66" height="1" fill="#fff"/>
<rect x="1096" y="999" width="1" height="22" fill="#fff"/>
<text x="1036" y="1014" font-size="12" font-weight="bold" fill="#000">atarg Al...</text>
<rect x="1118" y="999" width="158" height="22" fill="#c0c0c0"/>
<rect x="1118" y="999" width="158" height="1" fill="#808080"/>
<rect x="1118" y="999" width="1" height="22" fill="#808080"/>
<rect x="1118" y="1020" width="158" height="1" fill="#fff"/>
<rect x="1275" y="999" width="1" height="22" fill="#fff"/>
<text x="1123" y="1014" font-size="10" fill="#000" font-family="Liberation Mono">Wed February 16 09:13:</text>
</svg></body></html>
